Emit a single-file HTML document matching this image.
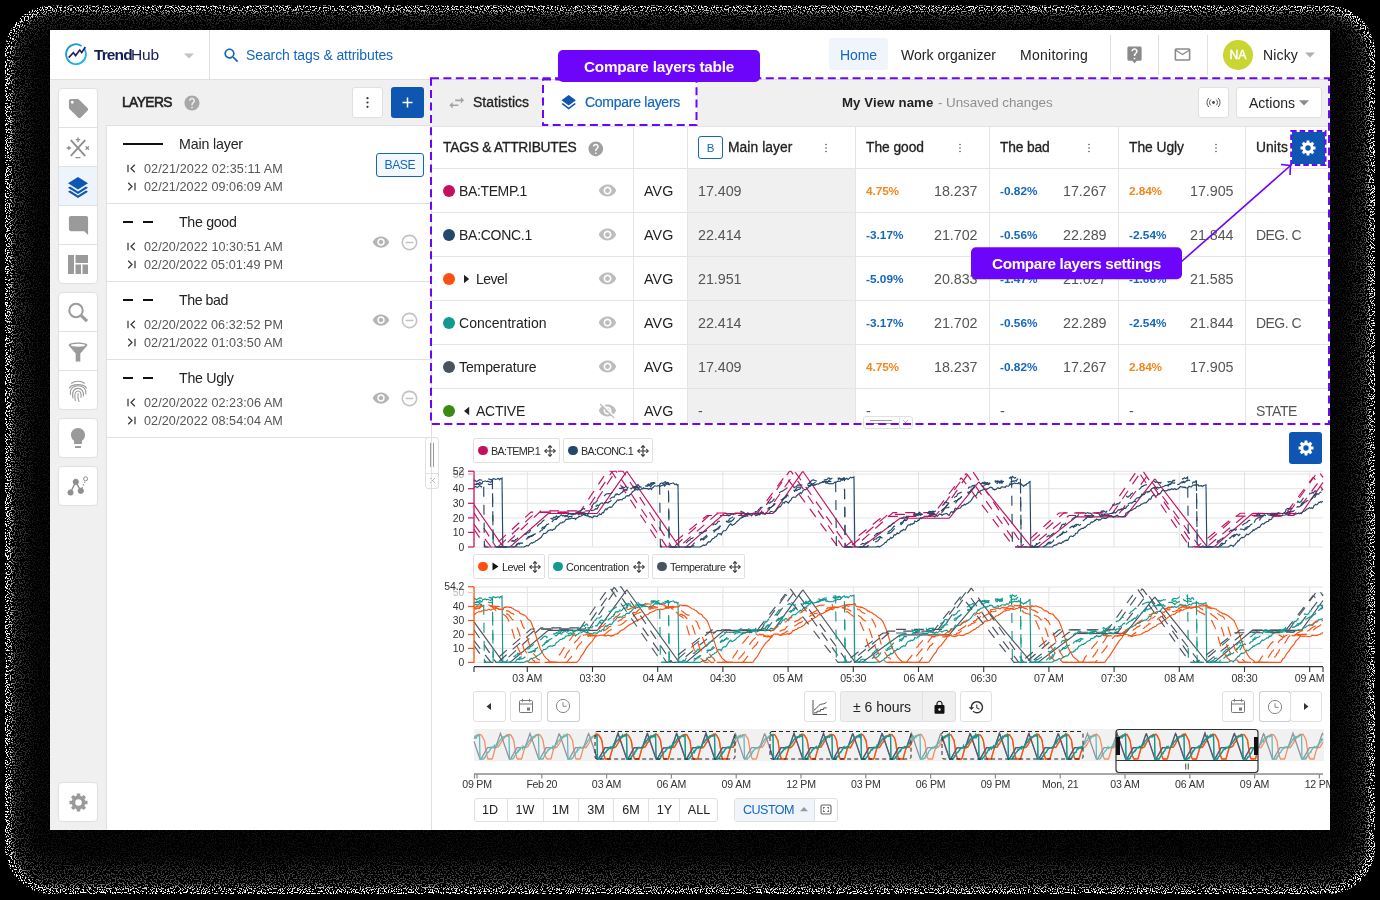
<!DOCTYPE html>
<html><head><meta charset="utf-8"><title>TrendHub</title>
<style>
html,body{margin:0;padding:0;background:#000;}
body{width:1380px;height:900px;position:relative;overflow:hidden;font-family:"Liberation Sans",sans-serif;}
#w{position:absolute;left:0;top:0;width:1380px;height:900px;will-change:transform}
.b{position:absolute;display:block}
.t{position:absolute;white-space:nowrap;line-height:20px;}
</style></head><body><div id="w">
<div class="b" style="left:50px;top:30px;width:1280px;height:800px;background:#fff"></div>
<div class="b" style="left:50px;top:79px;width:1280px;height:1px;background:#e0e0e0"></div>
<svg class="b" style="left:64px;top:42px;" width="26" height="26" viewBox="0 0 26 26"><defs><linearGradient id="lg" x1="0" y1="0" x2="0.3" y2="1"><stop offset="0" stop-color="#1a8fd0"/><stop offset="1" stop-color="#25b4e6"/></linearGradient></defs><circle cx="12" cy="12.2" r="9.9" fill="none" stroke="url(#lg)" stroke-width="1.9" stroke-dasharray="57.7 4.5" transform="rotate(-32 12 12.2)"/><path d="M4.7 15.6L9.3 10.7L11.6 13.6L15.8 8.1L17.7 10.7L21.3 5" fill="none" stroke="#1b1f5e" stroke-width="1.6" stroke-linejoin="miter"/></svg>
<span class="t" style="left:94.00px;top:44.50px;font-size:15.5px;font-weight:700;color:#141c55;letter-spacing:-1.040px;letter-spacing:-0.9px;">Trend</span>
<span class="t" style="left:131.00px;top:44.50px;font-size:15.5px;color:#141c55;letter-spacing:-0.144px;">Hub</span>
<svg class="b" style="left:183px;top:52px;" width="12" height="8" viewBox="0 0 12 8"><path d="M1 1.5h10L6 6.5z" fill="#c4c4c4"/></svg>
<div class="b" style="left:209px;top:30px;width:1px;height:49px;background:#e0e0e0"></div>
<svg style="position:absolute;left:222.00px;top:45.50px" width="19" height="19" viewBox="0 0 24 24" ><path fill="#1565c0" d="M15.5 14h-.79l-.28-.27C15.41 12.59 16 11.11 16 9.5 16 5.91 13.09 3 9.5 3S3 5.91 3 9.5 5.91 16 9.5 16c1.61 0 3.09-.59 4.23-1.57l.27.28v.79l5 4.99L20.49 19l-4.99-5zm-6 0C7.01 14 5 11.99 5 9.5S7.01 5 9.5 5 14 7.01 14 9.5 11.99 14 9.5 14z"/></svg>
<span class="t" style="left:246.00px;top:45.00px;font-size:14px;color:#1565c0;letter-spacing:-0.100px;">Search tags &amp; attributes</span>
<div class="b" style="left:829px;top:38px;width:59px;height:32px;background:#f0f5fb;border-radius:3px"></div>
<span class="t" style="left:840.00px;top:44.50px;font-size:14px;color:#1565c0;letter-spacing:-0.086px;">Home</span>
<span class="t" style="left:901.00px;top:44.50px;font-size:14px;color:#222;letter-spacing:0.024px;">Work organizer</span>
<span class="t" style="left:1020.00px;top:44.50px;font-size:14px;color:#222;letter-spacing:0.264px;">Monitoring</span>
<div class="b" style="left:1110px;top:35px;width:1px;height:40px;background:#e0e0e0"></div>
<div class="b" style="left:1158px;top:35px;width:1px;height:40px;background:#e0e0e0"></div>
<div class="b" style="left:1207px;top:35px;width:1px;height:40px;background:#e0e0e0"></div>
<svg style="position:absolute;left:1125.00px;top:45.00px" width="19" height="19" viewBox="0 0 24 24" ><path fill="#8a8a8a" d="M19 2H5c-1.11 0-2 .9-2 2v14c0 1.1.89 2 2 2h4l3 3 3-3h4c1.1 0 2-.9 2-2V4c0-1.1-.9-2-2-2zm-6 16h-2v-2h2v2zm2.07-7.75l-.9.92C13.45 11.9 13 12.5 13 14h-2v-.5c0-1.1.45-2.1 1.17-2.83l1.24-1.26c.37-.36.59-.86.59-1.41 0-1.1-.9-2-2-2s-2 .9-2 2H8c0-2.21 1.79-4 4-4s4 1.79 4 4c0 .88-.36 1.68-.93 2.25z"/></svg>
<svg style="position:absolute;left:1173.00px;top:44.50px" width="19" height="19" viewBox="0 0 24 24" ><path fill="#8a8a8a" d="M20 4H4c-1.1 0-1.99.9-1.99 2L2 18c0 1.1.9 2 2 2h16c1.1 0 2-.9 2-2V6c0-1.1-.9-2-2-2zm0 14H4V8l8 5 8-5v10zm-8-7L4 6h16l-8 5z"/></svg>
<div class="b" style="left:1223px;top:39.5px;width:30px;height:30px;background:#c9d530;border-radius:50%"></div>
<span class="t" style="left:1229.46px;top:44.80px;font-size:12.3px;-webkit-text-stroke:0.45px #fff;color:#fff;">NA</span>
<span class="t" style="left:1263.00px;top:44.50px;font-size:14px;color:#222;letter-spacing:0.156px;">Nicky</span>
<svg class="b" style="left:1304px;top:51px;" width="12" height="8" viewBox="0 0 12 8"><path d="M1 1.5h10L6 6.5z" fill="#b0b0b0"/></svg>
<div class="b" style="left:50px;top:80px;width:381px;height:750px;background:#f0f0f0"></div>
<div class="b" style="left:58px;top:88px;width:40px;height:196px;background:#fff;border:1px solid #e0e0e0;border-radius:4px;box-sizing:border-box"></div>
<div class="b" style="left:59px;top:127px;width:38px;height:1px;background:#e0e0e0"></div>
<div class="b" style="left:59px;top:167px;width:38px;height:38px;background:#eef4fb"></div>
<div class="b" style="left:59px;top:166px;width:38px;height:1px;background:#e0e0e0"></div>
<div class="b" style="left:59px;top:205px;width:38px;height:1px;background:#e0e0e0"></div>
<div class="b" style="left:59px;top:244px;width:38px;height:1px;background:#e0e0e0"></div>
<div class="b" style="left:58px;top:292px;width:40px;height:118px;background:#fff;border:1px solid #e0e0e0;border-radius:4px;box-sizing:border-box"></div>
<div class="b" style="left:59px;top:331px;width:38px;height:1px;background:#e0e0e0"></div>
<div class="b" style="left:59px;top:370px;width:38px;height:1px;background:#e0e0e0"></div>
<div class="b" style="left:58px;top:418px;width:40px;height:40px;background:#fff;border:1px solid #e0e0e0;border-radius:4px;box-sizing:border-box"></div>
<div class="b" style="left:58px;top:466px;width:40px;height:40px;background:#fff;border:1px solid #e0e0e0;border-radius:4px;box-sizing:border-box"></div>
<div class="b" style="left:58px;top:782px;width:40px;height:40px;background:#fff;border:1px solid #e0e0e0;border-radius:4px;box-sizing:border-box"></div>
<svg style="position:absolute;left:66.50px;top:97.00px" width="23" height="23" viewBox="0 0 24 24" ><path fill="#9a9a9a" d="M21.41 11.58l-9-9C12.05 2.22 11.55 2 11 2H4c-1.1 0-2 .9-2 2v7c0 .55.22 1.05.59 1.42l9 9c.36.36.86.58 1.41.58.55 0 1.05-.22 1.41-.59l7-7c.37-.36.59-.86.59-1.41 0-.55-.23-1.06-.59-1.42zM5.5 7C4.67 7 4 6.33 4 5.5S4.67 4 5.5 4 7 4.67 7 5.5 6.33 7 5.5 7z"/></svg>
<svg class="b" style="left:66px;top:137px;" width="24" height="22" viewBox="0 0 24 22"><g stroke="#8e8e8e" stroke-width="1.9" fill="none" stroke-linecap="round"><path d="M5.3 3.6 L18.7 18.4 M18.7 3.6 L5.3 18.4"/><path d="M12 0.8v3.6M10.2 2.6h3.6" stroke-width="1.3"/><path d="M10 20.6h4" stroke-width="1.4"/><path d="M1.2 11h3.4M2.9 9.3v3.4" stroke-width="1.3"/><path d="M20 9.6l2.6 2.6M22.6 9.6L20 12.2" stroke-width="1.3"/></g></svg>
<svg class="b" style="left:67px;top:175.5px;" width="22" height="22" viewBox="0 0 22 22"><g fill="#0f56b3"><path d="M11 1L1 7.2 11 13.4 21 7.2z"/><path d="M11 15.4L3 10.4 1 11.7 11 17.9 21 11.7 19 10.4z"/><path d="M11 19.4L3 14.4 1 15.7 11 21.9 21 15.7 19 14.4z"/></g></svg>
<svg style="position:absolute;left:66.50px;top:214.00px" width="23" height="23" viewBox="0 0 24 24" ><path fill="#9a9a9a" d="M4 2h16c1.1 0 2 .9 2 2v18l-4-4H4c-1.1 0-2-.9-2-2V4c0-1.1.9-2 2-2z"/></svg>
<svg class="b" style="left:68px;top:255px;" width="20" height="19" viewBox="0 0 20 19"><g fill="#9a9a9a"><rect x="0" y="0" width="6" height="19"/><rect x="7.5" y="0" width="12.5" height="8"/><rect x="7.5" y="9.5" width="5.5" height="9.5"/><rect x="14.5" y="9.5" width="5.5" height="9.5"/></g></svg>
<svg class="b" style="left:66px;top:300px;" width="24" height="24" viewBox="0 0 24 24"><g fill="none" stroke="#9a9a9a"><circle cx="10" cy="10.5" r="6.7" stroke-width="2"/><path d="M15.2 15.7L21 21.2" stroke-width="3.2"/></g></svg>
<svg class="b" style="left:68px;top:342px;" width="20" height="20" viewBox="0 0 20 20"><g fill="#9a9a9a"><path d="M0.5 3.2 C0.5 1.4 5 0.4 10 0.4 C15 0.4 19.5 1.4 19.5 3.2 L12.3 11.5 V19.5 H7.7 V11.5 Z"/><ellipse cx="10" cy="3.2" rx="7.4" ry="1.5" fill="#fff"/></g></svg>
<svg class="b" style="left:67px;top:379px;" width="22" height="24" viewBox="0 0 22 24"><g fill="none" stroke="#9a9a9a" stroke-width="1.1" stroke-linecap="round"><path d="M4.5 4.2C8 1.6 14 1.6 17.5 4.2"/><path d="M2.5 9C5 4.5 17 4.5 19.5 9"/><path d="M3.5 15.5C2.5 9 7 6.8 11 6.8S19.5 9 18.8 15"/><path d="M6 19C4.5 12 7.5 9.4 11 9.4S17 12 16.4 17"/><path d="M8.3 21.5C6.8 15 8.5 12 11 12S14.5 14.5 14 18.5"/><path d="M11 14.5C10.6 18 11 20.5 12 22.5"/></g></svg>
<svg style="position:absolute;left:66.00px;top:426.00px" width="24" height="24" viewBox="0 0 24 24" ><path fill="#9a9a9a" d="M9 21c0 .55.45 1 1 1h4c.55 0 1-.45 1-1v-1H9v1zm3-19C8.14 2 5 5.14 5 9c0 2.38 1.19 4.47 3 5.74V17c0 .55.45 1 1 1h6c.55 0 1-.45 1-1v-2.26c1.81-1.27 3-3.36 3-5.74 0-3.86-3.14-7-7-7z"/></svg>
<svg class="b" style="left:66px;top:474px;" width="24" height="24" viewBox="0 0 24 24"><g fill="#8e8e8e" stroke="#8e8e8e"><circle cx="4.5" cy="18.5" r="2.6"/><circle cx="9.8" cy="7.8" r="2.6"/><circle cx="14.8" cy="16.8" r="2.6"/><path d="M4.5 18.5L9.8 7.8L14.8 16.8" fill="none" stroke-width="1.4"/><path d="M14.8 16.8L19.5 6.3" fill="none" stroke-width="1.2" stroke-dasharray="1.3 1.6"/><circle cx="19.6" cy="4.8" r="2" fill="#fff" stroke-width="1"/></g></svg>
<svg style="position:absolute;left:63.50px;top:788.00px" width="29" height="29" viewBox="0 0 24 24" fill-rule="evenodd"><path fill="#9a9a9a" d="M10.48 6.51L10.62 4.53L13.38 4.53L13.52 6.51L14.81 7.04L16.30 5.74L18.26 7.70L16.96 9.19L17.49 10.48L19.47 10.62L19.47 13.38L17.49 13.52L16.96 14.81L18.26 16.30L16.30 18.26L14.81 16.96L13.52 17.49L13.38 19.47L10.62 19.47L10.48 17.49L9.19 16.96L7.70 18.26L5.74 16.30L7.04 14.81L6.51 13.52L4.53 13.38L4.53 10.62L6.51 10.48L7.04 9.19L5.74 7.70L7.70 5.74L9.19 7.04ZM14.70 12A2.7 2.7 0 1 0 9.30 12A2.7 2.7 0 1 0 14.70 12Z"/></svg>
<span class="t" style="left:122.00px;top:92.50px;font-size:13.8px;-webkit-text-stroke:0.55px #222;color:#222;letter-spacing:-0.573px;">LAYERS</span>
<svg style="position:absolute;left:182.70px;top:94.00px" width="18" height="18" viewBox="0 0 24 24" ><path fill="#a8a8a8" d="M12 2C6.48 2 2 6.48 2 12s4.48 10 10 10 10-4.48 10-10S17.52 2 12 2zm1 17h-2v-2h2v2zm2.07-7.75l-.9.92C13.45 12.9 13 13.5 13 15h-2v-.5c0-1.1.45-2.1 1.17-2.83l1.24-1.26c.37-.36.59-.86.59-1.41 0-1.1-.9-2-2-2s-2 .9-2 2H8c0-2.21 1.79-4 4-4s4 1.79 4 4c0 .88-.36 1.68-.93 2.25z"/></svg>
<div class="b" style="left:352px;top:87px;width:31px;height:31px;background:#fff;border:1px solid #e0e0e0;border-radius:3px;box-sizing:border-box"></div>
<svg class="b" style="left:365px;top:96px;" width="5" height="13" viewBox="0 0 5 13"><g fill="#333"><circle cx="2.5" cy="2.2" r="1.1"/><circle cx="2.5" cy="6.5" r="1.1"/><circle cx="2.5" cy="10.8" r="1.1"/></g></svg>
<div class="b" style="left:391px;top:87px;width:33px;height:31px;background:#0f56b3;border-radius:3px"></div>
<svg class="b" style="left:401px;top:96px;" width="13" height="13" viewBox="0 0 13 13"><path d="M6.5 1.5v10M1.5 6.5h10" stroke="#fff" stroke-width="1.5"/></svg>
<div class="b" style="left:106px;top:125px;width:325px;height:705px;background:#fff;border-left:1px solid #e0e0e0;border-top:1px solid #e0e0e0;box-sizing:border-box"></div>
<div class="b" style="left:107px;top:203px;width:324px;height:1px;background:#e0e0e0"></div>
<div class="b" style="left:123px;top:143.2px;width:40px;height:1.6px;background:#111"></div>
<span class="t" style="left:179.00px;top:134.00px;font-size:14.2px;color:#222;letter-spacing:-0.150px;">Main layer</span>
<span class="t" style="left:144.00px;top:158.50px;font-size:12.6px;color:#555;letter-spacing:0.120px;">02/21/2022 02:35:11 AM</span>
<span class="t" style="left:144.00px;top:176.50px;font-size:12.6px;color:#555;letter-spacing:0.077px;">02/21/2022 09:06:09 AM</span>
<svg class="b" style="left:126px;top:163px;" width="11" height="11" viewBox="0 0 11 11"><path d="M2 1.8v7.4M8.8 1.8L5 5.5l3.8 3.7" fill="none" stroke="#333" stroke-width="1.2"/></svg>
<svg class="b" style="left:126px;top:181px;" width="11" height="11" viewBox="0 0 11 11"><path d="M9 1.8v7.4M2.2 1.8L6 5.5L2.2 9.2" fill="none" stroke="#333" stroke-width="1.2"/></svg>
<div class="b" style="left:376px;top:152.5px;width:47.5px;height:24px;background:#f3f8fd;border:1px solid #1565c0;border-radius:3px;box-sizing:border-box"></div>
<span class="t" style="left:384.55px;top:155.00px;font-size:12.2px;color:#1565c0;letter-spacing:-0.513px;">BASE</span>
<div class="b" style="left:107px;top:281px;width:324px;height:1px;background:#e0e0e0"></div>
<div class="b" style="left:123px;top:221.2px;width:10px;height:1.8px;background:#111"></div>
<div class="b" style="left:143px;top:221.2px;width:10px;height:1.8px;background:#111"></div>
<span class="t" style="left:179.00px;top:212.00px;font-size:14.2px;color:#222;letter-spacing:-0.312px;">The good</span>
<span class="t" style="left:144.00px;top:236.50px;font-size:12.6px;color:#555;letter-spacing:0.077px;">02/20/2022 10:30:51 AM</span>
<span class="t" style="left:144.00px;top:254.50px;font-size:12.6px;color:#555;letter-spacing:0.046px;">02/20/2022 05:01:49 PM</span>
<svg class="b" style="left:126px;top:241px;" width="11" height="11" viewBox="0 0 11 11"><path d="M2 1.8v7.4M8.8 1.8L5 5.5l3.8 3.7" fill="none" stroke="#333" stroke-width="1.2"/></svg>
<svg class="b" style="left:126px;top:259px;" width="11" height="11" viewBox="0 0 11 11"><path d="M9 1.8v7.4M2.2 1.8L6 5.5L2.2 9.2" fill="none" stroke="#333" stroke-width="1.2"/></svg>
<svg style="position:absolute;left:372.00px;top:233.00px" width="18" height="18" viewBox="0 0 24 24" ><path fill="#b5b5b5" d="M12 4.5C7 4.5 2.73 7.61 1 12c1.73 4.39 6 7.5 11 7.5s9.27-3.11 11-7.5c-1.73-4.39-6-7.5-11-7.5zM12 17c-2.76 0-5-2.24-5-5s2.24-5 5-5 5 2.24 5 5-2.24 5-5 5zm0-8c-1.66 0-3 1.34-3 3s1.34 3 3 3 3-1.34 3-3-1.34-3-3-3z"/></svg>
<svg style="position:absolute;left:399.50px;top:232.50px" width="19" height="19" viewBox="0 0 24 24" ><path fill="#c2c2c2" d="M7 11v2h10v-2H7zm5-9C6.48 2 2 6.48 2 12s4.48 10 10 10 10-4.48 10-10S17.52 2 12 2zm0 18c-4.41 0-8-3.59-8-8s3.59-8 8-8 8 3.59 8 8-3.59 8-8 8z"/></svg>
<div class="b" style="left:107px;top:359px;width:324px;height:1px;background:#e0e0e0"></div>
<div class="b" style="left:123px;top:299.2px;width:10px;height:1.8px;background:#111"></div>
<div class="b" style="left:143px;top:299.2px;width:10px;height:1.8px;background:#111"></div>
<span class="t" style="left:179.00px;top:290.00px;font-size:14.2px;color:#222;letter-spacing:-0.443px;">The bad</span>
<span class="t" style="left:144.00px;top:314.50px;font-size:12.6px;color:#555;letter-spacing:0.046px;">02/20/2022 06:32:52 PM</span>
<span class="t" style="left:144.00px;top:332.50px;font-size:12.6px;color:#555;letter-spacing:0.077px;">02/21/2022 01:03:50 AM</span>
<svg class="b" style="left:126px;top:319px;" width="11" height="11" viewBox="0 0 11 11"><path d="M2 1.8v7.4M8.8 1.8L5 5.5l3.8 3.7" fill="none" stroke="#333" stroke-width="1.2"/></svg>
<svg class="b" style="left:126px;top:337px;" width="11" height="11" viewBox="0 0 11 11"><path d="M9 1.8v7.4M2.2 1.8L6 5.5L2.2 9.2" fill="none" stroke="#333" stroke-width="1.2"/></svg>
<svg style="position:absolute;left:372.00px;top:311.00px" width="18" height="18" viewBox="0 0 24 24" ><path fill="#b5b5b5" d="M12 4.5C7 4.5 2.73 7.61 1 12c1.73 4.39 6 7.5 11 7.5s9.27-3.11 11-7.5c-1.73-4.39-6-7.5-11-7.5zM12 17c-2.76 0-5-2.24-5-5s2.24-5 5-5 5 2.24 5 5-2.24 5-5 5zm0-8c-1.66 0-3 1.34-3 3s1.34 3 3 3 3-1.34 3-3-1.34-3-3-3z"/></svg>
<svg style="position:absolute;left:399.50px;top:310.50px" width="19" height="19" viewBox="0 0 24 24" ><path fill="#c2c2c2" d="M7 11v2h10v-2H7zm5-9C6.48 2 2 6.48 2 12s4.48 10 10 10 10-4.48 10-10S17.52 2 12 2zm0 18c-4.41 0-8-3.59-8-8s3.59-8 8-8 8 3.59 8 8-3.59 8-8 8z"/></svg>
<div class="b" style="left:107px;top:437px;width:324px;height:1px;background:#e0e0e0"></div>
<div class="b" style="left:123px;top:377.2px;width:10px;height:1.8px;background:#111"></div>
<div class="b" style="left:143px;top:377.2px;width:10px;height:1.8px;background:#111"></div>
<span class="t" style="left:179.00px;top:368.00px;font-size:14.2px;color:#222;letter-spacing:-0.290px;">The Ugly</span>
<span class="t" style="left:144.00px;top:392.50px;font-size:12.6px;color:#555;letter-spacing:0.077px;">02/20/2022 02:23:06 AM</span>
<span class="t" style="left:144.00px;top:410.50px;font-size:12.6px;color:#555;letter-spacing:0.077px;">02/20/2022 08:54:04 AM</span>
<svg class="b" style="left:126px;top:397px;" width="11" height="11" viewBox="0 0 11 11"><path d="M2 1.8v7.4M8.8 1.8L5 5.5l3.8 3.7" fill="none" stroke="#333" stroke-width="1.2"/></svg>
<svg class="b" style="left:126px;top:415px;" width="11" height="11" viewBox="0 0 11 11"><path d="M9 1.8v7.4M2.2 1.8L6 5.5L2.2 9.2" fill="none" stroke="#333" stroke-width="1.2"/></svg>
<svg style="position:absolute;left:372.00px;top:389.00px" width="18" height="18" viewBox="0 0 24 24" ><path fill="#b5b5b5" d="M12 4.5C7 4.5 2.73 7.61 1 12c1.73 4.39 6 7.5 11 7.5s9.27-3.11 11-7.5c-1.73-4.39-6-7.5-11-7.5zM12 17c-2.76 0-5-2.24-5-5s2.24-5 5-5 5 2.24 5 5-2.24 5-5 5zm0-8c-1.66 0-3 1.34-3 3s1.34 3 3 3 3-1.34 3-3-1.34-3-3-3z"/></svg>
<svg style="position:absolute;left:399.50px;top:388.50px" width="19" height="19" viewBox="0 0 24 24" ><path fill="#c2c2c2" d="M7 11v2h10v-2H7zm5-9C6.48 2 2 6.48 2 12s4.48 10 10 10 10-4.48 10-10S17.52 2 12 2zm0 18c-4.41 0-8-3.59-8-8s3.59-8 8-8 8 3.59 8 8-3.59 8-8 8z"/></svg>
<div class="b" style="left:425px;top:437px;width:14px;height:52px;background:#fff;border:1px solid #e0e0e0;border-radius:3px;box-sizing:border-box"></div>
<div class="b" style="left:426px;top:472.5px;width:12px;height:1px;background:#e0e0e0"></div>
<div class="b" style="left:429.5px;top:443px;width:1px;height:24px;background:#999"></div>
<div class="b" style="left:432.5px;top:443px;width:1px;height:24px;background:#999"></div>
<svg class="b" style="left:428.5px;top:477px;" width="7" height="7" viewBox="0 0 7 7"><path d="M1 1l5 5M6 1L1 6" stroke="#aaa" stroke-width="0.9"/></svg>
<div class="b" style="left:431px;top:126px;width:1px;height:704px;background:#e0e0e0"></div>
<div class="b" style="left:432px;top:80px;width:898px;height:46px;background:#f0f0f0"></div>
<svg style="position:absolute;left:447.45px;top:92.85px" width="19.5" height="19.5" viewBox="0 0 24 24" ><path fill="#a3a3a3" d="M6.99 11L3 15l3.99 4v-3H14v-2H6.99v-3zM21 9l-3.99-4v3H10v2h7.01v3L21 9z"/></svg>
<span class="t" style="left:473.00px;top:91.60px;font-size:14px;-webkit-text-stroke:0.3px #222;color:#222;letter-spacing:-0.001px;">Statistics</span>
<div class="b" style="left:543px;top:80px;width:154px;height:46px;background:#fff"></div>
<svg class="b" style="left:561.3px;top:93.6px;" width="16" height="17" viewBox="0 0 16 17"><g fill="#0f56b3"><path d="M7.7 1L0.5 6.2 7.7 11.4 14.9 6.2z"/><path d="M7.7 13.4L1.8 9.1 0.5 10.1 7.7 15.4 14.9 10.1 13.6 9.1z"/></g></svg>
<span class="t" style="left:585.00px;top:91.60px;font-size:14px;-webkit-text-stroke:0.2px #1565c0;color:#1565c0;letter-spacing:-0.272px;">Compare layers</span>
<span class="t" style="left:842.00px;top:93.00px;font-size:13.2px;font-weight:700;color:#222;letter-spacing:0.126px;">My View name</span>
<span class="t" style="left:938.00px;top:93.00px;font-size:13.4px;color:#8f8f8f;letter-spacing:-0.044px;">- Unsaved changes</span>
<div class="b" style="left:1198px;top:87px;width:31px;height:31px;background:#fff;border:1px solid #e0e0e0;border-radius:3px;box-sizing:border-box"></div>
<svg class="b" style="left:1205px;top:96px;" width="17" height="13" viewBox="0 0 17 13"><g fill="none" stroke="#444" stroke-width="0.9"><circle cx="8.5" cy="6.5" r="1.4" fill="#444" stroke="none"/><path d="M5.8 3.6a4 4 0 0 0 0 5.8M11.2 3.6a4 4 0 0 1 0 5.8"/><path d="M3.8 2a6.4 6.4 0 0 0 0 9M13.2 2a6.4 6.4 0 0 1 0 9"/></g></svg>
<div class="b" style="left:1236px;top:87px;width:86px;height:31px;background:#fff;border:1px solid #e0e0e0;border-radius:3px;box-sizing:border-box"></div>
<span class="t" style="left:1249.00px;top:92.50px;font-size:14px;color:#222;letter-spacing:0.013px;">Actions</span>
<svg class="b" style="left:1298px;top:99px;" width="12" height="8" viewBox="0 0 12 8"><path d="M1 1.2h10L6 6.5z" fill="#8a8a8a"/></svg>
<div class="b" style="left:686.5px;top:169px;width:168.5px;height:254px;background:#f0f0f0"></div>
<div class="b" style="left:432px;top:125.5px;width:898px;height:1px;background:#e4e4e4"></div>
<div class="b" style="left:432px;top:168px;width:898px;height:1px;background:#e4e4e4"></div>
<div class="b" style="left:432px;top:212px;width:898px;height:1px;background:#e4e4e4"></div>
<div class="b" style="left:432px;top:256px;width:898px;height:1px;background:#e4e4e4"></div>
<div class="b" style="left:432px;top:300px;width:898px;height:1px;background:#e4e4e4"></div>
<div class="b" style="left:432px;top:344px;width:898px;height:1px;background:#e4e4e4"></div>
<div class="b" style="left:432px;top:388px;width:898px;height:1px;background:#e4e4e4"></div>
<div class="b" style="left:633px;top:126px;width:1px;height:297px;background:#e4e4e4"></div>
<div class="b" style="left:687px;top:126px;width:1px;height:297px;background:#e4e4e4"></div>
<div class="b" style="left:855px;top:126px;width:1px;height:297px;background:#e4e4e4"></div>
<div class="b" style="left:989px;top:126px;width:1px;height:297px;background:#e4e4e4"></div>
<div class="b" style="left:1118px;top:126px;width:1px;height:297px;background:#e4e4e4"></div>
<div class="b" style="left:1245px;top:126px;width:1px;height:297px;background:#e4e4e4"></div>
<span class="t" style="left:443.00px;top:138.00px;font-size:13.8px;-webkit-text-stroke:0.3px #222;color:#222;letter-spacing:-0.236px;">TAGS &amp; ATTRIBUTES</span>
<svg style="position:absolute;left:587.20px;top:139.70px" width="17.6" height="17.6" viewBox="0 0 24 24" ><path fill="#a0a0a0" d="M12 2C6.48 2 2 6.48 2 12s4.48 10 10 10 10-4.48 10-10S17.52 2 12 2zm1 17h-2v-2h2v2zm2.07-7.75l-.9.92C13.45 12.9 13 13.5 13 15h-2v-.5c0-1.1.45-2.1 1.17-2.83l1.24-1.26c.37-.36.59-.86.59-1.41 0-1.1-.9-2-2-2s-2 .9-2 2H8c0-2.21 1.79-4 4-4s4 1.79 4 4c0 .88-.36 1.68-.93 2.25z"/></svg>
<div class="b" style="left:698px;top:136px;width:25px;height:23px;background:#fff;border:1px solid #1565c0;border-radius:3px;box-sizing:border-box"></div>
<span class="t" style="left:706.66px;top:137.50px;font-size:11.5px;color:#1565c0;">B</span>
<span class="t" style="left:728.00px;top:138.00px;font-size:13.8px;-webkit-text-stroke:0.3px #222;color:#222;letter-spacing:0.085px;">Main layer</span>
<svg class="b" style="left:824px;top:143px;" width="4" height="10" viewBox="0 0 4 10"><g fill="#555"><circle cx="2" cy="1.5" r="0.8"/><circle cx="2" cy="5" r="0.8"/><circle cx="2" cy="8.5" r="0.8"/></g></svg>
<span class="t" style="left:866.00px;top:138.00px;font-size:13.8px;-webkit-text-stroke:0.3px #222;color:#222;letter-spacing:-0.038px;">The good</span>
<svg class="b" style="left:958px;top:143px;" width="4" height="10" viewBox="0 0 4 10"><g fill="#555"><circle cx="2" cy="1.5" r="0.8"/><circle cx="2" cy="5" r="0.8"/><circle cx="2" cy="8.5" r="0.8"/></g></svg>
<span class="t" style="left:1000.00px;top:138.00px;font-size:13.8px;-webkit-text-stroke:0.3px #222;color:#222;letter-spacing:-0.162px;">The bad</span>
<svg class="b" style="left:1087px;top:143px;" width="4" height="10" viewBox="0 0 4 10"><g fill="#555"><circle cx="2" cy="1.5" r="0.8"/><circle cx="2" cy="5" r="0.8"/><circle cx="2" cy="8.5" r="0.8"/></g></svg>
<span class="t" style="left:1129.00px;top:138.00px;font-size:13.8px;-webkit-text-stroke:0.3px #222;color:#222;letter-spacing:-0.027px;">The Ugly</span>
<svg class="b" style="left:1214px;top:143px;" width="4" height="10" viewBox="0 0 4 10"><g fill="#555"><circle cx="2" cy="1.5" r="0.8"/><circle cx="2" cy="5" r="0.8"/><circle cx="2" cy="8.5" r="0.8"/></g></svg>
<span class="t" style="left:1256.00px;top:138.00px;font-size:13.8px;-webkit-text-stroke:0.3px #222;color:#222;letter-spacing:0.112px;">Units</span>
<div class="b" style="left:432px;top:126px;width:898px;height:297px;overflow:hidden"><div style="position:absolute;left:-432px;top:-126px">
<div class="b" style="left:443px;top:184.5px;width:12px;height:12px;background:#c4105f;border-radius:50%"></div>
<span class="t" style="left:459.00px;top:180.50px;font-size:14px;color:#222;letter-spacing:-0.370px;">BA:TEMP.1</span>
<svg style="position:absolute;left:598.00px;top:181.00px" width="19" height="19" viewBox="0 0 24 24" ><path fill="#bdbdbd" d="M12 4.5C7 4.5 2.73 7.61 1 12c1.73 4.39 6 7.5 11 7.5s9.27-3.11 11-7.5c-1.73-4.39-6-7.5-11-7.5zM12 17c-2.76 0-5-2.24-5-5s2.24-5 5-5 5 2.24 5 5-2.24 5-5 5zm0-8c-1.66 0-3 1.34-3 3s1.34 3 3 3 3-1.34 3-3-1.34-3-3-3z"/></svg>
<span class="t" style="left:644.00px;top:180.50px;font-size:14.3px;color:#222;letter-spacing:0.121px;">AVG</span>
<span class="t" style="left:698.00px;top:180.50px;font-size:14.3px;color:#555;letter-spacing:-0.039px;">17.409</span>
<span class="t" style="left:866.00px;top:180.50px;font-size:11.8px;font-weight:700;color:#f5861f;letter-spacing:-0.091px;">4.75%</span>
<span class="t" style="left:934.00px;top:180.50px;font-size:14.3px;color:#555;letter-spacing:-0.039px;">18.237</span>
<span class="t" style="left:1000.00px;top:180.50px;font-size:11.8px;font-weight:700;color:#1565c0;letter-spacing:0.019px;">-0.82%</span>
<span class="t" style="left:1063.00px;top:180.50px;font-size:14.3px;color:#555;letter-spacing:-0.039px;">17.267</span>
<span class="t" style="left:1129.00px;top:180.50px;font-size:11.8px;font-weight:700;color:#f5861f;letter-spacing:-0.091px;">2.84%</span>
<span class="t" style="left:1190.00px;top:180.50px;font-size:14.3px;color:#555;letter-spacing:-0.039px;">17.905</span>
<div class="b" style="left:443px;top:228.5px;width:12px;height:12px;background:#23486b;border-radius:50%"></div>
<span class="t" style="left:459.00px;top:224.50px;font-size:14px;color:#222;letter-spacing:-0.274px;">BA:CONC.1</span>
<svg style="position:absolute;left:598.00px;top:225.00px" width="19" height="19" viewBox="0 0 24 24" ><path fill="#bdbdbd" d="M12 4.5C7 4.5 2.73 7.61 1 12c1.73 4.39 6 7.5 11 7.5s9.27-3.11 11-7.5c-1.73-4.39-6-7.5-11-7.5zM12 17c-2.76 0-5-2.24-5-5s2.24-5 5-5 5 2.24 5 5-2.24 5-5 5zm0-8c-1.66 0-3 1.34-3 3s1.34 3 3 3 3-1.34 3-3-1.34-3-3-3z"/></svg>
<span class="t" style="left:644.00px;top:224.50px;font-size:14.3px;color:#222;letter-spacing:0.121px;">AVG</span>
<span class="t" style="left:698.00px;top:224.50px;font-size:14.3px;color:#555;letter-spacing:-0.039px;">22.414</span>
<span class="t" style="left:866.00px;top:224.50px;font-size:11.8px;font-weight:700;color:#1565c0;letter-spacing:0.019px;">-3.17%</span>
<span class="t" style="left:934.00px;top:224.50px;font-size:14.3px;color:#555;letter-spacing:-0.039px;">21.702</span>
<span class="t" style="left:1000.00px;top:224.50px;font-size:11.8px;font-weight:700;color:#1565c0;letter-spacing:0.019px;">-0.56%</span>
<span class="t" style="left:1063.00px;top:224.50px;font-size:14.3px;color:#555;letter-spacing:-0.039px;">22.289</span>
<span class="t" style="left:1129.00px;top:224.50px;font-size:11.8px;font-weight:700;color:#1565c0;letter-spacing:0.019px;">-2.54%</span>
<span class="t" style="left:1190.00px;top:224.50px;font-size:14.3px;color:#555;letter-spacing:-0.039px;">21.844</span>
<span class="t" style="left:1256.00px;top:224.50px;font-size:14px;color:#555;letter-spacing:-0.538px;">DEG. C</span>
<div class="b" style="left:443px;top:272.5px;width:12px;height:12px;background:#fb5012;border-radius:50%"></div>
<svg class="b" style="left:463px;top:273.5px;" width="7" height="10" viewBox="0 0 7 10"><path d="M1 0.8v8.4L6.2 5z" fill="#222"/></svg>
<span class="t" style="left:476.00px;top:268.50px;font-size:14px;color:#222;letter-spacing:-0.493px;">Level</span>
<svg style="position:absolute;left:598.00px;top:269.00px" width="19" height="19" viewBox="0 0 24 24" ><path fill="#bdbdbd" d="M12 4.5C7 4.5 2.73 7.61 1 12c1.73 4.39 6 7.5 11 7.5s9.27-3.11 11-7.5c-1.73-4.39-6-7.5-11-7.5zM12 17c-2.76 0-5-2.24-5-5s2.24-5 5-5 5 2.24 5 5-2.24 5-5 5zm0-8c-1.66 0-3 1.34-3 3s1.34 3 3 3 3-1.34 3-3-1.34-3-3-3z"/></svg>
<span class="t" style="left:644.00px;top:268.50px;font-size:14.3px;color:#222;letter-spacing:0.121px;">AVG</span>
<span class="t" style="left:698.00px;top:268.50px;font-size:14.3px;color:#555;letter-spacing:-0.039px;">21.951</span>
<span class="t" style="left:866.00px;top:268.50px;font-size:11.8px;font-weight:700;color:#1565c0;letter-spacing:0.019px;">-5.09%</span>
<span class="t" style="left:934.00px;top:268.50px;font-size:14.3px;color:#555;letter-spacing:-0.039px;">20.833</span>
<span class="t" style="left:1000.00px;top:268.50px;font-size:11.8px;font-weight:700;color:#1565c0;letter-spacing:0.019px;">-1.47%</span>
<span class="t" style="left:1063.00px;top:268.50px;font-size:14.3px;color:#555;letter-spacing:-0.039px;">21.627</span>
<span class="t" style="left:1129.00px;top:268.50px;font-size:11.8px;font-weight:700;color:#1565c0;letter-spacing:0.019px;">-1.66%</span>
<span class="t" style="left:1190.00px;top:268.50px;font-size:14.3px;color:#555;letter-spacing:-0.039px;">21.585</span>
<div class="b" style="left:443px;top:316.5px;width:12px;height:12px;background:#139a90;border-radius:50%"></div>
<span class="t" style="left:459.00px;top:312.50px;font-size:14px;color:#222;letter-spacing:0.026px;">Concentration</span>
<svg style="position:absolute;left:598.00px;top:313.00px" width="19" height="19" viewBox="0 0 24 24" ><path fill="#bdbdbd" d="M12 4.5C7 4.5 2.73 7.61 1 12c1.73 4.39 6 7.5 11 7.5s9.27-3.11 11-7.5c-1.73-4.39-6-7.5-11-7.5zM12 17c-2.76 0-5-2.24-5-5s2.24-5 5-5 5 2.24 5 5-2.24 5-5 5zm0-8c-1.66 0-3 1.34-3 3s1.34 3 3 3 3-1.34 3-3-1.34-3-3-3z"/></svg>
<span class="t" style="left:644.00px;top:312.50px;font-size:14.3px;color:#222;letter-spacing:0.121px;">AVG</span>
<span class="t" style="left:698.00px;top:312.50px;font-size:14.3px;color:#555;letter-spacing:-0.039px;">22.414</span>
<span class="t" style="left:866.00px;top:312.50px;font-size:11.8px;font-weight:700;color:#1565c0;letter-spacing:0.019px;">-3.17%</span>
<span class="t" style="left:934.00px;top:312.50px;font-size:14.3px;color:#555;letter-spacing:-0.039px;">21.702</span>
<span class="t" style="left:1000.00px;top:312.50px;font-size:11.8px;font-weight:700;color:#1565c0;letter-spacing:0.019px;">-0.56%</span>
<span class="t" style="left:1063.00px;top:312.50px;font-size:14.3px;color:#555;letter-spacing:-0.039px;">22.289</span>
<span class="t" style="left:1129.00px;top:312.50px;font-size:11.8px;font-weight:700;color:#1565c0;letter-spacing:0.019px;">-2.54%</span>
<span class="t" style="left:1190.00px;top:312.50px;font-size:14.3px;color:#555;letter-spacing:-0.039px;">21.844</span>
<span class="t" style="left:1256.00px;top:312.50px;font-size:14px;color:#555;letter-spacing:-0.538px;">DEG. C</span>
<div class="b" style="left:443px;top:360.5px;width:12px;height:12px;background:#47535f;border-radius:50%"></div>
<span class="t" style="left:459.00px;top:356.50px;font-size:14px;color:#222;letter-spacing:-0.099px;">Temperature</span>
<svg style="position:absolute;left:598.00px;top:357.00px" width="19" height="19" viewBox="0 0 24 24" ><path fill="#bdbdbd" d="M12 4.5C7 4.5 2.73 7.61 1 12c1.73 4.39 6 7.5 11 7.5s9.27-3.11 11-7.5c-1.73-4.39-6-7.5-11-7.5zM12 17c-2.76 0-5-2.24-5-5s2.24-5 5-5 5 2.24 5 5-2.24 5-5 5zm0-8c-1.66 0-3 1.34-3 3s1.34 3 3 3 3-1.34 3-3-1.34-3-3-3z"/></svg>
<span class="t" style="left:644.00px;top:356.50px;font-size:14.3px;color:#222;letter-spacing:0.121px;">AVG</span>
<span class="t" style="left:698.00px;top:356.50px;font-size:14.3px;color:#555;letter-spacing:-0.039px;">17.409</span>
<span class="t" style="left:866.00px;top:356.50px;font-size:11.8px;font-weight:700;color:#f5861f;letter-spacing:-0.091px;">4.75%</span>
<span class="t" style="left:934.00px;top:356.50px;font-size:14.3px;color:#555;letter-spacing:-0.039px;">18.237</span>
<span class="t" style="left:1000.00px;top:356.50px;font-size:11.8px;font-weight:700;color:#1565c0;letter-spacing:0.019px;">-0.82%</span>
<span class="t" style="left:1063.00px;top:356.50px;font-size:14.3px;color:#555;letter-spacing:-0.039px;">17.267</span>
<span class="t" style="left:1129.00px;top:356.50px;font-size:11.8px;font-weight:700;color:#f5861f;letter-spacing:-0.091px;">2.84%</span>
<span class="t" style="left:1190.00px;top:356.50px;font-size:14.3px;color:#555;letter-spacing:-0.039px;">17.905</span>
<div class="b" style="left:443px;top:404.5px;width:12px;height:12px;background:#3a8a12;border-radius:50%"></div>
<svg class="b" style="left:463px;top:405.5px;" width="7" height="10" viewBox="0 0 7 10"><path d="M6.2 0.8v8.4L1 5z" fill="#222"/></svg>
<span class="t" style="left:476.00px;top:400.50px;font-size:14px;color:#222;letter-spacing:-0.261px;">ACTIVE</span>
<svg style="position:absolute;left:598.00px;top:401.00px" width="19" height="19" viewBox="0 0 24 24" ><path fill="#bdbdbd" d="M12 7c2.76 0 5 2.24 5 5 0 .65-.13 1.26-.36 1.83l2.92 2.92c1.51-1.26 2.7-2.89 3.43-4.75-1.73-4.39-6-7.5-11-7.5-1.4 0-2.74.25-3.98.7l2.16 2.16C10.74 7.13 11.35 7 12 7zM2 4.27l2.28 2.28.46.46C3.08 8.3 1.78 10.02 1 12c1.73 4.39 6 7.5 11 7.5 1.55 0 3.03-.3 4.38-.84l.42.42L19.73 22 21 20.73 3.27 3 2 4.27zM7.53 9.8l1.55 1.55c-.05.21-.08.43-.08.65 0 1.66 1.34 3 3 3 .22 0 .44-.03.65-.08l1.55 1.55c-.67.33-1.41.53-2.2.53-2.76 0-5-2.24-5-5 0-.79.2-1.53.53-2.2zm4.31-.78l3.15 3.15.02-.16c0-1.66-1.34-3-3-3l-.17.01z"/></svg>
<span class="t" style="left:644.00px;top:400.50px;font-size:14.3px;color:#222;letter-spacing:0.121px;">AVG</span>
<span class="t" style="left:698.00px;top:400.50px;font-size:14.3px;color:#555;">-</span>
<span class="t" style="left:866.00px;top:400.50px;font-size:14.3px;color:#555;">-</span>
<span class="t" style="left:1000.00px;top:400.50px;font-size:14.3px;color:#555;">-</span>
<span class="t" style="left:1129.00px;top:400.50px;font-size:14.3px;color:#555;">-</span>
<span class="t" style="left:1256.00px;top:400.50px;font-size:14px;color:#555;letter-spacing:-0.408px;">STATE</span>
</div></div>
<div class="b" style="left:1292px;top:132px;width:33px;height:32px;background:#0f56b3"></div>
<svg style="position:absolute;left:1296.00px;top:136.00px" width="24" height="24" viewBox="0 0 24 24" fill-rule="evenodd"><path fill="#fff" d="M10.48 6.51L10.62 4.53L13.38 4.53L13.52 6.51L14.81 7.04L16.30 5.74L18.26 7.70L16.96 9.19L17.49 10.48L19.47 10.62L19.47 13.38L17.49 13.52L16.96 14.81L18.26 16.30L16.30 18.26L14.81 16.96L13.52 17.49L13.38 19.47L10.62 19.47L10.48 17.49L9.19 16.96L7.70 18.26L5.74 16.30L7.04 14.81L6.51 13.52L4.53 13.38L4.53 10.62L6.51 10.48L7.04 9.19L5.74 7.70L7.70 5.74L9.19 7.04ZM14.70 12A2.7 2.7 0 1 0 9.30 12A2.7 2.7 0 1 0 14.70 12Z"/></svg>
<div class="b" style="left:862.5px;top:416px;width:50px;height:13px;background:#fff;border:1px solid #e0e0e0;border-radius:3px;box-sizing:border-box"></div>
<div class="b" style="left:899px;top:417px;width:1px;height:11px;background:#e0e0e0"></div>
<div class="b" style="left:870px;top:419.5px;width:22px;height:1px;background:#999"></div>
<div class="b" style="left:870px;top:422.5px;width:22px;height:1px;background:#999"></div>
<svg class="b" style="left:902px;top:419px;" width="7" height="7" viewBox="0 0 7 7"><path d="M1 1l5 5M6 1L1 6" stroke="#aaa" stroke-width="0.8"/></svg>
<div class="b" style="left:1289px;top:432px;width:33px;height:32px;background:#0f56b3;border-radius:3px"></div>
<svg style="position:absolute;left:1293.50px;top:436.00px" width="24" height="24" viewBox="0 0 24 24" fill-rule="evenodd"><path fill="#fff" d="M10.48 6.51L10.62 4.53L13.38 4.53L13.52 6.51L14.81 7.04L16.30 5.74L18.26 7.70L16.96 9.19L17.49 10.48L19.47 10.62L19.47 13.38L17.49 13.52L16.96 14.81L18.26 16.30L16.30 18.26L14.81 16.96L13.52 17.49L13.38 19.47L10.62 19.47L10.48 17.49L9.19 16.96L7.70 18.26L5.74 16.30L7.04 14.81L6.51 13.52L4.53 13.38L4.53 10.62L6.51 10.48L7.04 9.19L5.74 7.70L7.70 5.74L9.19 7.04ZM14.70 12A2.7 2.7 0 1 0 9.30 12A2.7 2.7 0 1 0 14.70 12Z"/></svg>
<div class="b" style="left:473px;top:438px;width:87px;height:25px;background:#fff;border:1px solid #e0e0e0;border-radius:2px;box-sizing:border-box"></div>
<div class="b" style="left:478px;top:445.5px;width:9.5px;height:9.5px;background:#c4105f;border-radius:50%"></div>
<span class="t" style="left:491.00px;top:440.50px;font-size:10.8px;color:#2a2a2a;letter-spacing:-0.669px;">BA:TEMP.1</span>
<svg class="b" style="left:543.5px;top:444.5px;" width="12" height="12" viewBox="0 0 12 12"><g fill="none" stroke="#333" stroke-width="1.05"><path d="M6 0.8V11.2M0.8 6H11.2"/><path d="M4.1 2.7L6 0.8L7.9 2.7M4.1 9.3L6 11.2L7.9 9.3M2.7 4.1L0.8 6L2.7 7.9M9.3 4.1L11.2 6L9.3 7.9" stroke-linejoin="miter"/></g></svg>
<div class="b" style="left:563px;top:438px;width:90px;height:25px;background:#fff;border:1px solid #e0e0e0;border-radius:2px;box-sizing:border-box"></div>
<div class="b" style="left:568px;top:445.5px;width:9.5px;height:9.5px;background:#23486b;border-radius:50%"></div>
<span class="t" style="left:581.00px;top:440.50px;font-size:10.8px;color:#2a2a2a;letter-spacing:-0.690px;">BA:CONC.1</span>
<svg class="b" style="left:636.5px;top:444.5px;" width="12" height="12" viewBox="0 0 12 12"><g fill="none" stroke="#333" stroke-width="1.05"><path d="M6 0.8V11.2M0.8 6H11.2"/><path d="M4.1 2.7L6 0.8L7.9 2.7M4.1 9.3L6 11.2L7.9 9.3M2.7 4.1L0.8 6L2.7 7.9M9.3 4.1L11.2 6L9.3 7.9" stroke-linejoin="miter"/></g></svg>
<div class="b" style="left:473px;top:554px;width:72px;height:25px;background:#fff;border:1px solid #e0e0e0;border-radius:2px;box-sizing:border-box"></div>
<div class="b" style="left:478px;top:561.5px;width:9.5px;height:9.5px;background:#fb5012;border-radius:50%"></div>
<svg class="b" style="left:492px;top:562px;" width="7" height="9" viewBox="0 0 7 9"><path d="M0.5 0.5v8L6.5 4.5z" fill="#111"/></svg>
<span class="t" style="left:502.00px;top:556.50px;font-size:10.8px;color:#2a2a2a;letter-spacing:-0.563px;">Level</span>
<svg class="b" style="left:528.5px;top:560.5px;" width="12" height="12" viewBox="0 0 12 12"><g fill="none" stroke="#333" stroke-width="1.05"><path d="M6 0.8V11.2M0.8 6H11.2"/><path d="M4.1 2.7L6 0.8L7.9 2.7M4.1 9.3L6 11.2L7.9 9.3M2.7 4.1L0.8 6L2.7 7.9M9.3 4.1L11.2 6L9.3 7.9" stroke-linejoin="miter"/></g></svg>
<div class="b" style="left:548px;top:554px;width:101px;height:25px;background:#fff;border:1px solid #e0e0e0;border-radius:2px;box-sizing:border-box"></div>
<div class="b" style="left:553px;top:561.5px;width:9.5px;height:9.5px;background:#139a90;border-radius:50%"></div>
<span class="t" style="left:566.00px;top:556.50px;font-size:10.8px;color:#2a2a2a;letter-spacing:-0.326px;">Concentration</span>
<svg class="b" style="left:632.5px;top:560.5px;" width="12" height="12" viewBox="0 0 12 12"><g fill="none" stroke="#333" stroke-width="1.05"><path d="M6 0.8V11.2M0.8 6H11.2"/><path d="M4.1 2.7L6 0.8L7.9 2.7M4.1 9.3L6 11.2L7.9 9.3M2.7 4.1L0.8 6L2.7 7.9M9.3 4.1L11.2 6L9.3 7.9" stroke-linejoin="miter"/></g></svg>
<div class="b" style="left:652px;top:554px;width:93px;height:25px;background:#fff;border:1px solid #e0e0e0;border-radius:2px;box-sizing:border-box"></div>
<div class="b" style="left:657px;top:561.5px;width:9.5px;height:9.5px;background:#47535f;border-radius:50%"></div>
<span class="t" style="left:670.00px;top:556.50px;font-size:10.8px;color:#2a2a2a;letter-spacing:-0.466px;">Temperature</span>
<svg class="b" style="left:729.0px;top:560.5px;" width="12" height="12" viewBox="0 0 12 12"><g fill="none" stroke="#333" stroke-width="1.05"><path d="M6 0.8V11.2M0.8 6H11.2"/><path d="M4.1 2.7L6 0.8L7.9 2.7M4.1 9.3L6 11.2L7.9 9.3M2.7 4.1L0.8 6L2.7 7.9M9.3 4.1L11.2 6L9.3 7.9" stroke-linejoin="miter"/></g></svg>
<svg class="b" style="left:0;top:0" width="1380" height="900" viewBox="0 0 1380 900"><path d="M527.3 471V547M527.3 587V662.4" stroke="#e3e3e3" stroke-width="1"/><path d="M592.5 471V547M592.5 587V662.4" stroke="#e3e3e3" stroke-width="1"/><path d="M657.7 471V547M657.7 587V662.4" stroke="#e3e3e3" stroke-width="1"/><path d="M722.9 471V547M722.9 587V662.4" stroke="#e3e3e3" stroke-width="1"/><path d="M788.1 471V547M788.1 587V662.4" stroke="#e3e3e3" stroke-width="1"/><path d="M853.3 471V547M853.3 587V662.4" stroke="#e3e3e3" stroke-width="1"/><path d="M918.5 471V547M918.5 587V662.4" stroke="#e3e3e3" stroke-width="1"/><path d="M983.7 471V547M983.7 587V662.4" stroke="#e3e3e3" stroke-width="1"/><path d="M1048.9 471V547M1048.9 587V662.4" stroke="#e3e3e3" stroke-width="1"/><path d="M1114.1 471V547M1114.1 587V662.4" stroke="#e3e3e3" stroke-width="1"/><path d="M1179.3 471V547M1179.3 587V662.4" stroke="#e3e3e3" stroke-width="1"/><path d="M1244.5 471V547M1244.5 587V662.4" stroke="#e3e3e3" stroke-width="1"/><path d="M1309.7 471V547M1309.7 587V662.4" stroke="#e3e3e3" stroke-width="1"/><path d="M474 532.4H1323" stroke="#e3e3e3" stroke-width="1"/><path d="M474 648.4H1323" stroke="#e3e3e3" stroke-width="1"/><path d="M474 517.9H1323" stroke="#e3e3e3" stroke-width="1"/><path d="M474 634.5H1323" stroke="#e3e3e3" stroke-width="1"/><path d="M474 503.3H1323" stroke="#e3e3e3" stroke-width="1"/><path d="M474 620.5H1323" stroke="#e3e3e3" stroke-width="1"/><path d="M474 488.7H1323" stroke="#e3e3e3" stroke-width="1"/><path d="M474 606.5H1323" stroke="#e3e3e3" stroke-width="1"/><path d="M474 474.1H1323" stroke="#e3e3e3" stroke-width="1"/><path d="M474 592.5H1323" stroke="#e3e3e3" stroke-width="1"/><path d="M474 471.3H1323M474 547H1323M474 587H1323M474 662.4H1323" stroke="#e3e3e3" stroke-width="1"/><path d="M474 504.7L503 546.6L504 547L510 547L548 513.7L549 513.5L597 513.5L598 512.5L626 472.4L627 471.5L679 546.6L680 547L686 547L724 513.7L725 513.5L773 513.5L774 512.5L802 472.4L803 471.5L855 546.6L856 547L862 547L900 518.4L901 518.2L949 518.2L950 517.3L978 482.8L979 482.1L1031 546.6L1032 547L1038 547L1076 517.1L1077 516.8L1125 516.8L1126 515.9L1154 479.8L1155 479L1207 546.6L1208 547L1214 547L1252 513.7L1253 513.5L1301 513.5L1302 512.5L1323 482.4" fill="none" stroke="#c4105f" stroke-width="1.15"/>
<path d="M474 484.2L476.4 484.2L477.2 483.4L478 484.3L480.4 484.1L482 483.4L482.8 481.5L484.4 481.3L485.2 480.8L486.8 481.7L487.6 481.2L490.8 482.4L492.4 480.2L493.2 478.5L495.6 479.4L497.2 479L498 478.5L498.8 478.8L499.6 479.7L500.4 478.5L501.2 478.8L502 478L502.8 547L523.6 547L524.4 546.9L526.8 545.5L527.6 546L528.4 545.9L530 543.8L531.6 542.6L532.4 543.2L533.2 542.4L534.8 542L535.6 540.9L537.2 540.3L541.2 537.3L543.6 533.5L545.2 533.5L546.8 532.5L547.6 531.2L549.2 530.1L550 530.2L550.8 529.7L552.4 530.3L553.2 529.4L554 529.4L554.8 529L556.4 526.1L558 525.5L560.4 522.9L562 523L562.8 521.9L563.6 522.2L564.4 521.6L566 519.3L566.8 519.4L568.4 518.9L569.2 519.1L570 518.4L570.8 518.6L571.6 517.9L573.2 518.5L574 518.5L574.8 518.2L575.6 519.4L576.4 518.2L578 517.6L578.8 516.6L581.2 516L583.6 514.5L584.4 514.7L585.2 515.5L586 515.3L586.8 515.9L588.4 515.8L589.2 516.9L590 516.7L590.8 516.9L592.4 517.8L594 516L597.2 516.6L598 515.3L598.8 515.1L599.6 513.7L600.4 514.5L601.2 514.6L602 513.1L602.8 512.4L603.6 512.8L604.4 510.5L606 508.7L606.8 509.8L607.6 508.4L609.2 507.3L610 507L610.8 507.4L611.6 507.3L614 503.8L616.4 501.7L617.2 500L618 499.8L618.8 500.5L619.6 499.7L620.4 499.5L622 499.8L622.8 498.6L625.2 497.7L626 496.3L627.6 495.6L629.2 495.9L630 494.3L630.8 494.3L632.4 492L634.8 490.1L635.6 489.1L636.4 489.1L637.2 489.9L638 489.9L638.8 488.8L639.6 489.5L641.2 489.2L642 488.4L642.8 488.9L643.6 487.9L644.4 488.5L645.2 488.3L646 488.9L646.8 488.5L647.6 488.6L648.4 489.3L649.2 488.7L650 488.9L650.8 488.1L651.6 489.3L652.4 487.8L653.2 487.6L654 486.3L654.8 485.8L657.2 486.2L658 485.6L658.8 485.7L659.6 486.5L663.6 484.7L664.4 486.1L665.2 485.6L666 484.4L666.8 484L669.2 484.9L670 483.4L670.8 483.7L673.2 482.8L674.8 484.5L676.4 483.9L677.2 485.2L678 484.7L678.8 547L699.6 547L700.4 546.9L703.6 544.9L704.4 545.4L706 544.9L708.4 541.6L710 542L712.4 538.8L714 538.3L714.8 537.1L716.4 536.6L718 533.7L718.8 533.6L719.6 534L720.4 533.7L721.2 534.8L722.8 531.5L723.6 530.7L725.2 530.7L726 530.2L729.2 525.2L730.8 523.7L731.6 525.1L732.4 525.3L733.2 524.5L734 524.5L735.6 523.1L736.4 522L738.8 520.2L740.4 518.1L741.2 518.1L743.6 516.5L745.2 516.5L748.4 514.3L749.2 514.3L750 515L750.8 514.7L751.6 515.8L753.2 513.6L754.8 514.4L755.6 515.5L757.2 515.1L758.8 513.9L759.6 513.8L761.2 512.3L762 512.5L762.8 512.1L764.4 513.8L765.2 514.3L766 512.8L767.6 513.5L769.2 513L770.8 511.3L773.2 512L774.8 511.7L775.6 511.2L778 508L778.8 507.6L779.6 506.6L780.4 506.7L782.8 502.8L783.6 502.6L784.4 503.1L785.2 501.5L786 501.4L786.8 501.7L788.4 503.1L790 500.7L790.8 500.3L791.6 498.4L793.2 497L795.6 497.2L796.4 496L800.4 492.5L801.2 493.7L803.6 490L804.4 489.5L806 489.7L806.8 488.3L807.6 488.2L809.2 486.3L810 486.3L811.6 484.3L812.4 484.2L813.2 485.2L816.4 484.4L817.2 483.8L818 484.1L818.8 483.9L819.6 483.1L822 482.4L823.6 481.2L824.4 481.1L826 483.1L826.8 483.2L827.6 482.9L829.2 483.9L830 483.5L833.2 483.7L834.8 482L836.4 482.1L837.2 481.4L840.4 481.3L841.2 479.8L843.6 477.8L844.4 477.9L845.2 479.3L846.8 478.2L847.6 479.2L848.4 479.4L849.2 478.4L850.8 477.3L851.6 477.9L854 477L854.8 547L875.6 547L876.4 546.9L877.2 546.4L878 546.8L878.8 546.2L879.6 546.9L883.6 544.1L885.2 542.3L886 542.5L887.6 539.9L888.4 539.5L889.2 539.7L890.8 537.4L891.6 538.3L893.2 537.2L894 535L894.8 534.7L895.6 535.1L897.2 532.9L898 533.7L899.6 532.7L901.2 530.7L902 530.8L903.6 529.5L904.4 530L905.2 530L907.6 525.5L909.2 524.6L910 525.2L910.8 523.9L912.4 524.3L913.2 523.4L914 523.4L914.8 521L916.4 521.7L917.2 521.3L918 520.2L918.8 520.3L920.4 517.9L921.2 518.6L922 517.7L925.2 516.5L926 516.8L926.8 516.4L927.6 516.8L928.4 515.9L930 515L931.6 515.3L933.2 516.3L934 515.9L934.8 517L935.6 515.7L936.4 515.3L937.2 516.4L939.6 513.9L940.4 514.3L941.2 514.2L942 515.5L943.6 514.2L946.8 513.4L948.4 515.2L949.2 515.4L950.8 512.1L951.6 511.7L952.4 512.5L953.2 511.6L954 511.6L954.8 508.8L955.6 508.2L957.2 509L960.4 508L962 505.6L962.8 505.6L964.4 504.3L965.2 505L966.8 503.6L967.6 503.7L969.2 502L970 501.7L970.8 500.8L974 496L976.4 495.3L978 492.1L978.8 492.6L980.4 490.8L982.8 490L983.6 489L984.4 488.9L985.2 489.3L986 488.9L986.8 489.4L987.6 488.6L988.4 488.5L990 487.3L990.8 487.2L992.4 488L993.2 489.5L994 489.2L994.8 489.9L995.6 489.2L996.4 489.2L997.2 488.1L998 487.7L998.8 488.4L1000.4 488.4L1001.2 487.3L1002 486.8L1002.8 486.8L1003.6 487.2L1004.4 487L1005.2 487.4L1006 486.3L1006.8 485.8L1007.6 486.2L1008.4 486.1L1009.2 485.3L1010 483.6L1010.8 484.6L1011.6 485.1L1012.4 484L1014.8 483L1015.6 483.7L1017.2 483.3L1018 483.8L1018.8 482.6L1019.6 483.1L1020.4 484.4L1021.2 484L1022 485.1L1022.8 485.1L1023.6 486.3L1025.2 484.8L1026 485.2L1026.8 483.6L1028.4 483L1029.2 481.9L1030 481.5L1030.8 547L1052.4 546.9L1054 545.4L1056.4 544.9L1058.8 543.1L1059.6 542.9L1061.2 543.6L1062.8 541.7L1063.6 542L1064.4 540.8L1065.2 540.9L1066 540.1L1067.6 540.3L1068.4 539.4L1070 536.3L1071.6 536.1L1072.4 536.5L1073.2 536.4L1074 535.2L1074.8 535.2L1075.6 533.3L1077.2 533.1L1078.8 530L1079.6 530.1L1080.4 529.2L1082 528.3L1083.6 528.3L1084.4 527.2L1085.2 527.3L1087.6 524.8L1090 524L1090.8 522.4L1091.6 522L1092.4 522.3L1093.2 521.5L1094 521.5L1094.8 520.2L1095.6 520.3L1096.4 519.1L1097.2 519.5L1098 519.3L1098.8 520.2L1099.6 519.7L1100.4 519.9L1102 518.2L1103.6 518L1104.4 518.3L1106 518.3L1106.8 517.9L1108.4 516.4L1110.8 515.9L1112.4 516.4L1113.2 517.4L1114 516.4L1114.8 516.8L1115.6 515.9L1117.2 515.1L1118.8 516.5L1122.8 516.7L1125.2 515.7L1126 513L1126.8 512.9L1128.4 511.5L1130 511L1130.8 510.1L1131.6 510.4L1134 508.7L1135.6 508.3L1136.4 506.7L1138 506L1138.8 506.2L1139.6 505.5L1140.4 505.3L1141.2 504L1142 504.2L1144.4 502.8L1146 502.8L1148.4 500.3L1149.2 498.9L1150.8 499.1L1151.6 497L1152.4 495.9L1154 494.8L1154.8 495.8L1156.4 496.2L1157.2 495.4L1158 493.7L1159.6 493.8L1160.4 493.3L1162 490.6L1162.8 490.1L1164.4 490.6L1166.8 490.8L1168.4 489.5L1169.2 490.1L1170 489.4L1170.8 489.6L1171.6 488.8L1173.2 489.6L1174.8 488.6L1175.6 489.5L1176.4 489.7L1177.2 489L1178 488.9L1180.4 486.5L1181.2 487L1182 486.9L1183.6 487.4L1185.2 487.2L1186 487.9L1186.8 488L1187.6 487.9L1189.2 486.3L1190 486.8L1191.6 486.9L1192.4 485.3L1195.6 484.9L1196.4 485.7L1197.2 484.8L1198 484.7L1198.8 486.1L1201.2 485.7L1202.8 486.5L1203.6 485.5L1206 484.9L1206.8 547L1227.6 547L1228.4 546.9L1230.8 545.2L1232.4 545.7L1233.2 546.6L1234 545.3L1234.8 545L1235.6 543.6L1237.2 542.1L1238 540.6L1238.8 541L1240.4 538.4L1241.2 538.1L1242 537.2L1242.8 537.8L1244.4 537.1L1246.8 534.1L1247.6 534.7L1248.4 534.7L1251.6 531.7L1252.4 531.3L1253.2 529.7L1254 530.4L1255.6 528.9L1256.4 528.9L1258 527.3L1259.6 527.3L1261.2 524.7L1262 524L1262.8 523.6L1263.6 524L1264.4 523.5L1265.2 522.4L1266 522.3L1266.8 521.5L1268.4 521.5L1269.2 519.4L1270 519.9L1271.6 519.1L1272.4 517.2L1273.2 517L1274.8 515.9L1275.6 515.7L1276.4 516L1278 515.4L1278.8 516.1L1279.6 515.2L1282 515.7L1282.8 515.2L1285.2 515L1286 514.5L1288.4 514.8L1289.2 514.4L1290.8 515.5L1293.2 515.4L1294 515.1L1294.8 514.2L1297.2 513.8L1298.8 512.9L1299.6 513.7L1300.4 513.1L1301.2 513.8L1303.6 511L1304.4 511.1L1305.2 510.7L1306.8 509.1L1308.4 508.6L1309.2 507.7L1310.8 508.4L1311.6 507.7L1312.4 508.5L1313.2 507.6L1314 505.6L1314.8 505L1315.6 504.5L1316.4 504.9L1317.2 504.6L1318.8 502.4L1319.6 502.5L1320.4 501.8L1321.2 502.3L1322.8 501.3" fill="none" stroke="#23486b" stroke-width="1.15"/>
<path d="M474 621.9L503 662L504 662.4L510 662.4L548 630.5L549 630.3L597 630.3L598 629.3L626 590.9L627 590L679 662L680 662.4L686 662.4L724 630.5L725 630.3L773 630.3L774 629.3L802 590.9L803 590L855 662L856 662.4L862 662.4L900 635L901 634.8L949 634.8L950 633.9L978 600.9L979 600.2L1031 662L1032 662.4L1038 662.4L1076 633.7L1077 633.5L1125 633.5L1126 632.6L1154 598L1155 597.3L1207 662L1208 662.4L1214 662.4L1252 630.5L1253 630.3L1301 630.3L1302 629.3L1323 600.5" fill="none" stroke="#47535f" stroke-width="1.15"/>
<path d="M474 602.2L476.4 602.2L477.2 601.5L478 602.3L480.4 602.2L482 601.4L482.8 599.6L484.4 599.4L485.2 598.9L486.8 599.8L487.6 599.3L490.8 600.5L492.4 598.4L493.2 596.8L495.6 597.6L498 596.8L498.8 597L499.6 597.8L500.4 596.7L501.2 597L502 596.2L502.8 662.4L523.6 662.4L524.4 662.3L526.8 661L527.6 661.4L528.4 661.3L530 659.3L531.6 658.2L532.4 658.8L533.2 658L534.8 657.6L535.6 656.6L537.2 655.9L541.2 653.1L543.6 649.5L545.2 649.5L546.8 648.5L547.6 647.2L549.2 646.2L550 646.3L550.8 645.8L552.4 646.4L553.2 645.6L554.8 645.2L556.4 642.4L558 641.8L560.4 639.3L562 639.4L562.8 638.3L563.6 638.6L564.4 638.1L566 635.9L566.8 636L568.4 635.5L569.2 635.6L570 635L570.8 635.1L571.6 634.5L573.2 635.1L574.8 634.8L575.6 635.9L576.4 634.8L578 634.2L578.8 633.2L581.2 632.7L583.6 631.2L584.4 631.5L585.2 632.2L586 632L586.8 632.6L588.4 632.5L589.2 633.6L590 633.4L590.8 633.6L592.4 634.4L594 632.6L597.2 633.3L598 632.1L598.8 631.9L599.6 630.5L600.4 631.2L601.2 631.4L602 629.9L602.8 629.3L603.6 629.7L604.4 627.4L606 625.7L606.8 626.7L607.6 625.4L609.2 624.4L610 624L610.8 624.5L611.6 624.4L614 621L616.4 619L617.2 617.3L618 617.1L618.8 617.8L619.6 617.1L620.4 616.9L622 617.2L622.8 616L625.2 615.2L626 613.8L627.6 613.2L629.2 613.4L630 611.9L630.8 611.9L632.4 609.6L634.8 607.9L635.6 606.9L636.4 606.9L637.2 607.7L638 607.7L638.8 606.6L639.6 607.3L641.2 607L642 606.2L642.8 606.7L643.6 605.7L644.4 606.4L645.2 606.2L646 606.7L646.8 606.3L647.6 606.5L648.4 607.1L649.2 606.5L650 606.7L650.8 605.9L651.6 607.1L652.4 605.7L653.2 605.5L654 604.2L654.8 603.7L657.2 604.1L658 603.6L658.8 603.6L659.6 604.4L663.6 602.7L664.4 604L665.2 603.5L666 602.4L666.8 602L669.2 602.8L670 601.5L670.8 601.7L673.2 600.8L674.8 602.5L676.4 601.9L677.2 603.1L678 602.7L678.8 662.4L699.6 662.4L700.4 662.3L703.6 660.3L704.4 660.9L706 660.4L708.4 657.2L710 657.6L712.4 654.5L714 654L714.8 652.9L716.4 652.5L718 649.6L718.8 649.6L719.6 649.9L720.4 649.6L721.2 650.7L722.8 647.5L723.6 646.8L725.2 646.8L726 646.3L729.2 641.5L730.8 640.1L731.6 641.4L732.4 641.6L733.2 640.9L734 640.8L735.6 639.5L736.4 638.4L738.8 636.7L740.4 634.7L741.2 634.7L743.6 633.2L745.2 633.1L748.4 631.1L749.2 631.1L750 631.8L750.8 631.4L751.6 632.5L753.2 630.3L754.8 631.1L755.6 632.2L757.2 631.8L758.8 630.7L759.6 630.6L761.2 629.1L762 629.4L762.8 628.9L764.4 630.6L765.2 631L766 629.6L767.6 630.3L769.2 629.8L770.8 628.2L773.2 628.8L774.8 628.6L775.6 628.1L778 625.1L778.8 624.6L779.6 623.7L780.4 623.8L782.8 620L783.6 619.8L784.4 620.3L785.2 618.8L786 618.7L786.8 619L788.4 620.3L790 618L790.8 617.6L791.6 615.9L793.2 614.5L795.6 614.7L796.4 613.6L800.4 610.2L801.2 611.3L803.6 607.8L804.4 607.3L806 607.4L806.8 606.1L807.6 606L809.2 604.2L810 604.2L811.6 602.3L812.4 602.2L813.2 603.1L816.4 602.4L817.2 601.9L818 602.1L818.8 601.9L819.6 601.1L822 600.5L823.6 599.4L824.4 599.2L826 601.1L826.8 601.3L827.6 601L829.2 601.9L830 601.5L833.2 601.7L834.8 600.1L836.4 600.2L837.2 599.5L840.4 599.4L841.2 598L843.6 596.1L844.4 596.1L845.2 597.5L846.8 596.5L847.6 597.4L848.4 597.7L849.2 596.6L850.8 595.6L851.6 596.1L854 595.3L854.8 662.4L875.6 662.4L876.4 662.3L877.2 661.8L878 662.2L878.8 661.6L879.6 662.3L883.6 659.7L885.2 657.9L886 658.1L887.6 655.6L888.4 655.2L889.2 655.4L890.8 653.2L891.6 654L893.2 653L894 650.9L894.8 650.6L895.6 651L897.2 648.9L898 649.6L899.6 648.7L901.2 646.8L902 646.8L903.6 645.6L904.4 646.1L905.2 646.1L907.6 641.8L909.2 640.9L910 641.5L910.8 640.2L912.4 640.6L913.2 639.8L914 639.8L914.8 637.5L916.4 638.2L917.2 637.8L918 636.7L918.8 636.8L920.4 634.5L921.2 635.2L922 634.3L925.2 633.1L926 633.4L926.8 633.1L927.6 633.4L928.4 632.6L930 631.8L931.6 632L933.2 633L934 632.6L934.8 633.7L935.6 632.4L936.4 632L937.2 633.1L939.6 630.7L940.4 631.1L941.2 631L942 632.2L943.6 631L946.8 630.2L948.4 631.9L949.2 632.1L950.8 628.9L951.6 628.6L952.4 629.3L953.2 628.4L954 628.4L954.8 625.8L955.6 625.2L957.2 625.9L960.4 625L962 622.7L962.8 622.7L964.4 621.4L965.2 622.2L966.8 620.8L967.6 620.9L969.2 619.2L970 619L970.8 618.2L974 613.5L976.4 612.8L978 609.8L978.8 610.2L980.4 608.5L982.8 607.8L983.6 606.8L984.4 606.7L985.2 607.1L986 606.7L986.8 607.2L987.6 606.4L988.4 606.4L990 605.1L990.8 605.1L992.4 605.8L993.2 607.3L994 607L994.8 607.7L995.6 607L996.4 607L997.2 606L998 605.6L998.8 606.3L1000.4 606.2L1001.2 605.2L1002 604.7L1002.8 604.7L1003.6 605L1004.4 604.9L1005.2 605.3L1006.8 603.7L1007.6 604.1L1008.4 604.1L1009.2 603.3L1010 601.6L1010.8 602.6L1011.6 603.1L1012.4 602L1014.8 601.1L1015.6 601.7L1017.2 601.4L1018 601.8L1018.8 600.6L1019.6 601.2L1020.4 602.4L1021.2 602.1L1022 603.1L1022.8 603L1023.6 604.2L1025.2 602.8L1026 603.2L1026.8 601.7L1028.4 601.1L1029.2 600L1030 599.6L1030.8 662.4L1052.4 662.3L1054 660.9L1056.4 660.4L1058.8 658.7L1059.6 658.5L1061.2 659.1L1062.8 657.3L1063.6 657.6L1064.4 656.5L1065.2 656.5L1066 655.8L1067.6 656L1068.4 655.1L1070 652.2L1071.6 652L1073.2 652.2L1074 651.1L1074.8 651.1L1075.6 649.2L1077.2 649.1L1078.8 646.1L1079.6 646.2L1080.4 645.4L1082 644.5L1083.6 644.4L1084.4 643.4L1085.2 643.5L1087.6 641.2L1090 640.3L1090.8 638.8L1091.6 638.4L1092.4 638.7L1093.2 638L1094 637.9L1094.8 636.7L1095.6 636.8L1096.4 635.6L1097.2 636.1L1098 635.9L1098.8 636.7L1099.6 636.2L1100.4 636.4L1102 634.8L1103.6 634.6L1104.4 634.9L1106 634.9L1106.8 634.5L1108.4 633.1L1110.8 632.6L1112.4 633.1L1113.2 634L1114 633L1114.8 633.4L1115.6 632.6L1117.2 631.9L1118.8 633.2L1122.8 633.4L1125.2 632.4L1126 629.8L1126.8 629.8L1128.4 628.4L1130 627.9L1130.8 627L1131.6 627.3L1134 625.7L1135.6 625.3L1136.4 623.8L1138 623.1L1138.8 623.3L1139.6 622.6L1140.4 622.4L1141.2 621.2L1142 621.3L1144.4 620.1L1146 620.1L1148.4 617.6L1149.2 616.3L1150.8 616.5L1151.6 614.4L1152.4 613.4L1154 612.4L1154.8 613.3L1156.4 613.7L1157.2 613L1158 611.3L1159.6 611.4L1160.4 610.9L1162 608.3L1162.8 607.8L1164.4 608.4L1166.8 608.5L1168.4 607.3L1169.2 607.9L1170 607.2L1170.8 607.4L1171.6 606.6L1173.2 607.4L1174.8 606.4L1175.6 607.3L1176.4 607.4L1177.2 606.8L1178 606.7L1180.4 604.4L1181.2 604.9L1182 604.8L1183.6 605.3L1185.2 605.1L1186 605.8L1186.8 605.8L1187.6 605.7L1189.2 604.3L1190 604.7L1191.6 604.8L1192.4 603.3L1195.6 602.9L1196.4 603.7L1197.2 602.8L1198 602.7L1198.8 604L1201.2 603.7L1202.8 604.4L1203.6 603.4L1206 602.8L1206.8 662.4L1227.6 662.4L1228.4 662.3L1230.8 660.7L1232.4 661.2L1233.2 662L1234 660.8L1234.8 660.5L1235.6 659.1L1237.2 657.7L1238 656.3L1238.8 656.6L1240.4 654.2L1242 653L1242.8 653.6L1244.4 652.9L1246.8 650L1247.6 650.7L1248.4 650.7L1251.6 647.7L1252.4 647.3L1253.2 645.9L1254 646.5L1255.6 645L1256.4 645L1258 643.6L1259.6 643.6L1261.2 641.1L1262 640.3L1262.8 639.9L1263.6 640.4L1264.4 639.9L1265.2 638.9L1266 638.7L1266.8 637.9L1268.4 637.9L1269.2 635.9L1270 636.5L1271.6 635.6L1272.4 633.8L1273.2 633.7L1274.8 632.5L1275.6 632.4L1276.4 632.7L1278 632.1L1278.8 632.8L1279.6 631.9L1282 632.4L1282.8 631.9L1285.2 631.8L1286 631.3L1288.4 631.5L1289.2 631.1L1290.8 632.2L1293.2 632.1L1294 631.8L1294.8 630.9L1297.2 630.5L1298.8 629.7L1299.6 630.5L1300.4 629.9L1301.2 630.6L1303.6 627.9L1305.2 627.6L1306.8 626.1L1308.4 625.6L1309.2 624.7L1310.8 625.4L1311.6 624.7L1312.4 625.5L1313.2 624.6L1314 622.7L1314.8 622.1L1315.6 621.6L1316.4 622L1317.2 621.7L1318.8 619.6L1319.6 619.7L1320.4 619.1L1321.2 619.5L1322.8 618.6" fill="none" stroke="#139a90" stroke-width="1.15"/>
<path d="M474 614.7L475 614.2L476 613.1L479 611.6L480 611.9L482 610.9L483 610.9L484 609.8L486 610.3L487 610.2L489 609.2L490 609.9L491 610.1L492 609.2L495 608.7L496 608L500 609.4L501 609.2L503 609.7L504 607.4L505 607.1L506 607.4L507 606.8L509 607.3L511 607.3L512 608.1L513 608.2L514 609.5L519 611.7L520 613.3L521 613.9L522 614L523 614.9L524 614.9L526 616.3L528 619.3L530 620.4L531 622L534 629.8L540 648.2L544 655.5L546 658.1L548 659.6L550 661.7L552 662.4L576 662.4L577 662.1L579 660.2L581 656.4L583 653.9L587 647.2L591 642.4L592 641.7L595 636.9L596 635.9L599 635.8L600 635.2L602 635L604 635.9L605 635.4L606 636L608 635.3L610 635.6L611 636.4L612 635.5L613 635.8L615 634.2L616 634.2L618 633.4L620 631.3L622 630L623 629.9L629 625.1L632 623.6L636 621L638 620.3L639 619.4L640 619.3L643 617.2L644 616L646 614.7L648 614.5L650 612.8L654 611.3L656 609.9L657 610L658 609.3L659 609.6L661 609L662 609.6L666 608.3L668 608.2L669 607.1L670 606.6L673 606.4L674 606.9L675 606.6L676 607.1L678 606.6L679 606.7L680 604.8L683 605.6L685 605.4L688 606.1L692 608.7L694 609.3L695 610.3L696 610.5L699 613.5L700 614.1L701 614.1L702 614.9L703 616.6L706 619.3L707 620.6L708 622.7L710 627.9L717 650.1L722 658.1L725 660.8L727 662.1L728 662.4L752 662.4L753 662.1L755 659.2L757 657L762 648.2L766 642.6L769 640L772 636.1L774 634.1L778 634.1L779 635L781 635.3L782 634.7L786 634.5L787 633.8L788 633.7L789 634.5L790 633.4L791 633.4L793 630.5L794 630.7L795 629.8L797 629.2L798 628.1L801 627L804 625.2L806 622.9L807 622.8L810 621.1L813 618.5L814 618.3L817 616.4L818 615.1L819 614.5L820 615L821 614L823 613.3L827 611.1L830 608.7L837 607.2L838 607.4L840 606.5L844 605.6L847 604.5L848 604.7L849 604.4L850 604.9L851 604.4L852 604.7L855 603.6L856 605.9L857 606.4L858 606.5L859 607.2L860 606.7L861 607.5L862 607.2L864 608.4L865 608.7L867 610.2L868 611.4L869 611L870 611.9L872 612.8L874 614.5L875 614.8L879 618.1L881 619.2L882 620.4L883 621.8L886 628.7L892 647.3L893 649.5L898 657.7L902 661.7L904 662.4L928 662.4L929 662.1L934 654.4L936 652.1L938 648.3L940 646.2L941 645.8L942 644L944 641.7L945 640.1L946 639.2L947 637.1L949 634.8L951 635.3L952 636.1L953 635.9L954 636.6L957 635.9L958 635L959 635L961 635.5L964 635.1L966 633.8L968 633.4L974 629.6L975 629.5L977 627.5L978 627.4L981 624.6L982 624.4L985 621.1L987 621L990 620.2L991 618.9L992 619L994 618.1L996 616L998 615.5L999 614.6L1000 614.3L1001 613.1L1002 612.9L1004 611L1005 611.1L1007 610.2L1009 610.1L1010 609.6L1011 608.6L1013 609.5L1015 609.1L1016 608.5L1018 608.3L1019 607.4L1020 607.6L1021 606.9L1022 607.4L1023 606.9L1025 606.9L1028 606.1L1030 607.2L1031 607.1L1032 605.5L1033 606.5L1034 606.4L1035 605.8L1038 606.6L1040 607.7L1041 607.5L1045 611.1L1046 610.7L1048 612L1049 613.2L1051 613.9L1053 614.1L1056 618L1058 620L1059 621.3L1061 625.9L1064 634.6L1067 644.7L1069 649.6L1073 656.3L1075 658.3L1077 659.6L1079 662.1L1080 662.4L1104 662.4L1105 662.1L1108 657.6L1109 656.9L1119 641.1L1122 637.8L1123 635.7L1125 633.8L1126 634.5L1128 634.7L1129 635.5L1130 635.5L1132 636.6L1133 636L1137 635L1141 634.5L1143 633L1145 632.1L1146 631.3L1147 631.5L1149 630.2L1150 629L1151 628.9L1153 627.4L1154 627.3L1155 626.5L1156 626.2L1157 624.9L1158 624.2L1161 623.2L1162 622.3L1163 620.8L1164 620.7L1167 618.4L1168 617.2L1169 616.8L1172 614.7L1173 614.7L1174 614.1L1175 614.1L1177 611.9L1179 612L1181 610.3L1183 610.1L1184 609.3L1188 608.3L1189 607.6L1191 608.3L1194 607.4L1195 607.5L1196 606.5L1198 606.3L1200 605.6L1204 606L1207 605.3L1208 608.1L1209 607.7L1211 608.4L1213 608.1L1215 609L1216 608.9L1217 610.1L1218 610.4L1220 612.1L1221 612.3L1223 613.8L1224 613.7L1228 615.7L1234 620.5L1238 629.6L1244 648.6L1245 649.9L1248 655.4L1250 658.1L1254 660.9L1255 662.1L1256 662.4L1280 662.4L1281 662.1L1283 658.6L1284 658.3L1285 656.8L1287 653L1289 651.1L1291 647.7L1294 644.5L1296 640.9L1298 639.2L1300 636.6L1301 636L1304 636.3L1305 636L1308 636.5L1311 636.3L1312 635.4L1313 635.3L1314 635.7L1316 635.3L1317 635.5L1320 634.2L1323 632.4" fill="none" stroke="#fb5012" stroke-width="1.15"/>
<path d="M474 512.9L496 547L503 546.8L541 510.9L589 510.9L590 510.6L615 472.1L616 471.2L623 471.2L671 545.8L672 547L678 547L679 546.8L717 513.9L765 513.9L766 513.6L795 472.5L796 473.1L847 545.9L848 547L854 547L855 546.8L893 512.6L941 512.6L942 512.3L970 471.2L972 471.2L973 471.8L1023 545.8L1024 547L1030 547L1031 546.8L1069 515.5L1117 515.5L1118 515.2L1147 476.1L1148 476.7L1199 545.9L1200 547L1206 547L1207 546.8L1245 515.4L1293 515.4L1294 515.1L1323 476" fill="none" stroke="#c4105f" stroke-width="1.15" stroke-dasharray="10 8"/>
<path d="M474 487.7L475.6 486.4L477.2 487.3L478 487.1L479.6 485.6L481.2 486.9L484.4 484L486 484.4L486.8 482.9L489.2 484.7L490.8 484.2L492.4 484.2L493.2 547L514 547L515.6 546.4L518 543.7L518.8 543.3L519.6 544.1L520.4 543L521.2 543.4L522 542.9L522.8 543.1L525.2 541.1L526 538.4L526.8 538.2L527.6 537.3L528.4 537.9L529.2 537.6L530 536.7L532.4 535.1L533.2 535.3L534 534.4L534.8 534.4L535.6 532.6L536.4 532.6L538.8 530.3L539.6 530.4L542.8 527.3L543.6 527L544.4 527.2L546 525.7L546.8 524.4L547.6 524.5L551.6 522.1L553.2 522.3L554 522L557.2 517.8L558.8 516.5L559.6 516.3L561.2 514.7L562.8 516L563.6 514.9L564.4 515L566 514.4L566.8 515.4L568.4 513.3L570.8 513.9L571.6 514.8L572.4 514.9L574.8 513.9L575.6 514.1L576.4 513.4L577.2 514.1L578.8 513.2L579.6 513.6L580.4 514.8L581.2 515.2L582.8 514.4L583.6 513.3L584.4 514L586 513.5L586.8 513.5L587.6 515L589.2 511.7L590 510.7L590.8 511.1L591.6 510.9L592.4 510.3L593.2 508.3L594.8 507.5L595.6 506.4L596.4 506.3L597.2 505L598.8 505.5L600.4 503.6L602 502.7L602.8 503.6L605.2 503.1L607.6 500.6L610 499.1L611.6 497.4L613.2 497L614 497.3L615.6 494.3L617.2 494.1L618 494.4L619.6 493L620.4 491.1L621.2 490.7L622 490.9L622.8 491.9L623.6 490.3L624.4 489.7L625.2 490.2L626 489.5L626.8 490.3L627.6 487.7L628.4 487.1L629.2 486.9L630 487.2L630.8 488.6L631.6 488.4L632.4 489.2L633.2 488.4L634 489.4L634.8 489.5L636.4 486.9L638 488.3L639.6 486.6L642.8 487.8L643.6 487.7L646 484.4L647.6 484.7L648.4 485.3L649.2 485.3L650.8 486.7L652.4 484.5L654 483.1L657.2 483.7L659.6 485.5L661.2 484.4L662 484.3L662.8 483.1L664.4 482.3L665.2 481.5L666.8 483.2L667.6 482.4L668.4 482.7L669.2 547L690.8 546.9L691.6 546.3L692.4 545L694.8 542.6L695.6 543.7L696.4 542.7L698 542.5L698.8 542.1L701.2 538.8L702 539.5L702.8 539.2L703.6 540L705.2 538L706 537.7L707.6 535.9L708.4 534.7L710.8 534.3L712.4 531.3L715.6 529.4L717.2 528.8L718 529.1L718.8 528.8L719.6 527L720.4 526.2L723.6 524.2L724.4 524.1L726 522.7L729.2 522.3L730 520.9L730.8 521.7L733.2 519.8L734.8 517.4L736.4 516.2L738 516.1L738.8 515.3L739.6 515.5L742.8 517.2L743.6 515.9L744.4 515.3L745.2 515.2L746 514.1L746.8 514.4L748.4 513.3L750 515.1L750.8 515.3L752.4 513.3L753.2 514L754 513.1L757.2 513.5L758 514.4L759.6 514.8L760.4 513.9L762 510.5L762.8 510.9L763.6 512.1L765.2 511.7L766 509.8L766.8 509L767.6 509.1L769.2 507.2L770 507.9L770.8 507.6L774.8 504.5L776.4 504.2L777.2 502.5L778.8 501L779.6 501.5L780.4 501L781.2 499.8L782 500.1L782.8 498.7L783.6 498.4L786 496.5L786.8 495.2L787.6 495.1L788.4 493.6L790 494L790.8 493L791.6 493.1L792.4 492.7L794 490.3L794.8 491L797.2 487.3L799.6 487L800.4 487.2L802.8 486.2L803.6 485.2L804.4 485.3L805.2 486.1L806 485.1L806.8 485.7L809.2 485.4L810 485.7L810.8 485.5L811.6 483.7L813.2 484L814 483.2L816.4 481.8L817.2 483.2L818 483.6L819.6 482.8L820.4 481.8L821.2 481.6L823.6 481.8L825.2 481.1L827.6 482.1L829.2 480.3L831.6 479L832.4 479.2L833.2 478.9L834 479.7L835.6 480.2L836.4 479.6L838 479.8L838.8 479.4L839.6 478.4L841.2 479.4L842 478.7L842.8 479.3L843.6 478.8L844.4 479L845.2 547L866 547L866.8 546.9L868.4 545.9L869.2 546.4L870 545.2L871.6 544.7L872.4 542.7L873.2 541.8L874 539.3L876.4 538.9L877.2 537.7L878 537.6L879.6 536.6L880.4 536.9L881.2 536.5L882.8 536.6L884.4 534.5L885.2 534L886 534.1L886.8 534.7L888.4 533L889.2 533.3L890 532.5L890.8 532.6L894.8 528.2L895.6 528.3L898 526.8L899.6 524.8L900.4 523.3L901.2 524.5L902.8 523L903.6 521L904.4 520.1L905.2 520.8L906 520L906.8 519.9L907.6 518.7L908.4 518.9L911.6 517.1L912.4 517.6L914 515.9L914.8 515.8L915.6 516.3L917.2 515.3L918.8 515.2L919.6 514.2L920.4 514.9L921.2 515.1L922 516.1L924.4 516.3L925.2 516.2L926 514.6L927.6 514.3L928.4 512.8L929.2 512.9L930 514L930.8 513.5L931.6 514L932.4 512.7L934.8 514.4L935.6 513.9L936.4 514.2L937.2 513.8L938.8 513.7L940.4 511.5L941.2 510.9L942.8 511L943.6 510.1L944.4 508L948.4 507.6L949.2 506.9L950 505.3L950.8 504.7L951.6 504.4L952.4 504.8L954 503.1L955.6 503L958 499.7L961.2 497.4L962 495.5L962.8 495.9L963.6 495.7L964.4 494.4L965.2 494.2L966 492.9L967.6 492.2L968.4 492.1L969.2 492.5L970 492.4L970.8 490.3L974.8 486.4L976.4 486.2L977.2 485.2L978 485.4L978.8 486.2L980.4 486.3L981.2 485.7L982.8 486.4L983.6 486.3L984.4 485L987.6 484.3L989.2 482.8L990 484L990.8 483L992.4 483.3L993.2 481.8L994 482.1L994.8 481.1L995.6 480.8L996.4 481.8L998 481.3L998.8 481.5L999.6 483L1001.2 482.9L1002 483.3L1002.8 481.8L1005.2 481.9L1006.8 482.4L1008.4 481.5L1010 481.3L1010.8 481.9L1011.6 481.2L1012.4 481.4L1013.2 480.9L1014.8 481.1L1015.6 480.6L1016.4 481.1L1017.2 479.1L1018.8 479.1L1019.6 479.4L1020.4 478.2L1021.2 547L1042.8 546.9L1043.6 546.3L1044.4 545L1045.2 544.4L1046 544.9L1046.8 544.7L1047.6 543.7L1050 543.6L1050.8 543.3L1053.2 541.2L1054.8 537.2L1055.6 537.7L1058 536.4L1058.8 535.3L1062 534.3L1063.6 532.1L1064.4 532.6L1066 532.2L1068.4 529.4L1069.2 529L1070 529.7L1072.4 527.2L1073.2 527.5L1074 526.8L1075.6 526.3L1077.2 524.5L1078 524.4L1079.6 525.4L1080.4 524.7L1081.2 523L1082 522.2L1082.8 522.8L1083.6 522.3L1086 517.9L1087.6 516.7L1090.8 517.3L1092.4 516.9L1093.2 516.5L1094 515.4L1095.6 514.7L1096.4 515L1097.2 515.9L1098.8 515.3L1099.6 515.8L1100.4 514.8L1101.2 514.9L1102 514.6L1102.8 514.8L1103.6 515.4L1104.4 513.9L1105.2 514.6L1106 513.9L1106.8 514.2L1107.6 513.9L1109.2 514.4L1110.8 512.4L1111.6 513.1L1112.4 513L1113.2 512.4L1114 512.9L1114.8 512.4L1115.6 512.9L1118 510.2L1118.8 509.7L1119.6 510.1L1120.4 509.2L1121.2 509.5L1122.8 507.1L1123.6 506.4L1124.4 506.5L1125.2 505.4L1126 505L1126.8 505.4L1127.6 505.2L1128.4 503.7L1130 503L1130.8 502.8L1131.6 503.3L1134.8 500.7L1135.6 501.4L1138.8 496.3L1140.4 496.3L1141.2 495.6L1142 494.1L1142.8 494.9L1144.4 494.4L1146 492L1146.8 491.8L1147.6 492.1L1149.2 491.1L1150 491.4L1150.8 490.1L1151.6 489.8L1152.4 488.7L1153.2 488.9L1154 487.7L1154.8 488.5L1155.6 487.5L1156.4 488.5L1157.2 487.2L1158 487.3L1158.8 488.1L1160.4 487.3L1162 487.6L1163.6 486.8L1164.4 488.4L1165.2 488.1L1167.6 485.6L1168.4 485.9L1169.2 484.1L1170.8 483.6L1172.4 482.7L1174 483.4L1174.8 482.9L1175.6 482.7L1176.4 484L1177.2 484.6L1180.4 482.9L1181.2 482.7L1182 481.7L1183.6 482.4L1186 481.2L1186.8 480.4L1187.6 480.9L1188.4 480.3L1189.2 480.2L1190 481L1190.8 481.1L1191.6 479.8L1192.4 479.5L1193.2 480L1194 481.6L1195.6 481.9L1196.4 481.5L1197.2 547L1218.8 546.9L1219.6 546.3L1220.4 544.4L1221.2 543.6L1222 543.2L1223.6 543.8L1225.2 543.1L1226 540.6L1227.6 540.6L1228.4 539.4L1229.2 539L1230 539.4L1230.8 538L1231.6 537.8L1232.4 538.1L1234 536.4L1234.8 536.1L1236.4 534.1L1237.2 534.3L1238.8 535.7L1239.6 534.7L1242.8 528.8L1243.6 528.6L1244.4 527.7L1245.2 528.4L1246.8 526.9L1248.4 526.5L1249.2 526.7L1250.8 524.5L1251.6 524.3L1252.4 523.5L1253.2 523.5L1254 522.8L1254.8 522.9L1257.2 520.8L1258.8 520.7L1259.6 520.1L1261.2 517.2L1262 517L1264.4 514.7L1265.2 515.6L1266 515.3L1266.8 515.8L1267.6 514.9L1269.2 514.1L1270 515.7L1271.6 514.5L1272.4 515.2L1273.2 514.4L1274 514.2L1274.8 514.3L1276.4 515L1277.2 515L1278 512.8L1279.6 512.7L1282.8 514.1L1283.6 513.2L1284.4 513.3L1285.2 512.6L1286 513.2L1286.8 512.4L1287.6 512.4L1288.4 511.9L1289.2 511.9L1290 512.5L1290.8 511.5L1291.6 511.8L1292.4 511.4L1293.2 511.4L1296.4 508.6L1298 508.7L1300.4 505.5L1301.2 505.7L1304.4 502.6L1306 501.7L1306.8 500.7L1307.6 500.6L1308.4 501L1310 499.6L1310.8 500.2L1311.6 499.7L1312.4 498.5L1314 497.1L1314.8 497.3L1316.4 494.2L1317.2 493.9L1318.8 494.1L1319.6 492.8L1320.4 492.2L1321.2 492.1L1322.8 489.8" fill="none" stroke="#23486b" stroke-width="1.15" stroke-dasharray="10 8"/>
<path d="M474 629.7L496 662.4L503 662.2L541 627.8L589 627.8L590 627.5L617 587.7L618 586.7L621 586.8L671 661.2L672 662.4L678 662.4L679 662.2L717 630.6L765 630.6L766 630.4L795 591L796 591.5L847 661.3L848 662.4L854 662.4L855 662.2L893 629.4L941 629.4L942 629.1L971 588.3L972 588.9L1023 661.3L1024 662.4L1030 662.4L1031 662.2L1069 632.2L1117 632.2L1118 631.9L1147 594.4L1148 595L1199 661.4L1200 662.4L1206 662.4L1207 662.2L1245 632.1L1293 632.1L1294 631.9L1323 594.3" fill="none" stroke="#47535f" stroke-width="1.15" stroke-dasharray="10 8"/>
<path d="M474 605.6L475.6 604.3L477.2 605.2L478 604.9L479.6 603.6L481.2 604.8L484.4 602L486 602.4L486.8 600.9L489.2 602.7L492.4 602.2L493.2 662.4L514 662.4L515.6 661.8L518 659.2L518.8 658.8L519.6 659.6L520.4 658.6L521.2 659L522 658.5L522.8 658.7L525.2 656.8L526 654.2L526.8 653.9L527.6 653.1L528.4 653.7L529.2 653.4L530 652.5L532.4 651L533.2 651.2L534 650.3L534.8 650.3L535.6 648.6L536.4 648.6L538.8 646.4L539.6 646.5L542.8 643.5L543.6 643.2L544.4 643.4L546 642L546.8 640.7L547.6 640.8L551.6 638.5L553.2 638.7L554 638.4L557.2 634.4L558.8 633.2L559.6 633L561.2 631.4L562.8 632.7L563.6 631.6L564.4 631.7L566 631.2L566.8 632.2L568.4 630.1L570.8 630.7L571.6 631.5L572.4 631.7L574.8 630.7L575.6 630.8L576.4 630.2L577.2 630.9L578.8 630L579.6 630.4L580.4 631.6L581.2 632L582.8 631.1L583.6 630.1L584.4 630.8L586 630.2L586.8 630.3L587.6 631.7L589.2 628.5L590 627.6L590.8 628L591.6 627.8L592.4 627.2L593.2 625.3L594.8 624.6L595.6 623.5L596.4 623.4L597.2 622.1L598.8 622.6L600.4 620.8L602 619.9L602.8 620.8L605.2 620.3L607.6 617.9L610 616.5L611.6 614.8L613.2 614.4L614 614.8L615.6 611.9L617.2 611.7L618 612L619.6 610.6L620.4 608.8L621.2 608.4L622 608.6L622.8 609.6L623.6 608.1L624.4 607.5L625.2 607.9L626 607.3L626.8 608L627.6 605.6L628.4 605L629.2 604.8L630 605L630.8 606.4L631.6 606.2L632.4 607L633.2 606.2L634 607.2L634.8 607.3L636.4 604.8L638 606.1L639.6 604.5L642.8 605.6L643.6 605.6L646 602.4L647.6 602.7L648.4 603.3L649.2 603.2L650.8 604.6L652.4 602.5L654 601.1L657.2 601.7L659.6 603.5L661.2 602.4L662 602.3L662.8 601.1L664.4 600.4L665.2 599.6L666.8 601.3L667.6 600.5L668.4 600.7L669.2 662.4L690.8 662.3L691.6 661.8L692.4 660.5L694.8 658.2L695.6 659.2L696.4 658.3L698.8 657.7L701.2 654.5L702 655.2L702.8 655L703.6 655.7L705.2 653.7L706 653.5L707.6 651.8L708.4 650.6L710.8 650.3L712.4 647.4L715.6 645.5L717.2 645L718 645.2L718.8 644.9L719.6 643.3L720.4 642.5L723.6 640.5L724.4 640.4L726 639.1L729.2 638.8L730 637.4L730.8 638.1L733.2 636.4L734.8 634L736.4 632.8L738 632.8L738.8 632L742.8 633.8L743.6 632.6L744.4 632.1L745.2 632L746 630.9L746.8 631.2L748.4 630.1L750 631.8L750.8 632L752.4 630.1L753.2 630.7L754 629.9L757.2 630.3L758 631.1L759.6 631.6L760.4 630.7L762 627.4L762.8 627.8L763.6 628.9L765.2 628.6L766 626.7L766.8 626L767.6 626L769.2 624.3L770 624.9L770.8 624.6L774.8 621.7L776.4 621.3L777.2 619.7L778.8 618.3L779.6 618.8L780.4 618.3L781.2 617.2L782 617.4L782.8 616.1L783.6 615.8L786 614L786.8 612.7L787.6 612.6L788.4 611.3L790 611.6L790.8 610.6L791.6 610.8L792.4 610.4L794 608L794.8 608.7L797.2 605.1L799.6 604.9L800.4 605.1L802.8 604.1L803.6 603.2L804.4 603.3L805.2 604L806 603.1L806.8 603.6L809.2 603.3L810 603.6L810.8 603.4L811.6 601.8L813.2 602L814 601.2L816.4 599.9L817.2 601.3L818 601.6L821.2 599.7L823.6 599.9L825.2 599.3L827.6 600.2L829.2 598.4L831.6 597.2L832.4 597.4L833.2 597.1L834 597.9L835.6 598.4L836.4 597.8L838 598L839.6 596.7L841.2 597.7L842 597L842.8 597.5L843.6 597L844.4 597.2L845.2 662.4L866 662.4L866.8 662.3L868.4 661.3L869.2 661.8L870 660.7L871.6 660.2L872.4 658.3L873.2 657.4L874 655L876.4 654.7L877.2 653.5L878 653.4L879.6 652.4L880.4 652.7L881.2 652.3L882.8 652.5L884.4 650.4L885.2 649.9L886 650L886.8 650.7L888.4 649L889.2 649.3L890 648.5L890.8 648.6L894.8 644.4L895.6 644.5L898 643L899.6 641.1L900.4 639.6L901.2 640.8L902.8 639.4L903.6 637.4L904.4 636.6L905.2 637.3L906 636.6L906.8 636.4L907.6 635.3L908.4 635.5L911.6 633.8L912.4 634.2L914 632.6L914.8 632.5L915.6 632.9L917.2 632L918.8 631.9L919.6 630.9L920.4 631.6L921.2 631.8L922 632.8L924.4 632.9L925.2 632.9L926 631.3L927.6 631.1L928.4 629.6L929.2 629.7L930 630.8L930.8 630.3L931.6 630.7L932.4 629.5L934.8 631.1L935.6 630.7L936.4 630.9L937.2 630.6L938.8 630.5L940.4 628.4L941.2 627.8L942.8 627.9L943.6 627L944.4 625L948.4 624.7L949.2 624L950 622.4L950.8 621.8L951.6 621.6L952.4 621.9L954 620.3L955.6 620.3L958 617L961.2 614.8L962 613.1L962.8 613.5L963.6 613.2L964.4 612L965.2 611.8L966 610.5L967.6 609.9L968.4 609.7L969.2 610.1L970 610.1L970.8 608.1L974.8 604.3L976.4 604.1L977.2 603.2L978 603.3L978.8 604.1L980.4 604.2L981.2 603.6L982.8 604.3L983.6 604.2L984.4 603L987.6 602.3L989.2 600.9L990 602L990.8 601.1L992.4 601.4L993.2 599.9L994 600.2L994.8 599.2L995.6 598.9L996.4 599.9L998 599.4L998.8 599.6L999.6 601.1L1001.2 600.9L1002 601.3L1002.8 599.9L1006.8 600.5L1008.4 599.6L1010 599.5L1010.8 600L1011.6 599.3L1012.4 599.5L1013.2 599L1014.8 599.3L1015.6 598.8L1016.4 599.2L1017.2 597.3L1018.8 597.3L1019.6 597.6L1020.4 596.5L1021.2 662.4L1042.8 662.3L1045.2 659.9L1046 660.4L1046.8 660.2L1047.6 659.2L1050 659.2L1050.8 658.8L1053.2 656.8L1054.8 653L1055.6 653.5L1058 652.2L1058.8 651.2L1062 650.2L1063.6 648.1L1064.4 648.6L1066 648.3L1068.4 645.5L1069.2 645.1L1070 645.8L1072.4 643.4L1073.2 643.7L1074 643L1075.6 642.5L1077.2 640.8L1078 640.8L1079.6 641.7L1082 638.6L1082.8 639.2L1083.6 638.8L1086 634.5L1087.6 633.4L1090.8 633.9L1092.4 633.6L1093.2 633.1L1094 632.1L1095.6 631.5L1096.4 631.7L1097.2 632.6L1098.8 632L1099.6 632.5L1100.4 631.5L1101.2 631.7L1102 631.4L1102.8 631.5L1103.6 632.1L1104.4 630.7L1105.2 631.4L1106 630.7L1106.8 631L1107.6 630.7L1109.2 631.2L1110.8 629.2L1111.6 629.9L1112.4 629.9L1113.2 629.3L1114 629.7L1114.8 629.3L1115.6 629.8L1118 627.1L1118.8 626.6L1119.6 627.1L1120.4 626.2L1121.2 626.5L1122.8 624.1L1123.6 623.5L1124.4 623.6L1125.2 622.5L1126 622.1L1126.8 622.6L1127.6 622.3L1128.4 620.9L1130 620.2L1130.8 620L1131.6 620.5L1134.8 618L1135.6 618.6L1138.8 613.8L1140.4 613.8L1141.2 613.1L1142 611.7L1142.8 612.5L1144.4 612L1146 609.7L1146.8 609.5L1147.6 609.8L1149.2 608.8L1150 609.1L1150.8 607.8L1151.6 607.5L1152.4 606.5L1153.2 606.7L1154 605.6L1154.8 606.3L1155.6 605.4L1156.4 606.3L1157.2 605.1L1158 605.2L1158.8 605.9L1160.4 605.2L1162 605.4L1163.6 604.7L1164.4 606.3L1165.2 605.9L1167.6 603.6L1168.4 603.8L1169.2 602.1L1170.8 601.6L1172.4 600.7L1174 601.5L1174.8 600.9L1175.6 600.8L1176.4 602L1177.2 602.5L1181.2 600.8L1182 599.8L1183.6 600.5L1186 599.3L1186.8 598.6L1187.6 599.1L1188.4 598.5L1189.2 598.4L1190 599.2L1190.8 599.3L1191.6 598L1192.4 597.7L1193.2 598.2L1194 599.7L1195.6 600L1196.4 599.6L1197.2 662.4L1218.8 662.3L1219.6 661.8L1220.4 659.9L1221.2 659.2L1222 658.8L1223.6 659.4L1225.2 658.6L1226 656.2L1227.6 656.2L1228.4 655.1L1229.2 654.7L1230 655.1L1230.8 653.8L1231.6 653.6L1232.4 653.9L1234 652.2L1234.8 651.9L1236.4 650L1237.2 650.2L1238.8 651.5L1239.6 650.6L1242.8 644.9L1243.6 644.7L1244.4 643.9L1245.2 644.6L1246.8 643.2L1248.4 642.7L1249.2 642.9L1250.8 640.9L1251.6 640.7L1252.4 639.9L1253.2 639.8L1254 639.2L1254.8 639.3L1257.2 637.2L1258.8 637.2L1259.6 636.6L1261.2 633.8L1262 633.7L1264.4 631.4L1265.2 632.3L1266 632L1266.8 632.5L1267.6 631.6L1269.2 630.8L1270 632.4L1271.6 631.2L1272.4 631.9L1273.2 631.1L1274 631L1274.8 631L1276.4 631.8L1277.2 631.7L1278 629.6L1279.6 629.5L1282.8 630.8L1283.6 630L1284.4 630.1L1285.2 629.4L1286 630L1286.8 629.3L1288.4 628.7L1289.2 628.8L1290 629.3L1290.8 628.4L1291.6 628.7L1293.2 628.3L1296.4 625.6L1298 625.7L1300.4 622.6L1301.2 622.8L1304.4 619.8L1306 619L1306.8 618L1307.6 617.9L1308.4 618.3L1310 617L1310.8 617.5L1311.6 617.1L1312.4 615.9L1314 614.6L1314.8 614.7L1316.4 611.8L1317.2 611.5L1318.8 611.7L1319.6 610.5L1320.4 609.9L1321.2 609.8L1322.8 607.6" fill="none" stroke="#139a90" stroke-width="1.15" stroke-dasharray="10 8"/>
<path d="M474 608.8L475 608.7L476 609L477 608.3L480 607.5L481 606.8L483 606L487 606.6L488 607.5L489 606.4L492 605.9L494 606.3L495 606.2L496 607L497 606.3L499 606.5L501 607.4L502 607L504 608.8L506 609.3L507 611.1L508 610.9L510 611.9L511 613.1L512 613.6L513 613.6L517 617.6L519 618.7L521 620.9L523 626.6L524 627.8L526 633.6L531 649.9L533 653.1L535 655.3L536 657.3L537 658.6L540 660.4L541 661.9L542 662.4L567 662.4L569 659.3L571 657.3L572 655.5L573 654.6L576 649.8L578 645.8L581 642.8L583 639.8L585 638.4L587 635.4L588 635.1L590 636L594 635.4L596 636.8L599 635.8L600 636.6L602 635.7L603 635.6L606 633.4L609 630.7L613 628.7L614 628.5L616 626.7L618 626.2L619 625.2L621 624.7L622 623.9L623 623.6L628 618.9L629 618.6L630 618.9L632 617.8L634 615.3L638 613.1L639 613L640 612.2L642 612L644 610.1L645 609.9L646 610.3L647 609.5L649 608.9L650 609.1L652 608L653 608.4L655 607.8L656 608L658 607.1L659 607.3L660 606.5L661 606.8L662 606.1L663 606L666 606.8L667 607.5L669 606.9L670 607.5L671 607.2L673 607.7L674 607.4L676 607.9L677 608.4L678 608.2L679 609.2L680 609L681 610.2L686 614.2L688 615.1L689 615.1L690 615.6L692 616.9L693 618.7L697 622.1L699 627.2L700 629L703 638.6L706 646.7L710 654.6L712 657.1L714 658.9L715 661.2L718 662.4L743 662.4L748 655.8L751 651.3L752 649.2L755 645.7L756 645L758 641.6L761 638.6L763 635.6L765 635.9L766 636.7L767 636.9L769 636.4L770 637.2L771 636.5L773 637.1L774 636.1L775 635.9L776 636.2L778 635.6L779 636.1L780 635.1L781 634.9L782 633.9L784 633.4L787 631.2L788 631.1L789 630.5L790 629.4L793 627.3L794 627.1L795 625.5L796 625.3L799 623.1L801 622.4L804 620.2L805 618.9L808 616.8L809 616.2L810 616.1L811 615.2L813 614.8L815 613.3L816 613.5L818 613L819 611.9L821 611.1L823 610.9L824 610.4L825 610.6L828 610L829 610.2L830 609.3L832 609.6L834 608.7L836 608.7L837 608.3L839 608.2L840 607.3L841 608.1L843 607.6L845 607.7L846 605.3L847 605.6L848 606.3L850 606L852 606.4L853 606.3L856 607.6L858 609.7L859 609.6L860 610.1L862 612.2L866 614L869 617.2L871 618.7L872 618.9L875 624.8L880 639.9L882 647.1L883 649.3L888 657.3L889 657.6L890 658.4L893 661.9L894 662.4L919 662.4L922 658L924 654.1L925 652.7L926 652.1L928 649.3L930 645.8L931 645.4L932 644.5L934 641.4L936 639.5L939 634.2L941 634.3L942 634.9L944 634.6L946 635.5L947 635.1L949 635.7L952 634.6L956 634.9L957 633.1L959 632.9L962 630.4L963 630.7L964 630.1L965 628.7L966 627.9L967 627.6L969 625.3L970 625.1L972 623.4L973 623.5L975 622.2L977 621.6L980 618.9L982 618.6L983 617.3L985 615.5L988 614L991 613L992 613L994 610.6L996 610L997 608.6L998 608.3L1000 608.9L1002 607.5L1003 607.9L1004 607.6L1005 607.9L1006 607.7L1007 607L1010 607.1L1011 606.4L1013 606.2L1014 605.1L1016 605.7L1020 605.4L1021 605.6L1022 607.9L1023 607.9L1024 607.5L1025 607.6L1026 607.2L1028 608.1L1029 608L1030 608.4L1032 609.8L1034 610.4L1038 612.8L1040 614.5L1043 615.7L1044 617.9L1046 618.9L1047 620.6L1048 620.5L1052 628.7L1058 647.8L1059 649.5L1060 652.2L1063 656.5L1064 657.5L1065 658L1068 661.8L1070 662.4L1095 662.4L1097 660.3L1102 652.4L1103 651.6L1106 647.6L1110 641.3L1111 640.6L1113 637.7L1115 635.7L1116 636L1120 634.9L1123 636.6L1124 636.6L1125 635.7L1127 636.1L1129 635.8L1131 636L1132 635.7L1133 634.4L1136 632.4L1137 632.6L1138 631.7L1140 630.7L1141 630.6L1143 628.5L1144 628.2L1145 626.9L1146 626.7L1147 625.5L1148 625.1L1149 623.7L1150 623.9L1151 623.1L1153 622.8L1156 621L1158 618.6L1159 617.8L1160 617.7L1161 616.4L1162 616.7L1163 615.5L1165 615.2L1167 614.1L1168 613.2L1170 612.4L1171 611.6L1175 611.2L1178 609.9L1179 610.3L1183 608.9L1184 609.7L1185 609.6L1187 608.6L1189 606.6L1191 607.3L1192 607L1193 607.4L1194 607L1196 607.3L1197 607.1L1198 603.3L1200 604.3L1201 603.9L1202 604L1204 605.2L1205 605.1L1207 606.3L1210 607.1L1214 611.2L1215 611.3L1216 612.4L1218 613.9L1221 616L1222 616L1223 616.6L1224 617.8L1228 627L1235 649.2L1238 653.3L1240 657.1L1241 657.7L1245 661.9L1246 662.4L1271 662.4L1272 661L1273 660.3L1275 656.7L1276 655.6L1277 653.5L1278 652.8L1281 647L1282 646L1284 642.9L1285 643L1288 637.7L1292 633.6L1293 633.9L1294 633.5L1295 633.6L1296 634.4L1300 634.5L1301 634.8L1302 634.3L1306 634.3L1309 633.6L1310 632.1L1312 630.9L1313 630.9L1314 629.5L1316 627.8L1320 625.6L1322 623.3L1323 623" fill="none" stroke="#fb5012" stroke-width="1.15" stroke-dasharray="10 8"/>
<path d="M474 524.4L491 547L498 546.8L536 512.3L584 512.3L585 512L612 471.9L613 471.2L616 471.2L666 545.8L667 547L673 547L674 546.8L712 513L760 513L761 512.7L789 471.9L790 471.2L791 471.2L842 545.8L843 547L849 547L850 546.8L888 514.4L936 514.4L937 514.1L966 473.7L967 474.2L1018 545.9L1019 547L1025 547L1026 546.8L1064 512.9L1112 512.9L1113 512.6L1141 471.8L1142 471.2L1143 471.2L1194 545.8L1195 547L1201 547L1202 546.8L1240 513.2L1288 513.2L1289 512.9L1318 471.2L1319 471.7L1323 477.5" fill="none" stroke="#c4105f" stroke-width="1.15" stroke-dasharray="10 8"/>
<path d="M474 485L474.8 484.5L476.4 484.5L477.2 483.6L478.8 483.5L479.6 482.2L482 483.9L482.8 483.9L486.8 479.5L487.6 479.5L488.4 479L489.2 479L490 479.7L490.8 479.4L492.4 479.9L493.2 547L514.8 546.8L515.6 546.3L516.4 544.5L517.2 543.8L518.8 543.5L519.6 541.7L520.4 541.7L523.6 539.4L525.2 539.5L526.8 538.9L528.4 536.6L529.2 536.9L530 536.2L531.6 536.3L534 534.9L534.8 535.9L535.6 534.1L537.2 533.3L538 532.2L538.8 532L539.6 532.2L541.2 530.2L542 530.1L543.6 528.1L544.4 528.3L545.2 526.6L546 526.1L546.8 526.4L549.2 523.9L550 524.4L551.6 522.2L554 519.7L555.6 518.9L556.4 519.2L558 517.3L559.6 516.7L560.4 516L561.2 517.7L562 517.3L562.8 518.7L563.6 518.2L565.2 515.8L566 516.2L567.6 516L568.4 517.4L569.2 516.6L570.8 516.3L571.6 516.7L573.2 516.2L574 515.2L574.8 515L575.6 512.9L578.8 514.7L579.6 513.8L580.4 513.5L581.2 514.4L582 514.3L582.8 513.6L583.6 514.5L585.2 514.4L586 512.8L588.4 513.1L589.2 511.4L590 511.5L590.8 509.7L591.6 510.6L594 510L594.8 509.6L595.6 508.6L597.2 508.8L598.8 505.8L599.6 505.9L600.4 505.2L601.2 506.4L602 505L602.8 505.2L603.6 504.8L604.4 502.7L605.2 503L606 502.4L607.6 502.9L608.4 502.7L609.2 501.6L610 501.5L610.8 501L611.6 499.6L612.4 498.9L613.2 499L614 497.2L614.8 496.6L615.6 495.1L616.4 495.4L617.2 493.8L618.8 494.9L619.6 494.4L621.2 493L622 492.6L623.6 490.1L625.2 490.4L626 490.2L627.6 488.7L629.2 489.4L630 489.1L630.8 488.3L631.6 488.7L632.4 487.7L634 487.3L634.8 487.7L635.6 486.8L636.4 486.8L637.2 487.8L638 487.1L638.8 487.3L639.6 486.5L640.4 486.4L641.2 486.8L642 486.5L643.6 487.1L644.4 486.8L645.2 486.1L646.8 485.9L647.6 486.1L650.8 484.4L651.6 483.2L652.4 484.4L653.2 484.4L654.8 483.5L656.4 485.2L657.2 484.9L658.8 483.2L659.6 484.2L660.4 483.9L661.2 483L662 483L664.4 484.5L665.2 483.3L667.6 483.6L668.4 483.4L669.2 547L690 547L691.6 546.3L693.2 546.2L696.4 543.2L697.2 541.8L699.6 540.2L700.4 540.3L701.2 539L702 538.9L702.8 539.4L704.4 537L705.2 536.9L707.6 534L708.4 534.5L709.2 533.9L710 534.1L712.4 533.3L713.2 532.2L714 532.1L715.6 530.2L716.4 530L717.2 529.2L718.8 527L719.6 526.8L720.4 525.2L722 523.6L723.6 524.6L724.4 523.3L725.2 523L726.8 521.1L727.6 521.8L728.4 521L729.2 519.3L730 518.6L732.4 517.4L734 515.6L734.8 515.6L738 513.9L738.8 514.8L740.4 513.7L742.8 515.6L744.4 515.1L745.2 515.6L749.2 516.2L750 515.3L750.8 515.1L751.6 515.2L752.4 514.2L753.2 514.3L754 513.5L754.8 514.2L755.6 513L757.2 513.7L758 513.2L759.6 514.2L763.6 512.3L766 510.2L767.6 508L769.2 509.5L770 507.7L770.8 507.5L773.2 505.5L774 503.6L774.8 503.8L776.4 502.9L778 503.1L780.4 500.9L781.2 501.5L782 501.7L782.8 499.7L783.6 499.1L784.4 497.9L786 497.5L786.8 495.5L788.4 495.9L790 494.2L790.8 494.6L792.4 492.7L793.2 493L794 492.6L795.6 489.5L796.4 490.6L797.2 490.3L798 489.5L799.6 489.1L800.4 488.6L801.2 487.4L802 487.6L805.2 484.2L806.8 484.8L809.2 483.1L811.6 484.8L813.2 485.2L814.8 485.1L816.4 483.5L817.2 483.4L818 484L818.8 483.8L820.4 482.6L822 481.9L822.8 482.4L824.4 481.4L826 482.1L826.8 481.2L827.6 481.9L828.4 481.3L831.6 481.6L832.4 481.4L834 479.2L834.8 479.5L836.4 478.8L837.2 479.2L838 478.2L838.8 478.4L839.6 478.2L842 480.1L842.8 480.2L843.6 479.2L844.4 479.3L845.2 547L866.8 546.8L867.6 545.7L869.2 545.5L870.8 544.4L871.6 544.8L873.2 542.4L874 541.9L876.4 541.7L878 540.7L879.6 538.9L880.4 537.3L882 538L882.8 536.1L883.6 535.1L884.4 534.8L885.2 533.8L886 533.9L886.8 533.4L887.6 532.3L891.6 529.4L894 526.1L894.8 526.4L895.6 525.6L896.4 526.4L897.2 526.6L899.6 523.2L900.4 523.8L901.2 522.5L902.8 522L904.4 519.7L906 520.4L906.8 520L909.2 517L911.6 516.1L912.4 514.8L913.2 515.7L914.8 516L915.6 514.9L916.4 514.6L917.2 514.9L918.8 512.8L919.6 512.3L920.4 513.3L921.2 513.4L922 512.7L922.8 513.8L923.6 514.4L924.4 514.3L925.2 513.7L926 513.9L928.4 512.9L930.8 515.3L933.2 512.7L934.8 514L935.6 513.6L936.4 513.7L937.2 514.3L938.8 513.8L939.6 513.2L942.8 509.1L945.2 507.7L946 506.3L946.8 506L949.2 502.1L950 503.3L951.6 501.7L953.2 501.5L954 501.8L955.6 500.7L956.4 501.1L958.8 498.9L959.6 498.8L961.2 496.9L962.8 496.1L964.4 493.7L965.2 493.6L966 492.6L966.8 492.8L967.6 492.4L968.4 493.4L971.6 489.4L972.4 489.1L974 487.5L974.8 487.4L975.6 485.4L977.2 485.6L978.8 484.5L980.4 484L982.8 482.5L983.6 483.4L984.4 482.2L985.2 482.3L986 483.5L986.8 482.8L988.4 482.4L989.2 481.1L991.6 482.4L994.8 481L995.6 482.2L997.2 480.8L999.6 481.5L1000.4 481L1001.2 481.7L1002 480.1L1003.6 480.3L1004.4 480.8L1006 479.3L1006.8 479.5L1008.4 478.9L1010.8 477.1L1011.6 478.1L1012.4 476.4L1014.8 478.2L1016.4 477.1L1017.2 475.6L1018 475.1L1018.8 475.9L1020.4 476.5L1021.2 547L1042 547L1044.4 546.1L1046 545.4L1046.8 544L1048.4 542.5L1049.2 542.2L1050 542.4L1050.8 541.6L1051.6 541.3L1053.2 538.4L1054.8 539.1L1055.6 538.9L1056.4 538.4L1057.2 537L1058.8 535.9L1060.4 535.3L1061.2 534L1062 533.6L1062.8 532L1063.6 531.8L1065.2 530.8L1066 530.1L1066.8 528.7L1069.2 529.4L1070 527.7L1072.4 526L1073.2 526.9L1074 525.9L1075.6 524.7L1079.6 522.9L1080.4 521.9L1081.2 522.7L1082.8 520.4L1083.6 520.6L1085.2 518.9L1086 518.7L1086.8 517.1L1087.6 516.6L1088.4 516.3L1089.2 517L1090 515.5L1092.4 515.6L1093.2 514.3L1094 514.7L1094.8 513.9L1098 512.9L1098.8 513.4L1100.4 516.5L1101.2 515.5L1102 516.5L1103.6 513.2L1104.4 514.6L1106 513.8L1106.8 514.2L1107.6 515.3L1108.4 515.1L1109.2 513.7L1113.2 513.2L1114 511.7L1115.6 513.6L1116.4 512.4L1118 512L1118.8 512.2L1120.4 511.1L1121.2 510L1122 509.6L1122.8 509.8L1124.4 508L1125.2 508.5L1126 507.8L1126.8 506.5L1128.4 505.4L1129.2 504.3L1130.8 503.9L1131.6 502.9L1133.2 502.1L1136.4 498.4L1138 497.6L1138.8 497.8L1140.4 496.8L1142.8 494L1144.4 493.2L1146 490.6L1146.8 490.9L1147.6 492.4L1148.4 491.4L1149.2 491.8L1150.8 490.1L1151.6 488.6L1153.2 487.9L1154 488L1154.8 487.7L1155.6 488.3L1157.2 487.3L1158 486.4L1158.8 486.6L1161.2 486.2L1162.8 486.9L1164.4 486.1L1165.2 485.4L1166 485.7L1168.4 484.5L1170 484.3L1172.4 484.6L1173.2 485.6L1174 485.7L1174.8 486.8L1176.4 484.9L1179.6 484L1180.4 482.9L1182.8 482.8L1183.6 481.5L1184.4 482.6L1185.2 482.4L1186 483.1L1187.6 483.6L1188.4 482.7L1190 483.4L1190.8 483.2L1192.4 483.5L1193.2 482L1194.8 482.3L1195.6 481.1L1196.4 480.9L1197.2 547L1218 547L1218.8 546.8L1219.6 545.6L1220.4 546.1L1221.2 545.7L1226.8 539.5L1227.6 539.7L1228.4 539.3L1229.2 538.1L1230 538.4L1232.4 535.7L1233.2 536.5L1234 534.6L1234.8 535.3L1235.6 534.8L1236.4 532.8L1237.2 533.4L1238 531.6L1238.8 531.3L1240.4 529L1242.8 529.3L1244.4 530L1245.2 529L1246 529.3L1248.4 527L1250 526.9L1250.8 525.5L1251.6 525.4L1253.2 524.2L1255.6 519.6L1258 517.8L1259.6 517.6L1260.4 518.3L1261.2 517.4L1262 517.2L1262.8 516.4L1263.6 514.5L1265.2 513.1L1266 512.9L1268.4 515L1269.2 515.2L1271.6 513.8L1273.2 514.6L1274.8 514L1275.6 515.1L1276.4 514.6L1277.2 515.2L1278.8 514.7L1280.4 514.7L1281.2 514.3L1282 514.5L1284.4 512.4L1285.2 513L1286.8 512.8L1288.4 511.9L1289.2 512.1L1290 511.9L1290.8 511.3L1291.6 511.4L1292.4 510.4L1293.2 510L1294 510.4L1296.4 508.6L1297.2 506.8L1298 506.6L1298.8 507.1L1300.4 506L1301.2 505L1302 502.8L1303.6 501.7L1306 501.9L1308.4 500.3L1310.8 499.7L1311.6 498.4L1312.4 498.4L1314 495.4L1314.8 495.5L1316.4 493.4L1317.2 494.7L1318.8 492.4L1319.6 492.4L1320.4 490.7L1321.2 491.4L1322 489.9L1322.8 489.3" fill="none" stroke="#23486b" stroke-width="1.15" stroke-dasharray="10 8"/>
<path d="M474 640.7L491 662.4L498 662.2L536 629.1L584 629.1L585 628.8L614 587.6L615 588.2L666 661.3L667 662.4L673 662.4L674 662.2L712 629.8L760 629.8L761 629.5L790 589L791 589.6L842 661.3L843 662.4L849 662.4L850 662.2L888 631.1L936 631.1L937 630.9L966 592.1L967 592.7L1018 661.3L1019 662.4L1025 662.4L1026 662.2L1064 629.7L1112 629.7L1113 629.4L1142 588.9L1143 589.5L1194 661.3L1195 662.4L1201 662.4L1202 662.2L1240 630L1288 630L1289 629.7L1318 589.6L1319 590.2L1323 595.8" fill="none" stroke="#47535f" stroke-width="1.15" stroke-dasharray="10 8"/>
<path d="M474 602.9L474.8 602.5L476.4 602.5L477.2 601.6L478.8 601.5L479.6 600.3L482 601.9L482.8 601.9L486.8 597.7L488.4 597.2L489.2 597.2L490 597.9L490.8 597.6L492.4 598L493.2 662.4L514.8 662.2L515.6 661.7L516.4 660L517.2 659.3L518.8 659.1L519.6 657.3L520.4 657.3L523.6 655.1L525.2 655.2L526.8 654.7L528.4 652.4L529.2 652.7L530 652L531.6 652.2L534 650.8L534.8 651.8L535.6 650.1L537.2 649.3L538 648.2L538.8 648L539.6 648.2L541.2 646.3L542 646.2L543.6 644.3L544.4 644.5L545.2 642.9L546 642.3L546.8 642.6L549.2 640.3L550 640.7L551.6 638.6L554 636.2L555.6 635.5L556.4 635.8L558 634L559.6 633.3L560.4 632.7L561.2 634.3L562 633.9L562.8 635.3L563.6 634.7L565.2 632.5L566 632.9L567.6 632.7L568.4 634L569.2 633.3L570.8 632.9L571.6 633.4L573.2 632.9L574 631.9L574.8 631.8L575.6 629.7L578.8 631.5L579.6 630.5L580.4 630.3L581.2 631.2L582 631.1L582.8 630.4L583.6 631.3L585.2 631.1L586 629.6L588.4 629.9L589.2 628.3L590 628.4L590.8 626.7L591.6 627.5L594 626.9L594.8 626.5L595.6 625.6L597.2 625.8L598.8 622.9L599.6 623L600.4 622.3L601.2 623.5L602 622.1L602.8 622.3L603.6 621.9L604.4 619.9L605.2 620.2L606 619.6L607.6 620.1L608.4 619.9L609.2 618.9L610 618.8L610.8 618.3L611.6 616.9L612.4 616.3L613.2 616.4L614 614.7L614.8 614.1L615.6 612.7L616.4 612.9L617.2 611.4L618.8 612.4L619.6 612L621.2 610.6L622 610.3L623.6 607.9L625.2 608.2L626 608L627.6 606.5L629.2 607.2L630 606.9L630.8 606.2L631.6 606.5L632.4 605.5L634 605.2L634.8 605.6L635.6 604.7L636.4 604.7L637.2 605.6L638 605L638.8 605.2L639.6 604.4L640.4 604.3L641.2 604.7L642 604.5L643.6 605L645.2 604L646.8 603.8L647.6 604.1L650.8 602.4L651.6 601.2L652.4 602.4L653.2 602.4L654.8 601.6L656.4 603.2L657.2 602.9L658.8 601.3L659.6 602.2L660.4 602L661.2 601.1L662 601.1L664.4 602.5L665.2 601.4L667.6 601.7L668.4 601.4L669.2 662.4L690 662.4L691.6 661.7L693.2 661.6L696.4 658.7L697.2 657.5L699.6 655.9L700.4 656L701.2 654.7L702 654.7L702.8 655.1L704.4 652.8L705.2 652.7L707.6 650L708.4 650.4L709.2 649.8L710 650L712.4 649.3L713.2 648.3L714 648.1L715.6 646.3L716.4 646.1L717.2 645.4L718.8 643.2L719.6 643L720.4 641.5L722 640L723.6 640.9L724.4 639.7L725.2 639.4L726.8 637.6L727.6 638.2L728.4 637.4L729.2 635.8L730 635.1L732.4 634.1L734 632.3L734.8 632.3L738 630.6L738.8 631.5L740.4 630.5L742.8 632.3L744.4 631.8L745.2 632.3L749.2 632.9L750 632L751.6 632L752.4 631L753.2 631.1L754 630.3L754.8 630.9L755.6 629.8L757.2 630.5L758 630L759.6 630.9L763.6 629.1L766 627.1L767.6 625.1L769.2 626.4L770 624.8L770.8 624.5L773.2 622.6L774 620.8L774.8 621L776.4 620.1L778 620.3L780.4 618.2L781.2 618.8L782 618.9L782.8 617.1L783.6 616.5L784.4 615.4L786 614.9L786.8 613.1L788.4 613.4L790 611.8L790.8 612.2L792.4 610.3L793.2 610.7L794 610.3L795.6 607.3L796.4 608.3L798 607.3L799.6 606.9L800.4 606.4L801.2 605.3L802 605.4L805.2 602.3L806.8 602.7L809.2 601.1L811.6 602.8L813.2 603.2L814.8 603L816.4 601.5L817.2 601.5L818 602L818.8 601.8L822 600L822.8 600.4L824.4 599.5L826 600.2L826.8 599.4L827.6 600L828.4 599.4L831.6 599.7L832.4 599.5L834 597.4L834.8 597.7L836.4 597L837.2 597.5L838 596.4L838.8 596.6L839.6 596.4L842 598.3L842.8 598.4L843.6 597.5L844.4 597.5L845.2 662.4L866.8 662.2L867.6 661.2L869.2 661L870.8 659.9L871.6 660.3L873.2 658L874 657.6L876.4 657.4L878 656.4L879.6 654.6L880.4 653.1L882 653.8L882.8 651.9L883.6 651L884.4 650.7L885.2 649.8L886 649.8L886.8 649.4L887.6 648.3L891.6 645.6L894 642.4L894.8 642.7L895.6 641.9L896.4 642.6L897.2 642.9L899.6 639.6L900.4 640.2L901.2 638.9L902.8 638.5L904.4 636.2L906 636.9L906.8 636.5L909.2 633.7L911.6 632.8L912.4 631.5L913.2 632.4L914.8 632.7L915.6 631.6L916.4 631.4L917.2 631.6L918.8 629.7L919.6 629.2L920.4 630.1L921.2 630.2L922 629.5L922.8 630.6L923.6 631.1L924.4 631.1L925.2 630.4L926 630.7L928.4 629.8L930.8 632L933.2 629.5L934.8 630.8L935.6 630.4L936.4 630.5L937.2 631L938.8 630.6L939.6 630L942.8 626L945.2 624.8L946 623.4L946.8 623.1L949.2 619.4L950 620.5L951.6 618.9L953.2 618.8L954 619.1L955.6 618L956.4 618.4L958.8 616.3L959.6 616.2L961.2 614.3L962.8 613.6L964.4 611.3L965.2 611.2L966 610.3L966.8 610.4L967.6 610L968.4 611L971.6 607.2L972.4 606.9L974 605.4L974.8 605.3L975.6 603.3L977.2 603.6L978.8 602.5L980.4 602L982.8 600.6L983.6 601.4L984.4 600.3L985.2 600.4L986 601.6L986.8 600.8L988.4 600.5L989.2 599.2L991.6 600.5L994.8 599.1L995.6 600.3L997.2 598.9L999.6 599.6L1000.4 599.2L1001.2 599.8L1002 598.3L1003.6 598.5L1004.4 599L1006 597.5L1006.8 597.7L1008.4 597.1L1010.8 595.4L1011.6 596.4L1012.4 594.8L1014.8 596.5L1016.4 595.4L1017.2 594L1018 593.5L1018.8 594.2L1020.4 594.8L1021.2 662.4L1042 662.4L1044.4 661.6L1046 660.9L1046.8 659.5L1048.4 658.1L1049.2 657.8L1050 658L1050.8 657.2L1051.6 656.9L1053.2 654.1L1054.8 654.8L1055.6 654.6L1056.4 654.1L1057.2 652.9L1058.8 651.8L1060.4 651.2L1061.2 649.9L1062 649.5L1062.8 648L1065.2 646.9L1066 646.2L1066.8 644.9L1069.2 645.5L1070 643.9L1072.4 642.3L1073.2 643.1L1074 642.2L1075.6 641.1L1079.6 639.3L1080.4 638.4L1081.2 639.1L1082.8 636.9L1083.6 637.1L1085.2 635.4L1086 635.3L1086.8 633.7L1087.6 633.3L1088.4 633L1089.2 633.7L1090 632.2L1092.4 632.3L1093.2 631.1L1094 631.4L1094.8 630.7L1098 629.7L1098.8 630.2L1100.4 633.2L1101.2 632.2L1102 633.2L1103.6 630L1104.4 631.3L1106 630.6L1106.8 631L1107.6 632.1L1108.4 631.8L1109.2 630.5L1113.2 630L1114 628.6L1115.6 630.4L1116.4 629.3L1118 628.8L1118.8 629.1L1120.4 628L1121.2 627L1122 626.6L1122.8 626.8L1124.4 625L1125.2 625.5L1126.8 623.6L1128.4 622.5L1129.2 621.5L1130.8 621.1L1131.6 620.1L1133.2 619.4L1136.4 615.8L1138 615.1L1138.8 615.2L1140.4 614.3L1142.8 611.6L1144.4 610.8L1146 608.4L1146.8 608.7L1147.6 610.1L1148.4 609.1L1149.2 609.5L1150.8 607.9L1151.6 606.4L1153.2 605.8L1154 605.9L1154.8 605.5L1155.6 606.1L1157.2 605.2L1158 604.3L1158.8 604.5L1161.2 604.1L1162.8 604.8L1164.4 604.1L1165.2 603.3L1166 603.7L1168.4 602.5L1170 602.3L1172.4 602.6L1173.2 603.5L1174 603.6L1174.8 604.7L1176.4 602.9L1179.6 602.1L1180.4 601L1182.8 600.8L1183.6 599.6L1184.4 600.7L1185.2 600.5L1186 601.2L1187.6 601.6L1188.4 600.8L1190 601.4L1190.8 601.2L1192.4 601.5L1193.2 600.1L1194.8 600.4L1195.6 599.2L1196.4 599L1197.2 662.4L1218 662.4L1218.8 662.2L1219.6 661L1220.4 661.6L1221.2 661.1L1226.8 655.2L1227.6 655.4L1228.4 655L1229.2 653.9L1230 654.2L1232.4 651.6L1233.2 652.4L1234 650.5L1234.8 651.2L1235.6 650.7L1236.4 648.8L1237.2 649.4L1238 647.7L1238.8 647.4L1240.4 645.1L1242.8 645.4L1244.4 646.1L1245.2 645.2L1246 645.4L1248.4 643.2L1250 643.1L1250.8 641.8L1251.6 641.7L1253.2 640.6L1255.6 636.1L1258 634.4L1259.6 634.2L1260.4 634.9L1261.2 634L1262 633.8L1262.8 633L1263.6 631.2L1265.2 629.9L1266 629.7L1268.4 631.8L1269.2 631.9L1271.6 630.6L1273.2 631.4L1274.8 630.8L1275.6 631.8L1276.4 631.4L1277.2 631.9L1278.8 631.4L1280.4 631.5L1281.2 631L1282 631.3L1284.4 629.3L1285.2 629.8L1286.8 629.7L1288.4 628.7L1289.2 628.9L1290 628.8L1290.8 628.2L1291.6 628.3L1292.4 627.3L1293.2 626.9L1294 627.3L1296.4 625.6L1297.2 623.9L1298 623.7L1298.8 624.1L1300.4 623.1L1301.2 622.1L1302 620.1L1303.6 619L1306 619.2L1308.4 617.7L1310.8 617.1L1311.6 615.8L1312.4 615.8L1314 613L1314.8 613.1L1316.4 611L1317.2 612.2L1318.8 610.1L1319.6 610L1320.4 608.4L1321.2 609.1L1322 607.7L1322.8 607.1" fill="none" stroke="#139a90" stroke-width="1.15" stroke-dasharray="10 8"/>
<path d="M474 607.1L476 606.9L477 605.9L478 606.5L481 605.6L482 605.5L483 606.1L484 605.4L485 605.9L487 606L489 606.7L490 606.2L492 606.3L493 607.1L494 606.9L496 607.5L505 613.2L506 614.1L507 613.9L509 615.1L512 619.1L514 620.6L517 627.1L519 632.5L524 649.3L526 652L529 657L533 660.3L534 660.5L535 662.4L536 662.4L560 662.4L561 661.8L562 659.7L565 657.4L567 653.3L569 651L572 645.9L574 643.7L575 642.1L577 640.3L580 636.3L581 635.4L582 635.4L583 634.6L584 634.9L585 636.1L586 636.5L587 636.3L588 636.6L589 635.5L591 635.8L596 635.1L598 635.5L600 632.9L602 632.2L603 631.2L606 629.5L608 628L609 626.7L612 625.9L614 624.7L616 622.8L617 621.3L618 621.4L620 619.9L621 620.2L623 617.9L625 617L626 616L629 614.4L630 614.4L631 613.2L634 612.4L635 612.8L636 612.5L640 608.6L643 609.1L644 608.4L646 608.6L647 607.9L650 607.6L651 607.9L654 606.6L655 606.5L656 607.2L657 607.2L658 606.6L660 606.9L662 606.3L663 606.2L664 607.5L667 607.6L668 607.2L669 608L670 607.4L671 607.7L672 608.8L674 609.6L675 610.9L678 612.1L680 614L681 614.6L682 614.4L683 615.6L684 615.3L687 618.7L689 620.1L691 622.7L693 627.3L700 649.2L703 653.5L705 657.6L707 658.4L708 659.9L709 660.4L711 662.4L712 662.4L736 662.4L737 661.8L739 658.7L741 656.7L744 652.8L752 641.1L756 637.1L759 636.6L762 637.2L765 636.1L767 636.1L768 635.8L770 636.6L771 635.9L773 635.5L774 634.5L777 632.9L778 632.8L781 630.6L783 629.9L784 629.9L785 629.2L787 626.6L789 625.9L791 623.9L792 623.4L793 623.2L795 621.5L798 620.4L801 618L803 617.1L805 615.6L807 614.6L809 614.2L811 613.2L812 613.2L816 610.7L819 610.3L820 610.5L824 608.6L826 609.4L828 607.7L829 608L830 607.3L831 607.5L832 607L834 607.7L835 607.5L836 608.1L839 607.5L840 608.2L842 608.6L843 608L845 608.4L846 609.4L847 608.8L851 611.1L852 611.3L861 617.3L863 619.5L865 620.8L866 621.1L870 630.9L876 648.8L877 650.1L879 654.2L881 657.3L883 658.4L885 661.4L887 662.4L888 662.4L912 662.4L914 660.9L917 655.2L922 649.2L924 646.1L926 644.1L927 643.5L932 636.6L934 636.5L937 637.4L938 637.1L939 637.7L940 637.7L943 636.8L945 636.9L948 636L949 636.1L951 634.9L952 633.9L953 633.8L957 630.4L959 630.4L960 629.8L962 628.2L965 626.5L966 625.2L967 625L969 623.7L970 622.5L972 622.6L975 620.6L976 620.5L977 618.9L978 618.8L982 615.4L984 615.4L986 613.8L988 613.2L989 612.3L990 612.3L991 611.1L992 611.7L995 611.5L996 610.9L999 610.7L1000 609.9L1002 609.6L1003 609L1005 609.4L1007 608.4L1008 608.7L1013 608.4L1014 607.9L1015 608.6L1016 606.3L1017 607.3L1019 606.9L1020 606.1L1021 606.2L1022 607.3L1023 607.2L1024 608.3L1026 608.6L1027 609.1L1030 612.1L1031 612.5L1032 613.8L1035 615.6L1038 616.7L1041 619.7L1042 620L1045 627.9L1046 629.8L1052 648.3L1056 654.9L1057 657.1L1058 657.8L1059 657.9L1061 660.7L1063 662.4L1088 662.4L1089 661.8L1092 658.4L1094 655.2L1095 654.6L1096 652.4L1097 651.3L1098 648.9L1100 646.3L1101 645.5L1102 643.6L1104 641.5L1107 636.5L1108 635.8L1109 635.3L1111 636.2L1116 636.4L1120 635.8L1121 635.1L1123 635.5L1124 634.5L1126 634.4L1127 633.8L1128 633.9L1132 631.4L1134 629.2L1135 628.9L1137 627.1L1139 626.4L1141 624.6L1144 623.8L1148 621L1150 619.3L1151 618L1153 618L1154 617.4L1156 615.3L1158 614L1159 614.2L1162 612.1L1163 612L1164 612.6L1167 609.8L1168 609.7L1169 610.1L1170 609.4L1171 609.5L1173 608.8L1174 608.9L1175 608.4L1176 608.8L1177 607.9L1179 608.4L1183 606.7L1185 607.1L1186 606.6L1187 607.3L1188 606.8L1189 607.2L1191 606.7L1192 607L1196 606.4L1199 607.2L1201 608.9L1202 608.9L1203 610.2L1205 610L1206 610.4L1210 613.8L1211 613.9L1213 615.8L1214 616.2L1218 619.7L1222 629.2L1228 648.8L1231 653.9L1234 657.8L1236 659.8L1237 660.1L1239 662.4L1264 662.4L1265 661.8L1269 656.4L1272 651.5L1273 650.9L1276 646.1L1277 645.1L1279 641.4L1280 640.3L1282 639.1L1284 635.3L1285 635.5L1287 634.8L1291 636.2L1292 635.5L1294 635.9L1296 634.9L1297 634.9L1298 635.5L1300 635.3L1301 635.8L1303 634.1L1305 633.3L1306 631.9L1309 630.2L1312 627.8L1315 626.1L1316 625.8L1317 624.6L1318 624L1320 623.2L1322 620.9L1323 620.4" fill="none" stroke="#fb5012" stroke-width="1.15" stroke-dasharray="10 8"/>
<path d="M474 529.3L486 547L492 547L493 546.8L531 512.1L579 512.1L580 511.9L607 471.6L608 471.2L611 471.2L612 472.3L662 547L669 546.8L707 515.5L755 515.5L756 515.2L785 476.1L786 476.6L838 547L845 546.8L883 516.3L931 516.3L932 516.1L961 478.1L962 478.6L1014 547L1021 546.8L1059 513L1107 513L1108 512.7L1136 472L1137 471.2L1138 471.2L1139 472.6L1190 547L1197 546.8L1235 516.1L1283 516.1L1284 515.8L1313 477.4L1314 478L1323 490" fill="none" stroke="#c4105f" stroke-width="1.15" stroke-dasharray="10 8"/>
<path d="M474 481.2L474.8 480.2L476.4 481.7L479.6 479.7L482 480.2L483.6 480.1L484.4 547L505.2 547L506 546.5L507.6 544.5L508.4 544.9L509.2 543.9L510 543.5L511.6 541L512.4 540.5L513.2 541.4L514 540.5L514.8 541.1L515.6 539.5L517.2 539.1L518 537.4L518.8 538.2L519.6 537.6L520.4 537.8L522 537.2L522.8 536L523.6 535.6L525.2 533.7L526 534.3L526.8 532.7L527.6 532.4L528.4 532.9L529.2 532.6L530.8 530L531.6 530L532.4 529.4L535.6 526.2L537.2 526.4L538.8 524.5L541.2 522.9L542.8 521L544.4 519.8L546 519.9L546.8 521L549.2 518.5L550 519.1L551.6 518.4L552.4 519.2L554 517L554.8 517.6L555.6 517.1L556.4 515.8L557.2 516.6L559.6 513.8L561.2 515.8L562 515.6L562.8 514.7L563.6 515.6L565.2 516.4L566 515.4L566.8 515.6L569.2 513.8L570.8 513.5L571.6 512.9L572.4 512.8L573.2 513.8L574 514.2L574.8 513.5L577.2 513.4L578 511.3L578.8 511.4L580.4 510.5L581.2 510.5L582.8 508.8L583.6 508.4L584.4 509.1L586 507.1L586.8 507L587.6 508.4L588.4 507.7L589.2 507.8L591.6 506.5L594 503L594.8 503.2L595.6 502.7L596.4 501.3L597.2 500.7L598.8 500.8L599.6 500.6L606 494.1L608.4 493.5L610 493.9L611.6 492.9L612.4 491.8L613.2 491.6L614.8 490.2L616.4 489.3L618 489.6L619.6 488.4L620.4 488.3L621.2 488.7L622 488L622.8 486.7L623.6 488.2L626.8 485.8L627.6 486.6L628.4 485.5L630 486.3L630.8 485.9L632.4 485.8L634 486.7L634.8 486.5L635.6 486.9L636.4 485.8L637.2 485.5L638 484.5L640.4 487.6L641.2 487.3L642 487.5L642.8 486.6L644.4 487.3L648.4 484L650 484.8L650.8 483L651.6 483.1L653.2 482.7L656.4 483.1L657.2 484.2L658 482.7L658.8 482.5L659.6 483.2L660.4 547L681.2 547L683.6 544.6L684.4 545L685.2 544.7L686 543.1L688.4 540.5L690 540.1L690.8 538.7L692.4 538.3L694 537.1L694.8 537.5L695.6 535.8L696.4 535.5L697.2 534L698 533.5L698.8 533.8L699.6 532.5L701.2 532.6L702 532.2L702.8 533L703.6 532L706 531.1L709.2 526.2L711.6 524.9L713.2 524.9L714 523.9L714.8 524L715.6 524.6L717.2 523L718 521.4L719.6 521.3L722 519.1L724.4 517.8L725.2 516.5L726.8 515L727.6 515L728.4 515.9L730 515.4L731.6 513.9L733.2 514L734 514.6L735.6 514.2L737.2 514.8L738 513.7L738.8 514.2L739.6 513L741.2 511.4L742 512.2L742.8 511.9L743.6 512.9L744.4 513.1L745.2 513.9L746.8 514L748.4 512.1L750 512.3L752.4 514L754 512.7L754.8 512.5L755.6 511.5L757.2 511.3L758 510.7L758.8 509.3L759.6 508.9L760.4 507.7L761.2 507.3L762 507.3L762.8 507.8L764.4 506.8L766 504.2L766.8 504.5L768.4 502.1L769.2 503.3L770 503L770.8 501.8L771.6 501.9L772.4 501.4L775.6 497L776.4 496.9L777.2 494.8L778 494.1L778.8 492.5L779.6 492.5L781.2 491.5L782 491.4L786.8 488.1L787.6 486.8L789.2 486L790 485.7L790.8 486.6L792.4 486.5L793.2 487L794 486.9L794.8 487.5L795.6 486.7L796.4 486.5L797.2 485.3L798 484.8L798.8 485.4L800.4 484.8L803.6 485.2L804.4 484.5L805.2 484.4L806 483.3L806.8 484.4L808.4 484.2L810 482L812.4 480L813.2 479.9L816.4 481L817.2 480.7L819.6 480.9L821.2 482.1L823.6 480.1L826 479.6L826.8 479.7L828.4 478.1L829.2 477.9L830 478.7L830.8 478.9L831.6 478.7L832.4 477.8L834 477.9L835.6 477.5L836.4 547L857.2 547L858.8 546L859.6 546.1L860.4 544.7L862.8 543.4L865.2 544.1L866 542.9L866.8 542.8L867.6 541.7L869.2 541.7L871.6 539.7L872.4 537.7L873.2 536.8L874 536.5L874.8 535.3L875.6 534.9L876.4 533.6L877.2 534.1L878 532.8L879.6 532.8L880.4 532L882 532.2L883.6 530.9L884.4 531L885.2 529.5L887.6 528L889.2 525.8L890 526.5L892.4 523.6L893.2 523.1L894 523.2L896.4 521.2L897.2 521.2L898.8 520.1L899.6 520.3L900.4 518.8L901.2 518.2L902 518.3L903.6 517L904.4 517L905.2 517.3L906 517.1L907.6 518.1L910.8 512.9L911.6 512.4L913.2 514L914 513.4L915.6 514.1L917.2 513.8L918 514.6L919.6 513.9L920.4 515.1L922 513.4L922.8 513.9L923.6 512.6L925.2 512.2L926 511.3L926.8 513.2L927.6 513L929.2 511.4L931.6 511.5L933.2 511.2L934 512L936.4 510.5L939.6 507.4L943.6 504.5L944.4 502.9L945.2 502.2L946 502L946.8 502.7L947.6 502.8L948.4 503.7L950 500.3L951.6 499.3L953.2 497.2L954 497.7L955.6 496.5L956.4 496.5L958 493.7L962 492L962.8 490.6L963.6 490.1L965.2 489.6L966 488.8L967.6 489L968.4 488.3L969.2 486.9L970 487.2L971.6 486.7L972.4 485.8L973.2 485.4L974 486.2L974.8 485L975.6 485L977.2 485.7L978 485.5L978.8 484.7L980.4 485.1L982 483.2L982.8 483.5L984.4 483.3L986 484.1L986.8 483.3L988.4 484.8L990.8 482.5L993.2 483.5L994 483.5L994.8 484.7L995.6 484.6L996.4 483.2L997.2 483.6L998 482.1L998.8 481.8L999.6 482.9L1000.4 481.9L1001.2 482.3L1002 481.6L1004.4 481.4L1005.2 481.9L1006.8 481.8L1007.6 480.3L1008.4 480.5L1010 479.7L1010.8 478.8L1011.6 479L1012.4 547L1033.2 547L1034.8 545.8L1035.6 545.8L1036.4 543.6L1037.2 544.2L1039.6 542.6L1041.2 542L1042.8 539.7L1046 537.9L1048.4 535.6L1049.2 536.2L1050 535.7L1050.8 535.7L1051.6 534.7L1054 532.9L1055.6 530.5L1056.4 530L1057.2 530.6L1058 530L1058.8 528.3L1059.6 528.4L1060.4 528L1062 524.7L1063.6 524.1L1064.4 524.8L1066 522.6L1066.8 523.4L1069.2 522.2L1070 522.1L1070.8 519.9L1071.6 520.2L1072.4 518.8L1075.6 516.5L1076.4 516.7L1077.2 516.5L1078.8 514.3L1079.6 514L1081.2 515.8L1082.8 513.7L1084.4 513.4L1085.2 513.8L1087.6 512.6L1088.4 513.1L1089.2 513L1090.8 513.4L1091.6 514L1092.4 515.3L1093.2 515.5L1094 514.8L1094.8 514.9L1095.6 514.1L1098 513.6L1098.8 512.5L1100.4 512.5L1102 510.8L1102.8 511.7L1103.6 510.7L1106 512.4L1106.8 511.2L1107.6 511.3L1109.2 509.4L1110.8 508.2L1112.4 505.1L1113.2 505.5L1114 505.1L1116.4 504.5L1117.2 503.6L1118.8 503.8L1122 499.9L1123.6 500.1L1125.2 498.5L1126.8 496.2L1127.6 497.2L1128.4 497L1129.2 495.9L1130 496L1130.8 494.2L1133.2 492.6L1135.6 490.4L1137.2 491.5L1138.8 489.4L1140.4 488.4L1142 486.2L1142.8 486.3L1144.4 485.3L1148.4 484.2L1150.8 484.4L1152.4 483.6L1154 481.1L1155.6 482.4L1156.4 481.8L1157.2 482.2L1158 482.2L1158.8 482.9L1159.6 482.4L1160.4 483.2L1161.2 482.3L1162 482.7L1163.6 481.5L1164.4 481.9L1165.2 481.8L1166 480.4L1166.8 481.3L1167.6 481.1L1168.4 482.2L1170 481.4L1171.6 482.2L1173.2 480.3L1174 480.9L1174.8 480.1L1176.4 480.7L1178 479.9L1179.6 478.5L1180.4 478.9L1182 478.2L1182.8 479.2L1184.4 477.7L1185.2 478.5L1186 478.5L1187.6 477L1188.4 547L1209.2 547L1212.4 545.3L1213.2 545.4L1214 544.5L1214.8 542.5L1215.6 543L1216.4 542.4L1217.2 542.4L1218 540.7L1218.8 541.3L1220.4 539.2L1221.2 539.2L1222 538.8L1222.8 538.1L1223.6 536.5L1224.4 535.9L1226 533.9L1228.4 533.1L1229.2 531.8L1230.8 530.1L1232.4 530.3L1233.2 529.5L1234 529.4L1235.6 530.2L1238.8 525.8L1240.4 527L1242 525L1242.8 525L1244.4 523.4L1246 523L1246.8 522.5L1248.4 520.8L1249.2 520.4L1250.8 520.3L1251.6 519.8L1252.4 518.7L1254 518L1255.6 516.3L1256.4 514.9L1258 514.4L1258.8 513.3L1260.4 515.9L1261.2 516.1L1263.6 514.4L1265.2 515.5L1266 515L1266.8 515L1268.4 515.9L1269.2 515L1271.6 514.4L1274 514.8L1274.8 514.5L1275.6 514.6L1276.4 513.9L1277.2 514.2L1279.6 512.9L1280.4 514.6L1282 513.2L1284.4 512L1285.2 512.2L1286 509.5L1287.6 508.5L1288.4 508.8L1289.2 508.4L1290 509.3L1290.8 508.4L1291.6 508.1L1293.2 506.2L1294 504.6L1294.8 504.1L1295.6 504.3L1296.4 503.9L1298 501.2L1298.8 502.3L1299.6 502.4L1300.4 502L1301.2 501.3L1304.4 496.4L1306 496.7L1306.8 497.2L1307.6 496.9L1309.2 495.1L1310 493.2L1311.6 493.2L1312.4 492.3L1313.2 493.1L1314.8 491L1315.6 491.3L1318 488.2L1320.4 487.3L1321.2 487.3L1322 487.8L1322.8 486.9" fill="none" stroke="#23486b" stroke-width="1.15" stroke-dasharray="10 8"/>
<path d="M474 645.5L486 662.4L492 662.4L493 662.2L531 629L579 629L580 628.7L609 587.3L610 587.9L662 662.4L669 662.2L707 632.2L755 632.2L756 631.9L785 594.4L786 595L838 662.4L845 662.2L883 633L931 633L932 632.8L961 596.3L962 596.8L1014 662.4L1021 662.2L1059 629.8L1107 629.8L1108 629.5L1137 589.1L1138 589.7L1190 662.4L1197 662.2L1235 632.7L1283 632.7L1284 632.5L1313 595.7L1314 596.2L1323 607.7" fill="none" stroke="#47535f" stroke-width="1.15" stroke-dasharray="10 8"/>
<path d="M474 599.4L474.8 598.3L476.4 599.8L479.6 597.9L482 598.4L483.6 598.2L484.4 662.4L505.2 662.4L506 661.9L507.6 660L508.4 660.4L510 659L511.6 656.7L512.4 656.2L513.2 657L514 656.2L514.8 656.7L515.6 655.2L517.2 654.8L518 653.2L518.8 654L519.6 653.4L520.4 653.5L522 653L522.8 651.9L523.6 651.4L525.2 649.7L526 650.2L526.8 648.7L527.6 648.4L528.4 648.9L529.2 648.6L530.8 646.1L531.6 646.1L532.4 645.5L535.6 642.5L537.2 642.7L538.8 640.9L541.2 639.3L542.8 637.5L544.4 636.3L546 636.4L546.8 637.5L549.2 635L550 635.7L551.6 635L552.4 635.8L554 633.6L554.8 634.3L555.6 633.7L556.4 632.5L557.2 633.2L559.6 630.6L561.2 632.5L562 632.3L562.8 631.5L563.6 632.3L565.2 633.1L566 632.1L566.8 632.3L569.2 630.6L570.8 630.3L571.6 629.7L572.4 629.7L573.2 630.6L574 630.9L574.8 630.3L577.2 630.2L578 628.2L578.8 628.3L580.4 627.4L581.2 627.4L582.8 625.8L583.6 625.4L584.4 626.1L586 624.2L586.8 624L587.6 625.4L588.4 624.8L589.2 624.9L591.6 623.6L594 620.2L594.8 620.4L595.6 620L596.4 618.6L597.2 618L599.6 617.9L606 611.7L608.4 611.1L610 611.5L611.6 610.5L612.4 609.5L613.2 609.3L614.8 608L616.4 607.1L618 607.4L619.6 606.2L620.4 606.1L621.2 606.5L622 605.9L622.8 604.6L623.6 606L626.8 603.7L627.6 604.5L628.4 603.5L630 604.2L630.8 603.8L632.4 603.7L634 604.6L634.8 604.4L635.6 604.8L636.4 603.7L637.2 603.5L638 602.5L640.4 605.5L641.2 605.1L642 605.4L642.8 604.5L644.4 605.2L648.4 602L650 602.8L650.8 601.1L653.2 600.8L656.4 601.2L657.2 602.2L658 600.7L658.8 600.6L659.6 601.2L660.4 662.4L681.2 662.4L683.6 660.1L684.4 660.5L685.2 660.2L686 658.6L688.4 656.2L690 655.8L690.8 654.5L692.4 654L694 652.9L694.8 653.3L695.6 651.6L696.4 651.4L697.2 649.9L698 649.4L698.8 649.8L699.6 648.5L701.2 648.6L702 648.2L702.8 649L703.6 648L706 647.1L709.2 642.4L711.6 641.2L713.2 641.2L714 640.2L714.8 640.3L715.6 640.9L717.2 639.4L718 637.8L719.6 637.8L722 635.7L724.4 634.4L725.2 633.2L726.8 631.7L727.6 631.8L728.4 632.6L730 632.1L731.6 630.6L733.2 630.7L734 631.3L735.6 630.9L737.2 631.6L738 630.5L738.8 631L739.6 629.8L741.2 628.3L742 629.1L742.8 628.8L743.6 629.7L744.4 629.9L745.2 630.7L746.8 630.7L748.4 628.9L750 629.2L752.4 630.7L754 629.5L754.8 629.4L755.6 628.4L757.2 628.2L758 627.6L758.8 626.2L759.6 625.9L760.4 624.7L761.2 624.3L762 624.4L762.8 624.8L764.4 623.8L766 621.3L766.8 621.7L768.4 619.3L769.2 620.5L770 620.2L770.8 619.1L771.6 619.2L772.4 618.7L775.6 614.4L776.4 614.4L777.2 612.4L778 611.7L778.8 610.1L779.6 610.2L781.2 609.2L782 609.1L786.8 605.9L787.6 604.7L789.2 603.9L790 603.6L790.8 604.5L792.4 604.4L793.2 604.9L794 604.8L794.8 605.4L795.6 604.6L796.4 604.5L797.2 603.3L798 602.8L798.8 603.3L800.4 602.8L803.6 603.1L804.4 602.5L805.2 602.4L806 601.3L806.8 602.4L808.4 602.2L810 600.1L812.4 598.2L813.2 598.1L816.4 599.1L817.2 598.9L819.6 599.1L821.2 600.2L823.6 598.3L826.8 597.9L828.4 596.3L829.2 596.2L830 596.9L830.8 597.2L831.6 596.9L832.4 596.1L834 596.2L835.6 595.7L836.4 662.4L857.2 662.4L858.8 661.5L859.6 661.6L860.4 660.2L862.8 659L865.2 659.6L866 658.4L866.8 658.3L867.6 657.3L869.2 657.3L871.6 655.4L872.4 653.5L873.2 652.7L874 652.4L874.8 651.2L875.6 650.8L876.4 649.6L877.2 650.1L878 648.8L879.6 648.8L880.4 648L882 648.3L883.6 646.9L884.4 647.1L885.2 645.6L887.6 644.2L889.2 642.1L890 642.8L892.4 640L893.2 639.5L894 639.6L896.4 637.7L897.2 637.7L898.8 636.6L899.6 636.8L900.4 635.3L901.2 634.8L902 634.9L903.6 633.7L904.4 633.6L905.2 633.9L906 633.7L907.6 634.7L910.8 629.7L911.6 629.2L913.2 630.7L914 630.2L915.6 630.9L917.2 630.6L918 631.4L919.6 630.7L920.4 631.8L922 630.2L922.8 630.6L923.6 629.4L925.2 629L926 628.2L926.8 630L927.6 629.8L929.2 628.3L931.6 628.4L933.2 628.1L934 628.8L936.4 627.4L939.6 624.5L943.6 621.7L944.4 620.1L945.2 619.5L946 619.3L946.8 619.9L947.6 620L948.4 620.9L950 617.6L951.6 616.7L953.2 614.7L954 615.2L955.6 614L956.4 614L958 611.3L962 609.6L962.8 608.4L965.2 607.4L966 606.6L967.6 606.8L968.4 606.1L969.2 604.8L970 605.1L971.6 604.6L972.4 603.7L973.2 603.4L974 604.1L974.8 602.9L975.6 603L977.2 603.7L978 603.4L978.8 602.6L980.4 603.1L982 601.2L982.8 601.6L984.4 601.3L986 602.1L986.8 601.3L988.4 602.8L990.8 600.6L993.2 601.5L994 601.5L994.8 602.7L995.6 602.6L996.4 601.2L997.2 601.6L998 600.2L998.8 599.9L999.6 600.9L1000.4 600L1001.2 600.4L1002 599.7L1004.4 599.5L1005.2 600L1006.8 599.9L1007.6 598.5L1008.4 598.7L1010 597.9L1010.8 597.1L1011.6 597.2L1012.4 662.4L1033.2 662.4L1034.8 661.2L1035.6 661.3L1036.4 659.2L1037.2 659.8L1039.6 658.2L1041.2 657.6L1042.8 655.4L1046 653.7L1048.4 651.5L1049.2 652.1L1050 651.5L1050.8 651.6L1051.6 650.6L1054 648.9L1055.6 646.5L1056.4 646.1L1057.2 646.7L1058 646.1L1058.8 644.4L1059.6 644.5L1060.4 644.2L1062 641.1L1063.6 640.4L1064.4 641.1L1066 639L1066.8 639.8L1070 638.5L1070.8 636.4L1071.6 636.7L1072.4 635.4L1075.6 633.1L1077.2 633.2L1078.8 631.1L1079.6 630.8L1081.2 632.5L1082.8 630.5L1084.4 630.2L1085.2 630.5L1087.6 629.4L1088.4 629.9L1089.2 629.8L1090.8 630.2L1092.4 632L1093.2 632.2L1094 631.6L1094.8 631.6L1095.6 630.9L1098 630.4L1098.8 629.3L1100.4 629.3L1102 627.7L1102.8 628.5L1103.6 627.6L1106 629.2L1106.8 628.1L1107.6 628.2L1109.2 626.4L1110.8 625.2L1112.4 622.3L1113.2 622.7L1116.4 621.7L1117.2 620.8L1118.8 621L1122 617.3L1123.6 617.4L1125.2 615.9L1126.8 613.7L1127.6 614.7L1128.4 614.4L1129.2 613.4L1130 613.5L1130.8 611.8L1133.2 610.3L1135.6 608.2L1137.2 609.2L1138.8 607.2L1140.4 606.2L1142 604.1L1142.8 604.3L1144.4 603.3L1148.4 602.2L1150.8 602.4L1152.4 601.6L1154 599.3L1155.6 600.5L1156.4 599.9L1157.2 600.3L1158 600.2L1158.8 601L1159.6 600.5L1160.4 601.2L1161.2 600.4L1162 600.7L1163.6 599.6L1164.4 600L1165.2 599.9L1166 598.5L1166.8 599.4L1167.6 599.2L1168.4 600.3L1170 599.6L1171.6 600.3L1173.2 598.5L1174 599L1174.8 598.3L1176.4 598.9L1178 598.1L1179.6 596.8L1180.4 597.1L1182 596.5L1182.8 597.4L1184.4 596L1185.2 596.8L1186 596.7L1187.6 595.3L1188.4 662.4L1209.2 662.4L1212.4 660.7L1213.2 660.8L1214 660L1214.8 658.1L1215.6 658.6L1216.4 658L1217.2 658L1218 656.4L1218.8 656.9L1220.4 654.9L1221.2 654.9L1222 654.5L1222.8 653.9L1223.6 652.3L1224.4 651.8L1226 649.8L1228.4 649.1L1229.2 647.8L1230.8 646.2L1232.4 646.4L1233.2 645.7L1234 645.5L1235.6 646.3L1238.8 642.1L1240.4 643.3L1242 641.3L1242.8 641.3L1244.4 639.7L1246.8 638.9L1248.4 637.2L1249.2 636.9L1250.8 636.8L1251.6 636.3L1252.4 635.3L1254 634.6L1255.6 633L1256.4 631.6L1258 631.2L1258.8 630.1L1260.4 632.6L1261.2 632.8L1263.6 631.1L1265.2 632.2L1266 631.7L1266.8 631.7L1268.4 632.5L1269.2 631.7L1271.6 631.1L1274 631.5L1275.6 631.3L1276.4 630.6L1277.2 631L1279.6 629.7L1280.4 631.4L1282 630L1284.4 628.9L1285.2 629L1286 626.5L1287.6 625.5L1288.4 625.7L1289.2 625.4L1290 626.2L1290.8 625.4L1291.6 625.1L1293.2 623.2L1294 621.8L1294.8 621.3L1295.6 621.4L1296.4 621.1L1298 618.5L1298.8 619.6L1299.6 619.7L1300.4 619.3L1301.2 618.6L1304.4 613.9L1306 614.2L1306.8 614.6L1307.6 614.4L1309.2 612.6L1310 610.9L1311.6 610.9L1312.4 610L1313.2 610.7L1314.8 608.7L1315.6 609L1318 606L1320.4 605.2L1321.2 605.2L1322 605.6L1322.8 604.8" fill="none" stroke="#139a90" stroke-width="1.15" stroke-dasharray="10 8"/>
<path d="M474 608.1L476 607.8L479 608.7L480 608.1L481 604.4L483 604.9L484 605.6L485 605.2L487 605.2L488 604.6L491 606.1L493 607.6L496 610.6L498 610.7L501 613.1L502 612.9L504 614.9L506 616.2L508 619.1L511 626.4L517 646L521 654.3L523 657L526 659.5L528 661.9L529 662.4L554 662.4L556 659.1L561 652.8L564 647.7L573 635.8L574 633.6L577 634.8L580 634.7L582 635.5L586 634.7L587 633.8L588 634.5L591 634.2L592 632.9L596 629.6L600 628.3L601 626.7L603 626.2L605 623.7L609 622.6L610 621.6L612 620.5L616 616.6L618 615.8L621 612.4L623 611.9L624 612.1L625 611.1L626 610.8L627 609.5L628 609.4L629 609.7L630 608.7L633 607.4L635 607L636 607.5L638 606.6L639 606.8L640 606L641 605.9L642 606.4L643 605.3L646 604.7L647 603.7L650 604.2L652 603.7L653 604L654 603.7L655 604L663 604.6L665 605.9L669 607.6L673 610.5L674 610.5L675 611L680 615.7L683 617.6L686 623.4L689 633.8L694 649.2L699 657.4L700 658.4L702 659.3L703 661.1L705 662.4L730 662.4L732 659.5L734 655.8L736 653.4L738 649.6L740 647.7L743 642.8L748 636.9L750 633.8L751 633.6L753 634.4L756 633.9L757 634.8L758 635L759 635L760 634L761 635L762 634.4L764 634.8L766 633.8L767 634.6L770 632.2L771 631L773 630L774 630L777 626.9L778 626.6L779 625.2L780 625L782 622.7L783 622.8L784 622.2L786 621.8L790 617.7L791 617.9L794 615.5L796 614.6L798 613.2L801 612.7L802 612L803 610.7L804 610.4L807 607.9L809 607.4L812 607.4L814 606.5L816 606.8L819 605.5L821 605L822 605.4L826 604.4L828 604.6L831 603.2L832 603.7L833 607.3L835 606.8L836 607.4L838 607.7L839 607.5L841 608.5L846 612L847 611.7L848 612L850 613.9L853 616.1L857 618.1L859 620.2L860 621.9L864 631.2L867 641.2L870 649.8L872 653.6L875 657.7L879 661.7L881 662.4L906 662.4L907 661.9L909 658.8L910 658L912 655.2L917 647L918 646.4L919 644.3L920 643.6L922 641.3L925 636.5L926 635.6L928 635.1L930 635.8L932 636L933 636.9L935 636.6L936 635.8L937 635.6L938 635.7L939 636.3L941 636.5L943 635.8L944 634.7L948 631.8L950 631L951 630.3L952 628.6L954 628.4L955 627.7L956 627.6L957 626.6L958 626.4L961 624.5L965 621.2L966 620.8L971 617.2L972 617L973 616.1L975 615.1L977 613.3L979 613.8L980 612.8L982 612L983 612L984 610.9L985 610.5L986 611L987 610.3L988 610.1L990 610.5L991 609.5L992 609.7L993 609.2L995 609.2L997 608L998 607.7L999 607.7L1002 606.7L1003 607L1005 606.9L1006 607.9L1008 607L1009 605.8L1012 605.8L1013 606.7L1016 607.6L1017 607.3L1018 608.2L1021 609.2L1024 612.6L1025 612.7L1026 613.5L1029 614L1030 615.5L1032 617.1L1033 618.6L1035 619.1L1039 628L1046 649.4L1047 650.8L1050 656.9L1053 658.9L1056 661.9L1057 662.4L1082 662.4L1083 661.5L1084 659.9L1085 657.3L1087 655.1L1088 653L1095 644.4L1096 643.6L1101 636.3L1103 635.4L1107 635.9L1108 635.6L1109 636.1L1110 635.4L1111 636L1113 635.6L1114 634.9L1115 634.8L1116 635.5L1117 635.2L1118 635.4L1120 634.1L1122 633.4L1124 631.8L1126 630.8L1127 629.8L1130 628.9L1131 627.1L1134 625.7L1138 622.4L1142 620.1L1144 618.4L1145 618.2L1146 617.3L1148 616.6L1149 615.2L1150 614.3L1151 614.7L1153 613.4L1155 612.8L1159 610.2L1161 610.7L1163 608.9L1164 609.4L1165 609.5L1166 608.3L1167 608.3L1169 607.4L1171 607.7L1172 606.8L1173 606.7L1175 607.1L1176 606.6L1177 606.9L1178 605.8L1180 605.6L1182 605.9L1183 606.8L1185 607L1188 607.9L1190 607L1192 607.2L1193 607.7L1194 608.9L1196 610.2L1199 611.2L1200 612.2L1203 613.4L1205 614.7L1206 616.5L1210 618.9L1211 620.2L1212 620.9L1215 627.6L1217 633.4L1221 647.3L1222 649.8L1227 657.7L1231 661.2L1233 662.4L1258 662.4L1260 660.1L1261 658L1266 651.2L1267 649.1L1271 643.5L1273 641.8L1278 635.4L1279 635.1L1280 635.4L1282 636.7L1284 637.1L1285 636L1287 635.2L1289 635.2L1290 635.9L1292 636.1L1293 635.5L1294 635.4L1295 634.5L1296 634.4L1298 632.6L1299 632.4L1301 630.7L1302 630.8L1305 628.8L1306 628.9L1307 628.1L1308 627.9L1309 626.3L1314 623.3L1316 621.5L1320 618.8L1323 617.2" fill="none" stroke="#fb5012" stroke-width="1.15" stroke-dasharray="10 8"/><path d="M474 471.3V547" stroke="#c4105f" stroke-width="1.3"/><path d="M474 587V662.4" stroke="#fb5012" stroke-width="1.3"/><path d="M468 547.0H474" stroke="#c4105f" stroke-width="1.2"/><path d="M468 532.4H474" stroke="#c4105f" stroke-width="1.2"/><path d="M468 517.9H474" stroke="#c4105f" stroke-width="1.2"/><path d="M468 503.3H474" stroke="#c4105f" stroke-width="1.2"/><path d="M468 488.7H474" stroke="#c4105f" stroke-width="1.2"/><path d="M468 471.2H474" stroke="#c4105f" stroke-width="1.2"/><path d="M468 662.4H474" stroke="#fb5012" stroke-width="1.2"/><path d="M468 648.4H474" stroke="#fb5012" stroke-width="1.2"/><path d="M468 634.5H474" stroke="#fb5012" stroke-width="1.2"/><path d="M468 620.5H474" stroke="#fb5012" stroke-width="1.2"/><path d="M468 606.5H474" stroke="#fb5012" stroke-width="1.2"/><path d="M468 586.7H474" stroke="#fb5012" stroke-width="1.2"/><path d="M468 474H474" stroke="#e9a3c2" stroke-width="1.2"/><path d="M468 592.5H474" stroke="#fcc0a8" stroke-width="1.2"/><path d="M474 666.6H1323" stroke="#333" stroke-width="1.2"/><path d="M474.0 667v5M527.3 667v5M592.5 667v5M657.7 667v5M722.9 667v5M788.1 667v5M853.3 667v5M918.5 667v5M983.7 667v5M1048.9 667v5M1114.1 667v5M1179.3 667v5M1244.5 667v5M1309.7 667v5M1323.0 667v5" stroke="#333" stroke-width="1.1"/></svg>
<span class="t" style="left:458.62px;top:537.70px;font-size:10.4px;color:#333;">0</span>
<span class="t" style="left:458.62px;top:653.10px;font-size:10.4px;color:#333;">0</span>
<span class="t" style="left:452.83px;top:523.12px;font-size:10.4px;color:#333;">10</span>
<span class="t" style="left:452.83px;top:639.13px;font-size:10.4px;color:#333;">10</span>
<span class="t" style="left:452.83px;top:508.55px;font-size:10.4px;color:#333;">20</span>
<span class="t" style="left:452.83px;top:625.16px;font-size:10.4px;color:#333;">20</span>
<span class="t" style="left:452.83px;top:493.97px;font-size:10.4px;color:#333;">30</span>
<span class="t" style="left:452.83px;top:611.19px;font-size:10.4px;color:#333;">30</span>
<span class="t" style="left:452.83px;top:479.40px;font-size:10.4px;color:#333;">40</span>
<span class="t" style="left:452.83px;top:597.22px;font-size:10.4px;color:#333;">40</span>
<span class="t" style="left:452.83px;top:465.00px;font-size:10.4px;color:#aaa;">50</span>
<span class="t" style="left:452.83px;top:461.50px;font-size:10.4px;color:#333;">52</span>
<span class="t" style="left:452.83px;top:583.00px;font-size:10.4px;color:#bbb;">50</span>
<span class="t" style="left:444.16px;top:577.00px;font-size:10.4px;color:#333;">54.2</span>
<span class="t" style="left:512.30px;top:667.50px;font-size:10.6px;color:#333;letter-spacing:-0.010px;">03 AM</span>
<span class="t" style="left:579.50px;top:667.50px;font-size:10.6px;color:#333;letter-spacing:-0.105px;">03:30</span>
<span class="t" style="left:642.70px;top:667.50px;font-size:10.6px;color:#333;letter-spacing:-0.010px;">04 AM</span>
<span class="t" style="left:709.90px;top:667.50px;font-size:10.6px;color:#333;letter-spacing:-0.105px;">04:30</span>
<span class="t" style="left:773.10px;top:667.50px;font-size:10.6px;color:#333;letter-spacing:-0.010px;">05 AM</span>
<span class="t" style="left:840.30px;top:667.50px;font-size:10.6px;color:#333;letter-spacing:-0.105px;">05:30</span>
<span class="t" style="left:903.50px;top:667.50px;font-size:10.6px;color:#333;letter-spacing:-0.010px;">06 AM</span>
<span class="t" style="left:970.70px;top:667.50px;font-size:10.6px;color:#333;letter-spacing:-0.105px;">06:30</span>
<span class="t" style="left:1033.90px;top:667.50px;font-size:10.6px;color:#333;letter-spacing:-0.010px;">07 AM</span>
<span class="t" style="left:1101.10px;top:667.50px;font-size:10.6px;color:#333;letter-spacing:-0.105px;">07:30</span>
<span class="t" style="left:1164.30px;top:667.50px;font-size:10.6px;color:#333;letter-spacing:-0.010px;">08 AM</span>
<span class="t" style="left:1231.50px;top:667.50px;font-size:10.6px;color:#333;letter-spacing:-0.105px;">08:30</span>
<span class="t" style="left:1294.70px;top:667.50px;font-size:10.6px;color:#333;letter-spacing:-0.010px;">09 AM</span>
<div class="b" style="left:473px;top:690.5px;width:32.5px;height:31px;background:#fff;border:1px solid #e0e0e0;border-radius:3px;box-sizing:border-box"></div>
<svg class="b" style="left:485px;top:701.5px;" width="8" height="9" viewBox="0 0 8 9"><path d="M6 1v7L1.5 4.5z" fill="#333"/></svg>
<div class="b" style="left:509.5px;top:690.5px;width:32.5px;height:31px;background:#fff;border:1px solid #e0e0e0;border-radius:3px;box-sizing:border-box"></div>
<svg class="b" style="left:517.8px;top:697.5px;" width="16" height="16" viewBox="0 0 16 16"><g fill="none" stroke="#777" stroke-width="1"><rect x="1.5" y="2.5" width="13" height="12" rx="1"/><path d="M1.5 6h13M4.5 0.8v3M11.5 0.8v3"/><rect x="9" y="9.5" width="3" height="3" fill="#777" stroke="none"/></g></svg>
<div class="b" style="left:546.5px;top:690.5px;width:33px;height:31px;background:#fff;border:1px solid #e0e0e0;border-radius:3px;box-sizing:border-box"></div>
<div class="b" style="left:546.5px;top:690.5px;width:33px;height:31px;border:1px solid #c8d0da;border-radius:3px;box-sizing:border-box"></div>
<svg class="b" style="left:555px;top:698px;" width="16" height="16" viewBox="0 0 16 16"><g fill="none" stroke="#888" stroke-width="1"><circle cx="8" cy="8" r="6.6"/><path d="M8 4.2V8.3H11.6"/></g></svg>
<div class="b" style="left:804px;top:690.5px;width:32px;height:31px;background:#fff;border:1px solid #e0e0e0;border-radius:3px;box-sizing:border-box"></div>
<svg class="b" style="left:811px;top:698px;" width="18" height="18" viewBox="0 0 18 18"><g fill="none" stroke="#555" stroke-width="1"><path d="M2 2v14.5h14"/><path d="M3 12c3-1 4-5 6.5-5.6s4-.4 6-2.2"/><path d="M3 14.8h3v-1.6h3.5v-1.7h3.2v-1.6h3"/></g></svg>
<div class="b" style="left:840px;top:690.5px;width:116px;height:31px;background:#f0f0f0;border:1px solid #e0e0e0;border-radius:3px;box-sizing:border-box"></div>
<div class="b" style="left:922px;top:691.5px;width:1px;height:29px;background:#e0e0e0"></div>
<span class="t" style="left:853.00px;top:696.50px;font-size:14px;color:#222;letter-spacing:-0.030px;">± 6 hours</span>
<svg style="position:absolute;left:931.50px;top:699.50px" width="15" height="15" viewBox="0 0 24 24" ><path fill="#111" d="M18 8h-1V6c0-2.76-2.24-5-5-5S7 3.24 7 6v2H6c-1.1 0-2 .9-2 2v10c0 1.1.9 2 2 2h12c1.1 0 2-.9 2-2V10c0-1.1-.9-2-2-2zm-6 9c-1.1 0-2-.9-2-2s.9-2 2-2 2 .9 2 2-.9 2-2 2zm3.1-9H8.9V6c0-1.71 1.39-3.1 3.1-3.1 1.71 0 3.1 1.39 3.1 3.1v2z"/></svg>
<div class="b" style="left:960px;top:690.5px;width:32px;height:31px;background:#fff;border:1px solid #e0e0e0;border-radius:3px;box-sizing:border-box"></div>
<svg style="position:absolute;left:967.75px;top:698.75px" width="16.5" height="16.5" viewBox="0 0 24 24" ><path fill="#333" d="M13 3c-4.97 0-9 4.03-9 9H1l3.89 3.89.07.14L9 12H6c0-3.87 3.13-7 7-7s7 3.13 7 7-3.13 7-7 7c-1.93 0-3.68-.79-4.94-2.06l-1.42 1.42C8.27 19.99 10.51 21 13 21c4.97 0 9-4.03 9-9s-4.03-9-9-9zm-1 5v5l4.28 2.54.72-1.21-3.5-2.08V8H12z"/></svg>
<div class="b" style="left:1221.5px;top:690.5px;width:32px;height:31px;background:#fff;border:1px solid #e0e0e0;border-radius:3px;box-sizing:border-box"></div>
<svg class="b" style="left:1229.5px;top:698px;" width="16" height="16" viewBox="0 0 16 16"><g fill="none" stroke="#777" stroke-width="1"><rect x="1.5" y="2.5" width="13" height="12" rx="1"/><path d="M1.5 6h13M4.5 0.8v3M11.5 0.8v3"/><rect x="9" y="9.5" width="3" height="3" fill="#777" stroke="none"/></g></svg>
<div class="b" style="left:1258.5px;top:690.5px;width:32px;height:31px;background:#fff;border:1px solid #e0e0e0;border-radius:3px;box-sizing:border-box"></div>
<div class="b" style="left:1258.5px;top:690.5px;width:32px;height:31px;border:1px solid #c8d0da;border-radius:3px;box-sizing:border-box"></div>
<svg class="b" style="left:1266.5px;top:698.5px;" width="16" height="16" viewBox="0 0 16 16"><g fill="none" stroke="#888" stroke-width="1"><circle cx="8" cy="8" r="6.6"/><path d="M8 4.2V8.3H11.6"/></g></svg>
<div class="b" style="left:1290px;top:690.5px;width:32px;height:31px;background:#fff;border:1px solid #e0e0e0;border-radius:3px;box-sizing:border-box"></div>
<svg class="b" style="left:1302px;top:702px;" width="8" height="9" viewBox="0 0 8 9"><path d="M2 1v7L6.5 4.5z" fill="#333"/></svg>
<div class="b" style="left:473.5px;top:729px;width:850px;height:32px;background:#f1f1f1"></div>
<svg class="b" style="left:0;top:0" width="1380" height="900" viewBox="0 0 1380 900"><g opacity="0.62"><path d="M474 738.7L474.5 737.7L475 737.6L475.5 736.4L476.5 735.8L477 735.1L477.5 735.3L479 734.3L479.5 734.5L480 734.4L481.5 735.2L484.5 740.6L486.5 754.4L488 759L492 759L493 756.6L495 748.8L496 747L497 747.5L498 747L499 746L502 740.7L502.5 740.5L504 738.3L504.5 736.7L505 737L505.5 736L506 735.8L506.5 735.1L507 735.7L507.5 734.6L509 734.7L509.5 734.4L510 734.9L510.5 734.8L511.5 735.7L512 737.6L512.5 737.5L514 741.4L515.5 752.9L516.5 757L517.5 759L521.5 759L525 747.1L526.5 747.4L528 746.6L529 744.4L530 743.4L530.5 741.8L531.5 740.8L532.5 738.9L535 735.6L536 735.8L536.5 734.9L538 734.2L539.5 734.7L540.5 735.4L543 740.3L545.5 756.2L546.5 758.5L547 759L551 758.8L553 751.1L554.5 747.3L555 747.1L555.5 747.7L556 747.1L556.5 747.3L557 746.8L558.5 745L562 738.5L564 735.9L565 735.8L567 734.2L568 734.7L569 734.6L570.5 736.5L571 737.9L571.5 738.3L572.5 740.3L574.5 754.2L576 758.9L576.5 759L580 759L580.5 758.4L583 749.1L584 746.6L584.5 747.3L585 746.9L585.5 747.8L586 747.7L588.5 744L590.5 740L593 736.5L594 735.4L594.5 735.7L595 734.8L595.5 735.1L596 734.3L596.5 734.7L597 734.1L597.5 734.5L598.5 734.6L600 737.4L600.5 737.4L602 741.2L603.5 752.5L605 758.5L605.5 759L609.5 759L613 747.1L614 747.7L614.5 747.2L615.5 747.2L616.5 746L620.5 738.6L621 738.4L621.5 737.4L623 735.7L623.5 735.9L624 735.2L624.5 735.3L625.5 734.4L626.5 734.3L628.5 735.4L629.5 737.4L630 737.8L631 740.2L631.5 742L633.5 756L634.5 758.7L635 759L639 759L642 747.9L642.5 747L643 747.7L643.5 747.2L644.5 747.3L645.5 746.6L647.5 742.7L648.5 741.8L649 740.4L652 736L653.5 735.4L655 734.4L655.5 734.6L656 734.1L656.5 734.5L657.5 734.6L658.5 737L659 737.1L660.5 740.4L662.5 754.2L663.5 758.1L664.5 759L668 759L668.5 758.2L671 749.2L672 746.8L673 747.7L674 747L674.5 747.1L676.5 743.4L681.5 735.9L682 735.8L683.5 734.7L684.5 734.9L685 734.4L687 734.9L689 739.1L690 740.5L691.5 752.3L692.5 756.7L693.5 759L697.5 759L698 758.1L701 746.7L701.5 746.6L702 747.7L702.5 747.4L703 747.7L704.5 746.1L706 743.2L707.5 741.4L709.5 737.4L710 737.3L711 735.8L711.5 735.8L713.5 734.2L714 734.2L714.5 734.9L715.5 734.2L716.5 735.2L718.5 738.6L719.5 741.6L721.5 755.4L722 757.4L723 759L727 759L730.5 747.2L731 746.9L733 747.2L735 744.3L736 741.9L737 740.9L738 738.5L740 736.2L742 735.4L743 734.6L744 734.8L745 734.3L748 738.9L748.5 740.5L750.5 753.9L752 758.5L752.5 759L756 759L756.5 758.6L759.5 747.8L760 747.2L760.5 747.5L762.5 747.1L764.5 744L765 742.5L767.5 738.6L768 738.4L769 736.5L769.5 736.3L770 735.6L770.5 735.4L771 735.7L772 734.7L773 734.4L773.5 734.8L774.5 734.7L775 734.9L778 740.6L780 755L781.5 759L785.5 759L789 747.5L790.5 747.5L792 746.5L794 744L797 738.3L798.5 736.4L799 736.5L800 735.7L800.5 734.8L801 734.9L802 734.3L802.5 734.8L803 734.2L803.5 734.8L804 734.8L805 736L805.5 737.5L806 737.7L807 739.8L808 744.6L809 752.8L810 756.8L811 759L815 759L818.5 747.1L819 747.5L820 746.9L821 747.3L826 739L828 736.2L830 734.9L831 734.5L831.5 734.8L832 734.4L833.5 735L834.5 735.8L836.5 740.2L838.5 753.6L840 758.7L840.5 759L844.5 758.8L847.5 747.8L848 747L848.5 747.6L849.5 747.3L850.5 747.6L854 740.9L857 736.6L857.5 736.6L858 735.7L859 735.4L859.5 734.7L861 734.6L861.5 734.1L863.5 735.5L865.5 739.8L866 740.3L868 754.4L869.5 758.9L870 759L873.5 759L874 758.5L877 747.7L877.5 747.3L879.5 747.6L881 745.3L882 743.1L882.5 743L883 742.2L884.5 739L885 738.8L886.5 736.3L888.5 735.3L889.5 734.3L892 734.5L893.5 736.8L894 737.1L895 739.4L896 744.1L897 752.8L898 756.9L899 759L903 759L906.5 746.6L908 747.3L908.5 746.8L909 747.4L910 745.7L910.5 745.4L911.5 743L913 740.6L916 736.3L918 734.9L919 734.5L920.5 734.8L921.5 734.6L924.5 739.9L925 741.8L926.5 753.9L927.5 757.6L928 758.7L928.5 759L932.5 759L934.5 751.3L936 747.4L936.5 746.7L937 747.5L937.5 747.5L938 746.7L938.5 747L940.5 744.2L941.5 741.8L943.5 739.1L944 737.8L945 737L945.5 736L946.5 735.7L948 734.4L949 735.1L949.5 734L950 734.7L951 734.8L953.5 739.6L954 739.9L956 754.4L957.5 758.8L958 759L961.5 759L962 758.4L965 747.5L965.5 747.1L966.5 747.7L967 746.9L967.5 747.2L968 746.9L973.5 737.5L974 737.4L975 735.7L976 735.8L976.5 735.5L977 734.6L977.5 734.8L978.5 734.4L979.5 735.1L980.5 735.2L982.5 738.5L983.5 741.3L985.5 755.2L987 759L991 759L991.5 758.1L994.5 747.4L997 747.4L999 743.9L999.5 743.7L1000.5 741.4L1001 741.3L1002 739.2L1004 736.4L1004.5 736.1L1005 736.2L1005.5 735.2L1006.5 735L1007.5 734L1008 734.9L1009.5 734.7L1012.5 739.4L1014.5 753.2L1015.5 757.1L1016.5 759L1020.5 759L1024 746.9L1024.5 747.6L1026 747.4L1028 745L1030.5 740L1032.5 736.9L1033 737L1034 735.8L1035.5 735.2L1036.5 734.1L1037.5 734.6L1038 734.3L1039 735L1040 737.1L1040.5 736.9L1042 740.1L1044 753.7L1045.5 759L1046 759L1049.5 759L1050 758.4L1053 747.9L1053.5 747.1L1054 747.5L1054.5 747.1L1055.5 747.5L1056 747.3L1058 743.6L1059 742.5L1061 738.2L1061.5 738.1L1063 736L1065.5 734.7L1066 734L1066.5 734.5L1067 734.3L1067.5 735.3L1068 734.9L1069 735.9L1071.5 740.3L1073 751.9L1074 756.8L1075 759L1079 759L1082.5 747.3L1083 747.1L1083.5 747.8L1084.5 747.5L1085 746.9L1085.5 746.9L1086 745.3L1086.5 745.4L1087 744.2L1087.5 743.9L1088.5 741.5L1089.5 740.4L1091.5 736.9L1092 736.8L1092.5 735.5L1093.5 736L1094 734.7L1094.5 735L1095 734.4L1095.5 735L1096 734.7L1096.5 735L1097 734.5L1097.5 734.8L1099 736.7L1100 738.6L1101.5 744.8L1102.5 752.9L1103.5 757.1L1104.5 759L1108.5 759L1112 747.5L1113 747.2L1113.5 747.8L1114 747L1114.5 747.2L1116 744.7L1117 743.7L1119 739.7L1121.5 736.2L1123 735.5L1123.5 734.9L1124 735L1124.5 734.5L1125.5 734.8L1127 734.5L1129 738.1L1129.5 739.8L1130 740.1L1132.5 756.1L1134 759L1138 758.8L1141.5 746.6L1142.5 747.8L1144.5 746.7L1146.5 742.6L1148.5 739.7L1149 738.3L1151.5 735.7L1152 736.1L1152.5 735.1L1153 735.3L1154 734.4L1154.5 734.7L1156 734.3L1157 735.4L1159.5 740.4L1161.5 754.6L1163 758.9L1163.5 759L1167 759L1167.5 758.3L1170.5 747.1L1172 747.4L1172.5 747.1L1173 747.3L1173.5 746.9L1175.5 743.8L1176.5 741.5L1177 741.2L1177.5 740L1180 736.4L1180.5 736.4L1182 735.3L1182.5 734.4L1183.5 734.7L1184 734.2L1184.5 735.2L1185 735.1L1185.5 734.1L1189 741L1191 755.4L1192 758.3L1192.5 759L1196.5 759L1200 747.4L1200.5 747.4L1201 746.9L1202 747.5L1202.5 746.7L1203 746.6L1204.5 743.7L1206.5 741.1L1208 738L1208.5 737.9L1209.5 736.1L1210 735.7L1210.5 735.8L1211 735.1L1213 734.3L1213.5 734.6L1214.5 734.4L1215 734.7L1216 736.1L1218 740.1L1218.5 741.9L1220 753.4L1221 757L1222 759L1226 759L1229 748L1229.5 747.2L1230.5 747.6L1232.5 746.4L1233.5 745.2L1234 743.5L1236 741.1L1236.5 739.5L1238.5 736.5L1239.5 735.5L1240 735.9L1240.5 735L1241.5 735L1242 734.6L1242.5 734.8L1243 734.5L1244.5 735L1247.5 739.9L1249.5 754.4L1251 758.8L1251.5 759L1255.5 758.8L1258.5 747.7L1259.5 747.3L1260.5 747.7L1261.5 747.1L1265.5 740.2L1266.5 739.3L1267 737.7L1268.5 736L1271 734.5L1273.5 734.7L1274.5 735.9L1277 740.6L1278.5 752.1L1279.5 756.6L1280.5 759L1284.5 759L1285 758.1L1288 747.2L1288.5 747.1L1289 747.6L1290 747.3L1290.5 747.5L1294.5 741.1L1295 739.6L1295.5 738.9L1296 738.7L1298 735.8L1298.5 735.7L1299 736.1L1299.5 734.5L1300 734.6L1300.5 734.3L1301 734.7L1302 734.3L1302.5 734.8L1303 734.5L1305 737.6L1305.5 739.3L1306 739.6L1308 753.3L1309 756.9L1310 759L1314 759L1315.5 752.9L1317.5 747.1L1318 747.6L1318.5 747.4L1319 747.7L1320 747.2L1323 742.1" fill="none" stroke="#fb5012" stroke-width="1.3"/><path d="M474 741.4L480 759L481 759L487.5 747.6L495.5 747.6L500.5 733.4L509 758L509.5 759L510.5 759L517 747.6L525 747.6L530 733.4L538.5 758.5L539 759L539.5 759L540 758.7L546 747.9L546.5 747.6L554 747.6L554.5 747.2L559 734L559.5 733.9L568 758.9L569 759L575.5 747.7L583.5 747.6L588.5 733.6L589 734.3L597 757.9L597.5 759L598.5 759L605 747.6L613 747.6L618 733.3L626.5 758.3L627 759L627.5 759L628 758.8L634 748L634.5 747.6L642 747.6L642.5 747.3L647 734.2L647.5 733.7L656 758.7L657 759L657.5 758.6L663.5 747.8L671.5 747.6L672 746.9L676.5 733.7L677 734.2L685.5 759L686.5 759L693 747.6L701 747.6L706 733.3L714.5 758.2L715 759L715.5 759L716 758.9L722.5 747.6L730.5 747.5L735 734.3L735.5 733.6L744 758.6L745 759L745.5 758.6L751.5 747.8L752 747.6L759.5 747.6L760 747L764.5 733.9L765 734L773.5 759L774.5 759L781 747.6L789 747.6L794 733.4L802.5 758L803 759L804 759L810.5 747.6L818.5 747.6L823.5 733.4L832 758.5L832.5 759L833 759L833.5 758.7L839.5 747.9L840 747.6L847.5 747.6L848 747.2L852.5 734L853 733.9L861.5 758.9L862.5 759L869 747.7L877 747.6L882 733.6L882.5 734.3L890.5 757.9L891 759L892 759L898.5 747.6L906.5 747.6L911.5 733.3L920 758.3L920.5 759L921 759L921.5 758.8L927.5 748L928 747.6L935.5 747.6L936 747.3L940.5 734.2L941 733.7L949.5 758.7L950.5 759L951 758.6L957 747.8L965 747.6L965.5 746.9L970 733.7L970.5 734.2L979 759L980 759L986.5 747.6L994.5 747.6L999.5 733.3L1008 758.2L1008.5 759L1009 759L1009.5 758.9L1016 747.6L1024 747.5L1028.5 734.3L1029 733.6L1037.5 758.6L1038.5 759L1039 758.6L1045 747.8L1045.5 747.6L1053 747.6L1053.5 747L1058 733.9L1058.5 734L1067 759L1068 759L1074.5 747.6L1082.5 747.6L1087.5 733.4L1096 758L1096.5 759L1097.5 759L1104 747.6L1112 747.6L1117 733.4L1125.5 758.5L1126 759L1126.5 759L1127 758.7L1133 747.9L1133.5 747.6L1141 747.6L1141.5 747.2L1146 734L1146.5 733.9L1155 758.9L1156 759L1162.5 747.7L1170.5 747.6L1175.5 733.6L1176 734.3L1184 757.9L1184.5 759L1185.5 759L1192 747.6L1200 747.6L1205 733.3L1213.5 758.3L1214 759L1214.5 759L1215 758.8L1221 748L1221.5 747.6L1229 747.6L1229.5 747.3L1234 734.2L1234.5 733.7L1243 758.7L1244 759L1244.5 758.6L1250.5 747.8L1258.5 747.6L1259 746.9L1263.5 733.7L1264 734.2L1272.5 759L1273.5 759L1280 747.6L1288 747.6L1293 733.3L1301.5 758.2L1302 759L1302.5 759L1303 758.9L1309.5 747.6L1317.5 747.5L1322 734.3L1322.5 733.6L1323 735" fill="none" stroke="#5a5670" stroke-width="1.3"/><path d="M474 737.8L474.5 737.6L475 736.5L475.5 737.8L476 736.6L476.5 737.5L477 735.5L477.5 735.8L478 735.1L478.5 735.8L479 735.2L479.5 735.4L480 759L483.5 759L484 758.7L484.5 757.5L485 757.5L486 755.1L487 754.2L487.5 752.2L488 752.5L488.5 752.2L490.5 749.2L491 747.3L491.5 748L492.5 747.3L493 746.5L493.5 747.5L494 747.6L494.5 745.8L495 747.7L496.5 744.4L497 745.4L497.5 745.4L498 743.1L498.5 743L499.5 741L501 739.3L502 736.9L502.5 737.5L503 737.6L503.5 736.8L504 736.7L504.5 737.3L505.5 735.9L506 736.3L506.5 736.2L507 735.8L508 735.5L508.5 736.3L509 734.3L509.5 759L513 758.8L513.5 758L514 757.8L514.5 756.1L515.5 755.2L516.5 752.6L517 752.8L518 750.5L518.5 751.5L519.5 749.1L520 749.7L521 747.3L522 747.3L522.5 748.5L523 746.1L523.5 746.9L524.5 746.7L525 747.7L526 746L526.5 743.6L527 744.4L529.5 740.2L530.5 740.5L531 738.1L532 736.8L533 737.4L533.5 736.7L534 737.5L535 736.9L536 734.9L536.5 735.4L537 735.1L538.5 735.3L539 759L542 759L542.5 758.7L543 759L544 757.1L544.5 755.3L546 752.8L546.5 753L547.5 750.4L548 750.7L548.5 749.4L549.5 749.4L550 748L550.5 748.3L551 747.7L551.5 747.8L552 747.3L552.5 748.4L553 746.1L554 747.1L554.5 747.1L555.5 744.8L556.5 743.5L557 744L558 740.9L559 740.9L560 739.4L561 737L561.5 737.5L562 736.6L563 737.6L563.5 737L564 735.3L564.5 736.7L565 736.7L565.5 735.3L566 735.7L566.5 735.6L567 734.6L567.5 736.2L568 759L571.5 759L572 758.1L572.5 758.2L573.5 756.6L574 754.9L575 755L576 751.8L576.5 751.4L577 751.8L577.5 749.2L578 750L578.5 749.7L580 747L581 747.8L582 748L582.5 747.2L583 747.3L583.5 746.7L584 747L584.5 745.9L587 742.7L587.5 741L588 740.6L588.5 740.6L590 737L590.5 737.6L591.5 737.5L592.5 736.5L593.5 736.6L594 736L595 735.8L595.5 736.2L596 735.4L596.5 735.9L597 735.6L597.5 759L601 758.8L602 756.3L603 756L604.5 753.1L605 752.5L605.5 752.5L608 749L608.5 749.3L609.5 747.6L610 748.2L610.5 747.2L611 748.1L612 746.9L612.5 747.5L613 747.2L613.5 744.8L614 745.8L616.5 741.3L618.5 739.7L620 737.1L620.5 737.2L621.5 736.4L622 736.8L622.5 735.4L623 736.7L624 736.3L624.5 735.2L625.5 735.9L626.5 734.5L627 759L630 759L630.5 758.7L631.5 756.6L632.5 755.3L633 755.5L634 753.5L634.5 753.9L635 751.6L636 751L636.5 748.9L637 749.3L637.5 749L638 748.1L639 747.3L640 747.9L641.5 747.6L642 746.9L642.5 746.9L645 743.2L645.5 741.7L646 742.1L646.5 740.8L647 740.2L647.5 740.2L648 738.4L648.5 737.9L649 738.7L649.5 737.1L650 736.7L650.5 737.5L651 736L652 737.1L652.5 736L654 736.9L654.5 735.5L655 735.8L655.5 734.9L656 754.9L656.5 759L659.5 759L660 758.7L660.5 758L661 756.1L661.5 755.4L663 754.7L664 751.8L665.5 751.2L666 749.8L666.5 749.6L667.5 747.6L668 747.3L669 747.8L670 746.3L671 747.7L671.5 746L672 746.3L672.5 743.9L673 745.3L674.5 742.6L676 741.7L676.5 740L677.5 738.8L678 736.7L678.5 737.1L679 736.8L679.5 737.4L680 736.8L681 736.7L681.5 736.1L683 735.8L683.5 736.5L684.5 735.2L685 735.4L685.5 759L688.5 759L689.5 758.6L690 757.3L690.5 757.3L691 756.4L691.5 754.9L692 754.8L692.5 753.2L693 752.9L694 751.2L694.5 752.2L695 750.4L695.5 750.3L697 747.3L697.5 747.8L698 746.8L698.5 747.8L700 746.6L701 747.1L701.5 746.4L702 746.2L702.5 744.1L704.5 742.2L705.5 740.1L706 740.2L706.5 739.5L707 737.5L707.5 736.8L708 737.3L709 737L709.5 736.2L710 737L711.5 735.5L712 736.2L712.5 735.7L713 735.9L714 735.7L714.5 735.1L715 759L718 759L718.5 758.2L719 758.4L721 754.8L721.5 755.1L722 753.5L722.5 753.5L723 751.9L723.5 752.1L724 751.4L725 749.5L725.5 749.3L726 748L727 747.7L728 747L728.5 747.7L729.5 747.1L730 748L730.5 746.5L731 746.4L733.5 742.2L734 742.1L734.5 740.6L735.5 739.7L736.5 737.7L737.5 737.1L738 737.2L739 735.7L740 737.4L740.5 735.5L741 736.5L742 737L742.5 735.4L743.5 734.8L744 735.3L744.5 759L747.5 759L748 757.7L748.5 757.8L749 757.4L751 754L751.5 754.6L752 752L752.5 752.4L753 751L753.5 751.1L754 749.9L754.5 749.3L755 749.3L755.5 747.8L756 747.6L757 748.7L757.5 747.8L759 747L759.5 746L760.5 745.9L761 745L761.5 745.9L762 744.1L764.5 739.6L765 739.7L765.5 738.5L767 737.2L767.5 737.3L768.5 736.9L769 736.1L769.5 736.5L770 736.1L770.5 734.8L771 735.6L772 735L772.5 735.9L773 734.9L773.5 759L777 759L779.5 754.8L780 755L780.5 753.8L781 753.6L781.5 751.9L782.5 751.8L783 750.4L783.5 750.3L784 748.5L784.5 748.5L785 749.1L786 747.2L787 747.7L787.5 746.9L788 746.8L788.5 746.2L789 746.4L790 746L792 742.5L792.5 742.6L793 741L796 737.1L796.5 737.5L797 737L797.5 737.4L798 736.6L798.5 736.6L799 737.1L799.5 735.6L800 736.5L800.5 735.8L801 736.4L801.5 736.4L802 735L802.5 735.9L803 759L806.5 758.8L807 759L807.5 757.5L808 757.4L809 754.3L809.5 754.7L810.5 752.8L811.5 751.7L812 750.2L812.5 750.3L813.5 748.7L814 748.8L814.5 747.8L815 747.8L816.5 746.6L817 748.2L817.5 747.4L818.5 747.2L819 745.9L820 744.6L820.5 744.8L821.5 742.5L824 739.4L824.5 737.3L825 738L825.5 737.1L826.5 736.6L827 737.2L827.5 737.2L828 736.3L828.5 736.2L829 737.4L829.5 737.4L830 736.1L831.5 735.1L832 735.6L832.5 759L835.5 759L836 757.2L836.5 757.4L837 756.5L837.5 756.3L838 756.8L838.5 754.9L839 754.6L840.5 751.8L841 751.9L844 746.9L844.5 747.9L845 747.2L845.5 748L847 746.7L847.5 747.4L849 744.5L850.5 743.2L851 742.1L852.5 741.1L854.5 737.5L855 738.1L856.5 736.4L857 736.7L857.5 736.4L858 736.5L858.5 735.7L859 736.8L859.5 735.7L860 736.8L860.5 734.5L861 734.8L861.5 759L865.5 759L866 757.9L867 757.1L868.5 753.5L869 753.6L869.5 753.2L871 750.1L871.5 749.5L872 749.9L873 748.1L873.5 748.3L874 747.3L874.5 747.7L876 747.1L876.5 747.8L877 745.8L877.5 746.7L878.5 745.8L879 744.3L879.5 744.2L880.5 741.5L881.5 740.9L882 739.3L882.5 739.3L883.5 737.7L884 737.8L884.5 737.1L885 737.8L885.5 737.9L886 736.2L886.5 737L887.5 736.1L888.5 736.5L889 735.8L889.5 736L890 735.1L890.5 735.4L891 759L894 759L895 758.3L895.5 757L896 757.5L897.5 753.9L898.5 753.5L899 751.8L900 750.5L900.5 751.2L901 749.7L901.5 749.4L902.5 747.7L903 747.4L903.5 747.9L904 747.7L904.5 746.7L905.5 747.2L906 746.7L907 746.8L908.5 743.7L909 743.9L910 742.2L910.5 741.9L911 739.9L911.5 739.5L912 738.3L912.5 739.4L913.5 736.5L914 738L914.5 738L915.5 735.9L916.5 736.9L917 735.9L918.5 735.5L920 734.4L920.5 759L923.5 759L924 758.1L925 758.2L925.5 756.2L926 756.6L926.5 753.9L927 755L927.5 754.6L928 753.9L928.5 752L929.5 750.5L930.5 749.8L931 748.3L932 748.7L932.5 747.3L933 747.4L933.5 748L934.5 746.7L935 746.6L935.5 747.5L936 746.1L936.5 747.3L937.5 744.3L938.5 743L939 743.2L940 740.7L940.5 740.7L941.5 738.8L942 739.2L943 737.1L943.5 738L944.5 736.7L945 737.4L946 735.9L946.5 735.8L947 736.5L947.5 735.3L948.5 735.4L949 734.5L949.5 754.7L950 759L953 759L955 755.6L956 755.8L956.5 753.3L958 752L959 750.5L959.5 750.4L960 748.8L960.5 748.4L961 748.5L961.5 747.7L962 747.9L962.5 747.6L963 747.2L963.5 745.9L964 747.7L964.5 746.8L965.5 746.2L966 745L966.5 745.2L967.5 743.6L968 743.6L968.5 741.6L969 742.1L970 739.4L970.5 739.7L972 736.7L973 738.1L973.5 736.4L974 736.3L974.5 737.7L975 737.9L975.5 734.9L976.5 737L977 735.2L977.5 734.8L978 736.6L978.5 734.5L979 759L982.5 758.9L983 757.8L984 757.1L984.5 755.9L985 755.8L985.5 754.6L986.5 753.4L989 748.8L989.5 749.6L990 748.2L991 747.2L991.5 748.8L992 747.8L993 747.1L993.5 745.9L994 746.8L994.5 746.9L995.5 745L996 744.9L996.5 743.2L997 744L997.5 742L999 739.7L999.5 739.9L1000.5 738.2L1002 737.7L1002.5 736.7L1003 738.1L1004.5 735.7L1005 736.3L1005.5 735.4L1007 736.3L1008 734.3L1008.5 759L1011.5 759L1012.5 758.5L1013 757L1013.5 757.3L1014 756.4L1014.5 754.6L1017.5 751L1018 749.6L1018.5 750.1L1019 749.7L1020 747.5L1021 748.8L1021.5 746L1022 747.8L1023 746.8L1024.5 746.8L1025 745L1025.5 745.1L1026.5 742.7L1027.5 742.6L1028.5 740L1029 739.2L1029.5 739.5L1030 738.1L1031 736.9L1032.5 737L1033.5 736.1L1034 736.4L1034.5 736.3L1035 735.1L1036 736L1036.5 735.1L1037 735.9L1037.5 735.7L1038 759L1041 759L1043 756L1043.5 756L1044 754.7L1044.5 754.4L1045.5 752.7L1046.5 752L1047 750.5L1048 749L1048.5 749.1L1049 747.9L1050 748L1051 747.6L1051.5 748L1053 746.6L1053.5 746.6L1054 745.1L1055.5 743.5L1056 743.6L1057 740.8L1057.5 741.3L1058 739.4L1060 737.5L1060.5 737.8L1061 737.2L1062 736.8L1062.5 737.3L1063 736L1063.5 736.6L1064.5 735.6L1065 735.9L1065.5 734.3L1066 735.3L1066.5 735L1067 759L1070.5 759L1071.5 757.4L1072 757.5L1072.5 755.8L1073.5 755L1074.5 752.8L1076 752.2L1077 749.5L1077.5 748.7L1078 749L1079 747.3L1079.5 748.1L1080.5 747.9L1081 747L1081.5 748.1L1082 747L1083 746.3L1083.5 745.1L1085.5 743.2L1086 741.7L1087 740.5L1087.5 740.3L1088 738.5L1089 737.3L1089.5 738.1L1090 736L1091 737.5L1091.5 736.3L1092.5 736.8L1093 736.6L1093.5 735.8L1094.5 735.6L1095.5 735.9L1096 735L1096.5 759L1100 758.8L1101 757.5L1102 755.1L1102.5 755.5L1103 754L1103.5 754.2L1104 752.6L1105.5 750.8L1106 750.6L1108 746.8L1108.5 748.3L1109.5 747.5L1110.5 747.5L1111.5 747L1112 746.1L1113 745.7L1113.5 744.5L1114 745.3L1115.5 741.6L1116 742.2L1116.5 740.4L1117 740.2L1117.5 738.4L1118 737.8L1118.5 737.9L1119 737.2L1119.5 737.9L1120 737L1121 736.2L1122 737.5L1122.5 735.8L1123 736.6L1124 735.8L1124.5 734.6L1125 735.3L1125.5 734.5L1126 759L1129 759L1129.5 758.5L1130 758.6L1131 756.2L1132 755.8L1132.5 752.8L1133 752.5L1133.5 752.7L1135 750.4L1135.5 750.8L1137 747.4L1138.5 747.6L1139.5 746.5L1140 746.9L1141 746.3L1141.5 746.9L1142 745.3L1142.5 745.5L1143 744.9L1143.5 742.9L1144 743.8L1145 741.1L1146.5 739.9L1147.5 737.7L1149 737.9L1149.5 737L1150.5 736.3L1151 736.7L1151.5 735.9L1152 736.7L1152.5 736.8L1153 735.3L1153.5 735.8L1154 735.8L1154.5 735.3L1155 759L1159 759L1162.5 753.1L1163 753.5L1163.5 751.9L1164.5 751.1L1166.5 747L1167 748L1168 746.6L1168.5 747.7L1169 747.7L1170 747.3L1171.5 746L1172.5 744.2L1173 744.1L1174 741.9L1175.5 740.6L1176.5 739.2L1177 737.5L1178.5 737L1179 737.2L1179.5 736.7L1180.5 736.4L1181.5 736.6L1182 735.8L1182.5 735.5L1183 736.1L1184 735.2L1184.5 759L1187.5 759L1188 758.8L1188.5 757.9L1189 758.3L1191 755.1L1191.5 753.4L1192 753.7L1192.5 751.4L1193 751.6L1195.5 747.8L1197 747.5L1197.5 747L1198.5 747.5L1199 746.3L1199.5 747.2L1200.5 745.1L1201 745.8L1202.5 743.7L1203 742.2L1204 741.1L1204.5 741.3L1205 739.4L1206 739.2L1206.5 738L1207 738.3L1207.5 736.5L1208 737.9L1208.5 736.8L1209 737.3L1210 737L1210.5 735.6L1211 736.6L1212 735.5L1212.5 735.7L1213 735L1213.5 735.5L1214 759L1217.5 759L1218.5 756.6L1219.5 756.2L1220 754.5L1221 753.8L1223.5 749.6L1224.5 748.6L1225 749.3L1226 747.5L1226.5 748L1227 747.3L1227.5 747.4L1228.5 747L1229 746.2L1229.5 746.4L1230.5 745.8L1231 744.3L1231.5 744.3L1232 742.4L1232.5 742.7L1233.5 741L1234 740.7L1234.5 739.2L1236 737.9L1236.5 736.5L1238 736.7L1238.5 735.9L1239 736.7L1240 736.2L1240.5 736.5L1241 736.2L1241.5 734.7L1242.5 735.7L1243 755.2L1243.5 759L1246.5 759L1247 758.7L1248 757L1248.5 757L1249 756.5L1249.5 755L1250.5 754L1253.5 748.5L1255 747.4L1256.5 747L1257 747.5L1257.5 746.7L1259 746.5L1260 744.7L1261 744.1L1261.5 742L1262 741.5L1262.5 741.8L1263 740L1263.5 741L1264 738.9L1265 737.7L1266.5 736.9L1267 737.5L1268 736.1L1268.5 736.1L1269 736.8L1269.5 736.8L1270 735.7L1270.5 736.1L1272 735.1L1272.5 759L1276.5 759L1277 757.1L1277.5 756.9L1278 755.6L1278.5 755.9L1280 752.7L1281 751.9L1281.5 750.4L1283 749.1L1283.5 747.6L1284.5 748L1285 746.9L1286 747.3L1287 746.7L1288 747.4L1288.5 745.6L1289 746.3L1290 744.8L1291 742.1L1291.5 742.2L1292.5 739.7L1293 739.1L1293.5 739.7L1294.5 736.5L1295 737.9L1295.5 738.1L1296 736.5L1297 736.8L1297.5 736.6L1298 737.2L1299 735.9L1300 735.2L1300.5 735L1301 735.5L1301.5 735.2L1302 759L1305 759L1305.5 758L1306 758.6L1306.5 757L1307 757L1308 754.2L1309 753.9L1310 753L1310.5 751.6L1311 752L1311.5 750.2L1312 749.4L1312.5 749.2L1313.5 747.3L1314.5 746.6L1316 747.3L1316.5 746.4L1317.5 746.6L1318 745.1L1318.5 745.4L1319.5 743.3L1320.5 742.4L1321.5 739.6L1322 740.4L1323 738.6" fill="none" stroke="#139a90" stroke-width="1.3"/></g><defs><clipPath id="cw"><rect x="595" y="729" width="140" height="32"/><rect x="770" y="729" width="141" height="32"/><rect x="942" y="729" width="141" height="32"/><rect x="1116" y="729" width="142" height="32"/></clipPath></defs><g clip-path="url(#cw)"><path d="M474 738.7L474.5 737.7L475 737.6L475.5 736.4L476.5 735.8L477 735.1L477.5 735.3L479 734.3L479.5 734.5L480 734.4L481.5 735.2L484.5 740.6L486.5 754.4L488 759L492 759L493 756.6L495 748.8L496 747L497 747.5L498 747L499 746L502 740.7L502.5 740.5L504 738.3L504.5 736.7L505 737L505.5 736L506 735.8L506.5 735.1L507 735.7L507.5 734.6L509 734.7L509.5 734.4L510 734.9L510.5 734.8L511.5 735.7L512 737.6L512.5 737.5L514 741.4L515.5 752.9L516.5 757L517.5 759L521.5 759L525 747.1L526.5 747.4L528 746.6L529 744.4L530 743.4L530.5 741.8L531.5 740.8L532.5 738.9L535 735.6L536 735.8L536.5 734.9L538 734.2L539.5 734.7L540.5 735.4L543 740.3L545.5 756.2L546.5 758.5L547 759L551 758.8L553 751.1L554.5 747.3L555 747.1L555.5 747.7L556 747.1L556.5 747.3L557 746.8L558.5 745L562 738.5L564 735.9L565 735.8L567 734.2L568 734.7L569 734.6L570.5 736.5L571 737.9L571.5 738.3L572.5 740.3L574.5 754.2L576 758.9L576.5 759L580 759L580.5 758.4L583 749.1L584 746.6L584.5 747.3L585 746.9L585.5 747.8L586 747.7L588.5 744L590.5 740L593 736.5L594 735.4L594.5 735.7L595 734.8L595.5 735.1L596 734.3L596.5 734.7L597 734.1L597.5 734.5L598.5 734.6L600 737.4L600.5 737.4L602 741.2L603.5 752.5L605 758.5L605.5 759L609.5 759L613 747.1L614 747.7L614.5 747.2L615.5 747.2L616.5 746L620.5 738.6L621 738.4L621.5 737.4L623 735.7L623.5 735.9L624 735.2L624.5 735.3L625.5 734.4L626.5 734.3L628.5 735.4L629.5 737.4L630 737.8L631 740.2L631.5 742L633.5 756L634.5 758.7L635 759L639 759L642 747.9L642.5 747L643 747.7L643.5 747.2L644.5 747.3L645.5 746.6L647.5 742.7L648.5 741.8L649 740.4L652 736L653.5 735.4L655 734.4L655.5 734.6L656 734.1L656.5 734.5L657.5 734.6L658.5 737L659 737.1L660.5 740.4L662.5 754.2L663.5 758.1L664.5 759L668 759L668.5 758.2L671 749.2L672 746.8L673 747.7L674 747L674.5 747.1L676.5 743.4L681.5 735.9L682 735.8L683.5 734.7L684.5 734.9L685 734.4L687 734.9L689 739.1L690 740.5L691.5 752.3L692.5 756.7L693.5 759L697.5 759L698 758.1L701 746.7L701.5 746.6L702 747.7L702.5 747.4L703 747.7L704.5 746.1L706 743.2L707.5 741.4L709.5 737.4L710 737.3L711 735.8L711.5 735.8L713.5 734.2L714 734.2L714.5 734.9L715.5 734.2L716.5 735.2L718.5 738.6L719.5 741.6L721.5 755.4L722 757.4L723 759L727 759L730.5 747.2L731 746.9L733 747.2L735 744.3L736 741.9L737 740.9L738 738.5L740 736.2L742 735.4L743 734.6L744 734.8L745 734.3L748 738.9L748.5 740.5L750.5 753.9L752 758.5L752.5 759L756 759L756.5 758.6L759.5 747.8L760 747.2L760.5 747.5L762.5 747.1L764.5 744L765 742.5L767.5 738.6L768 738.4L769 736.5L769.5 736.3L770 735.6L770.5 735.4L771 735.7L772 734.7L773 734.4L773.5 734.8L774.5 734.7L775 734.9L778 740.6L780 755L781.5 759L785.5 759L789 747.5L790.5 747.5L792 746.5L794 744L797 738.3L798.5 736.4L799 736.5L800 735.7L800.5 734.8L801 734.9L802 734.3L802.5 734.8L803 734.2L803.5 734.8L804 734.8L805 736L805.5 737.5L806 737.7L807 739.8L808 744.6L809 752.8L810 756.8L811 759L815 759L818.5 747.1L819 747.5L820 746.9L821 747.3L826 739L828 736.2L830 734.9L831 734.5L831.5 734.8L832 734.4L833.5 735L834.5 735.8L836.5 740.2L838.5 753.6L840 758.7L840.5 759L844.5 758.8L847.5 747.8L848 747L848.5 747.6L849.5 747.3L850.5 747.6L854 740.9L857 736.6L857.5 736.6L858 735.7L859 735.4L859.5 734.7L861 734.6L861.5 734.1L863.5 735.5L865.5 739.8L866 740.3L868 754.4L869.5 758.9L870 759L873.5 759L874 758.5L877 747.7L877.5 747.3L879.5 747.6L881 745.3L882 743.1L882.5 743L883 742.2L884.5 739L885 738.8L886.5 736.3L888.5 735.3L889.5 734.3L892 734.5L893.5 736.8L894 737.1L895 739.4L896 744.1L897 752.8L898 756.9L899 759L903 759L906.5 746.6L908 747.3L908.5 746.8L909 747.4L910 745.7L910.5 745.4L911.5 743L913 740.6L916 736.3L918 734.9L919 734.5L920.5 734.8L921.5 734.6L924.5 739.9L925 741.8L926.5 753.9L927.5 757.6L928 758.7L928.5 759L932.5 759L934.5 751.3L936 747.4L936.5 746.7L937 747.5L937.5 747.5L938 746.7L938.5 747L940.5 744.2L941.5 741.8L943.5 739.1L944 737.8L945 737L945.5 736L946.5 735.7L948 734.4L949 735.1L949.5 734L950 734.7L951 734.8L953.5 739.6L954 739.9L956 754.4L957.5 758.8L958 759L961.5 759L962 758.4L965 747.5L965.5 747.1L966.5 747.7L967 746.9L967.5 747.2L968 746.9L973.5 737.5L974 737.4L975 735.7L976 735.8L976.5 735.5L977 734.6L977.5 734.8L978.5 734.4L979.5 735.1L980.5 735.2L982.5 738.5L983.5 741.3L985.5 755.2L987 759L991 759L991.5 758.1L994.5 747.4L997 747.4L999 743.9L999.5 743.7L1000.5 741.4L1001 741.3L1002 739.2L1004 736.4L1004.5 736.1L1005 736.2L1005.5 735.2L1006.5 735L1007.5 734L1008 734.9L1009.5 734.7L1012.5 739.4L1014.5 753.2L1015.5 757.1L1016.5 759L1020.5 759L1024 746.9L1024.5 747.6L1026 747.4L1028 745L1030.5 740L1032.5 736.9L1033 737L1034 735.8L1035.5 735.2L1036.5 734.1L1037.5 734.6L1038 734.3L1039 735L1040 737.1L1040.5 736.9L1042 740.1L1044 753.7L1045.5 759L1046 759L1049.5 759L1050 758.4L1053 747.9L1053.5 747.1L1054 747.5L1054.5 747.1L1055.5 747.5L1056 747.3L1058 743.6L1059 742.5L1061 738.2L1061.5 738.1L1063 736L1065.5 734.7L1066 734L1066.5 734.5L1067 734.3L1067.5 735.3L1068 734.9L1069 735.9L1071.5 740.3L1073 751.9L1074 756.8L1075 759L1079 759L1082.5 747.3L1083 747.1L1083.5 747.8L1084.5 747.5L1085 746.9L1085.5 746.9L1086 745.3L1086.5 745.4L1087 744.2L1087.5 743.9L1088.5 741.5L1089.5 740.4L1091.5 736.9L1092 736.8L1092.5 735.5L1093.5 736L1094 734.7L1094.5 735L1095 734.4L1095.5 735L1096 734.7L1096.5 735L1097 734.5L1097.5 734.8L1099 736.7L1100 738.6L1101.5 744.8L1102.5 752.9L1103.5 757.1L1104.5 759L1108.5 759L1112 747.5L1113 747.2L1113.5 747.8L1114 747L1114.5 747.2L1116 744.7L1117 743.7L1119 739.7L1121.5 736.2L1123 735.5L1123.5 734.9L1124 735L1124.5 734.5L1125.5 734.8L1127 734.5L1129 738.1L1129.5 739.8L1130 740.1L1132.5 756.1L1134 759L1138 758.8L1141.5 746.6L1142.5 747.8L1144.5 746.7L1146.5 742.6L1148.5 739.7L1149 738.3L1151.5 735.7L1152 736.1L1152.5 735.1L1153 735.3L1154 734.4L1154.5 734.7L1156 734.3L1157 735.4L1159.5 740.4L1161.5 754.6L1163 758.9L1163.5 759L1167 759L1167.5 758.3L1170.5 747.1L1172 747.4L1172.5 747.1L1173 747.3L1173.5 746.9L1175.5 743.8L1176.5 741.5L1177 741.2L1177.5 740L1180 736.4L1180.5 736.4L1182 735.3L1182.5 734.4L1183.5 734.7L1184 734.2L1184.5 735.2L1185 735.1L1185.5 734.1L1189 741L1191 755.4L1192 758.3L1192.5 759L1196.5 759L1200 747.4L1200.5 747.4L1201 746.9L1202 747.5L1202.5 746.7L1203 746.6L1204.5 743.7L1206.5 741.1L1208 738L1208.5 737.9L1209.5 736.1L1210 735.7L1210.5 735.8L1211 735.1L1213 734.3L1213.5 734.6L1214.5 734.4L1215 734.7L1216 736.1L1218 740.1L1218.5 741.9L1220 753.4L1221 757L1222 759L1226 759L1229 748L1229.5 747.2L1230.5 747.6L1232.5 746.4L1233.5 745.2L1234 743.5L1236 741.1L1236.5 739.5L1238.5 736.5L1239.5 735.5L1240 735.9L1240.5 735L1241.5 735L1242 734.6L1242.5 734.8L1243 734.5L1244.5 735L1247.5 739.9L1249.5 754.4L1251 758.8L1251.5 759L1255.5 758.8L1258.5 747.7L1259.5 747.3L1260.5 747.7L1261.5 747.1L1265.5 740.2L1266.5 739.3L1267 737.7L1268.5 736L1271 734.5L1273.5 734.7L1274.5 735.9L1277 740.6L1278.5 752.1L1279.5 756.6L1280.5 759L1284.5 759L1285 758.1L1288 747.2L1288.5 747.1L1289 747.6L1290 747.3L1290.5 747.5L1294.5 741.1L1295 739.6L1295.5 738.9L1296 738.7L1298 735.8L1298.5 735.7L1299 736.1L1299.5 734.5L1300 734.6L1300.5 734.3L1301 734.7L1302 734.3L1302.5 734.8L1303 734.5L1305 737.6L1305.5 739.3L1306 739.6L1308 753.3L1309 756.9L1310 759L1314 759L1315.5 752.9L1317.5 747.1L1318 747.6L1318.5 747.4L1319 747.7L1320 747.2L1323 742.1" fill="none" stroke="#fb5012" stroke-width="1.3"/><path d="M474 741.4L480 759L481 759L487.5 747.6L495.5 747.6L500.5 733.4L509 758L509.5 759L510.5 759L517 747.6L525 747.6L530 733.4L538.5 758.5L539 759L539.5 759L540 758.7L546 747.9L546.5 747.6L554 747.6L554.5 747.2L559 734L559.5 733.9L568 758.9L569 759L575.5 747.7L583.5 747.6L588.5 733.6L589 734.3L597 757.9L597.5 759L598.5 759L605 747.6L613 747.6L618 733.3L626.5 758.3L627 759L627.5 759L628 758.8L634 748L634.5 747.6L642 747.6L642.5 747.3L647 734.2L647.5 733.7L656 758.7L657 759L657.5 758.6L663.5 747.8L671.5 747.6L672 746.9L676.5 733.7L677 734.2L685.5 759L686.5 759L693 747.6L701 747.6L706 733.3L714.5 758.2L715 759L715.5 759L716 758.9L722.5 747.6L730.5 747.5L735 734.3L735.5 733.6L744 758.6L745 759L745.5 758.6L751.5 747.8L752 747.6L759.5 747.6L760 747L764.5 733.9L765 734L773.5 759L774.5 759L781 747.6L789 747.6L794 733.4L802.5 758L803 759L804 759L810.5 747.6L818.5 747.6L823.5 733.4L832 758.5L832.5 759L833 759L833.5 758.7L839.5 747.9L840 747.6L847.5 747.6L848 747.2L852.5 734L853 733.9L861.5 758.9L862.5 759L869 747.7L877 747.6L882 733.6L882.5 734.3L890.5 757.9L891 759L892 759L898.5 747.6L906.5 747.6L911.5 733.3L920 758.3L920.5 759L921 759L921.5 758.8L927.5 748L928 747.6L935.5 747.6L936 747.3L940.5 734.2L941 733.7L949.5 758.7L950.5 759L951 758.6L957 747.8L965 747.6L965.5 746.9L970 733.7L970.5 734.2L979 759L980 759L986.5 747.6L994.5 747.6L999.5 733.3L1008 758.2L1008.5 759L1009 759L1009.5 758.9L1016 747.6L1024 747.5L1028.5 734.3L1029 733.6L1037.5 758.6L1038.5 759L1039 758.6L1045 747.8L1045.5 747.6L1053 747.6L1053.5 747L1058 733.9L1058.5 734L1067 759L1068 759L1074.5 747.6L1082.5 747.6L1087.5 733.4L1096 758L1096.5 759L1097.5 759L1104 747.6L1112 747.6L1117 733.4L1125.5 758.5L1126 759L1126.5 759L1127 758.7L1133 747.9L1133.5 747.6L1141 747.6L1141.5 747.2L1146 734L1146.5 733.9L1155 758.9L1156 759L1162.5 747.7L1170.5 747.6L1175.5 733.6L1176 734.3L1184 757.9L1184.5 759L1185.5 759L1192 747.6L1200 747.6L1205 733.3L1213.5 758.3L1214 759L1214.5 759L1215 758.8L1221 748L1221.5 747.6L1229 747.6L1229.5 747.3L1234 734.2L1234.5 733.7L1243 758.7L1244 759L1244.5 758.6L1250.5 747.8L1258.5 747.6L1259 746.9L1263.5 733.7L1264 734.2L1272.5 759L1273.5 759L1280 747.6L1288 747.6L1293 733.3L1301.5 758.2L1302 759L1302.5 759L1303 758.9L1309.5 747.6L1317.5 747.5L1322 734.3L1322.5 733.6L1323 735" fill="none" stroke="#5a5670" stroke-width="1.3"/><path d="M474 737.8L474.5 737.6L475 736.5L475.5 737.8L476 736.6L476.5 737.5L477 735.5L477.5 735.8L478 735.1L478.5 735.8L479 735.2L479.5 735.4L480 759L483.5 759L484 758.7L484.5 757.5L485 757.5L486 755.1L487 754.2L487.5 752.2L488 752.5L488.5 752.2L490.5 749.2L491 747.3L491.5 748L492.5 747.3L493 746.5L493.5 747.5L494 747.6L494.5 745.8L495 747.7L496.5 744.4L497 745.4L497.5 745.4L498 743.1L498.5 743L499.5 741L501 739.3L502 736.9L502.5 737.5L503 737.6L503.5 736.8L504 736.7L504.5 737.3L505.5 735.9L506 736.3L506.5 736.2L507 735.8L508 735.5L508.5 736.3L509 734.3L509.5 759L513 758.8L513.5 758L514 757.8L514.5 756.1L515.5 755.2L516.5 752.6L517 752.8L518 750.5L518.5 751.5L519.5 749.1L520 749.7L521 747.3L522 747.3L522.5 748.5L523 746.1L523.5 746.9L524.5 746.7L525 747.7L526 746L526.5 743.6L527 744.4L529.5 740.2L530.5 740.5L531 738.1L532 736.8L533 737.4L533.5 736.7L534 737.5L535 736.9L536 734.9L536.5 735.4L537 735.1L538.5 735.3L539 759L542 759L542.5 758.7L543 759L544 757.1L544.5 755.3L546 752.8L546.5 753L547.5 750.4L548 750.7L548.5 749.4L549.5 749.4L550 748L550.5 748.3L551 747.7L551.5 747.8L552 747.3L552.5 748.4L553 746.1L554 747.1L554.5 747.1L555.5 744.8L556.5 743.5L557 744L558 740.9L559 740.9L560 739.4L561 737L561.5 737.5L562 736.6L563 737.6L563.5 737L564 735.3L564.5 736.7L565 736.7L565.5 735.3L566 735.7L566.5 735.6L567 734.6L567.5 736.2L568 759L571.5 759L572 758.1L572.5 758.2L573.5 756.6L574 754.9L575 755L576 751.8L576.5 751.4L577 751.8L577.5 749.2L578 750L578.5 749.7L580 747L581 747.8L582 748L582.5 747.2L583 747.3L583.5 746.7L584 747L584.5 745.9L587 742.7L587.5 741L588 740.6L588.5 740.6L590 737L590.5 737.6L591.5 737.5L592.5 736.5L593.5 736.6L594 736L595 735.8L595.5 736.2L596 735.4L596.5 735.9L597 735.6L597.5 759L601 758.8L602 756.3L603 756L604.5 753.1L605 752.5L605.5 752.5L608 749L608.5 749.3L609.5 747.6L610 748.2L610.5 747.2L611 748.1L612 746.9L612.5 747.5L613 747.2L613.5 744.8L614 745.8L616.5 741.3L618.5 739.7L620 737.1L620.5 737.2L621.5 736.4L622 736.8L622.5 735.4L623 736.7L624 736.3L624.5 735.2L625.5 735.9L626.5 734.5L627 759L630 759L630.5 758.7L631.5 756.6L632.5 755.3L633 755.5L634 753.5L634.5 753.9L635 751.6L636 751L636.5 748.9L637 749.3L637.5 749L638 748.1L639 747.3L640 747.9L641.5 747.6L642 746.9L642.5 746.9L645 743.2L645.5 741.7L646 742.1L646.5 740.8L647 740.2L647.5 740.2L648 738.4L648.5 737.9L649 738.7L649.5 737.1L650 736.7L650.5 737.5L651 736L652 737.1L652.5 736L654 736.9L654.5 735.5L655 735.8L655.5 734.9L656 754.9L656.5 759L659.5 759L660 758.7L660.5 758L661 756.1L661.5 755.4L663 754.7L664 751.8L665.5 751.2L666 749.8L666.5 749.6L667.5 747.6L668 747.3L669 747.8L670 746.3L671 747.7L671.5 746L672 746.3L672.5 743.9L673 745.3L674.5 742.6L676 741.7L676.5 740L677.5 738.8L678 736.7L678.5 737.1L679 736.8L679.5 737.4L680 736.8L681 736.7L681.5 736.1L683 735.8L683.5 736.5L684.5 735.2L685 735.4L685.5 759L688.5 759L689.5 758.6L690 757.3L690.5 757.3L691 756.4L691.5 754.9L692 754.8L692.5 753.2L693 752.9L694 751.2L694.5 752.2L695 750.4L695.5 750.3L697 747.3L697.5 747.8L698 746.8L698.5 747.8L700 746.6L701 747.1L701.5 746.4L702 746.2L702.5 744.1L704.5 742.2L705.5 740.1L706 740.2L706.5 739.5L707 737.5L707.5 736.8L708 737.3L709 737L709.5 736.2L710 737L711.5 735.5L712 736.2L712.5 735.7L713 735.9L714 735.7L714.5 735.1L715 759L718 759L718.5 758.2L719 758.4L721 754.8L721.5 755.1L722 753.5L722.5 753.5L723 751.9L723.5 752.1L724 751.4L725 749.5L725.5 749.3L726 748L727 747.7L728 747L728.5 747.7L729.5 747.1L730 748L730.5 746.5L731 746.4L733.5 742.2L734 742.1L734.5 740.6L735.5 739.7L736.5 737.7L737.5 737.1L738 737.2L739 735.7L740 737.4L740.5 735.5L741 736.5L742 737L742.5 735.4L743.5 734.8L744 735.3L744.5 759L747.5 759L748 757.7L748.5 757.8L749 757.4L751 754L751.5 754.6L752 752L752.5 752.4L753 751L753.5 751.1L754 749.9L754.5 749.3L755 749.3L755.5 747.8L756 747.6L757 748.7L757.5 747.8L759 747L759.5 746L760.5 745.9L761 745L761.5 745.9L762 744.1L764.5 739.6L765 739.7L765.5 738.5L767 737.2L767.5 737.3L768.5 736.9L769 736.1L769.5 736.5L770 736.1L770.5 734.8L771 735.6L772 735L772.5 735.9L773 734.9L773.5 759L777 759L779.5 754.8L780 755L780.5 753.8L781 753.6L781.5 751.9L782.5 751.8L783 750.4L783.5 750.3L784 748.5L784.5 748.5L785 749.1L786 747.2L787 747.7L787.5 746.9L788 746.8L788.5 746.2L789 746.4L790 746L792 742.5L792.5 742.6L793 741L796 737.1L796.5 737.5L797 737L797.5 737.4L798 736.6L798.5 736.6L799 737.1L799.5 735.6L800 736.5L800.5 735.8L801 736.4L801.5 736.4L802 735L802.5 735.9L803 759L806.5 758.8L807 759L807.5 757.5L808 757.4L809 754.3L809.5 754.7L810.5 752.8L811.5 751.7L812 750.2L812.5 750.3L813.5 748.7L814 748.8L814.5 747.8L815 747.8L816.5 746.6L817 748.2L817.5 747.4L818.5 747.2L819 745.9L820 744.6L820.5 744.8L821.5 742.5L824 739.4L824.5 737.3L825 738L825.5 737.1L826.5 736.6L827 737.2L827.5 737.2L828 736.3L828.5 736.2L829 737.4L829.5 737.4L830 736.1L831.5 735.1L832 735.6L832.5 759L835.5 759L836 757.2L836.5 757.4L837 756.5L837.5 756.3L838 756.8L838.5 754.9L839 754.6L840.5 751.8L841 751.9L844 746.9L844.5 747.9L845 747.2L845.5 748L847 746.7L847.5 747.4L849 744.5L850.5 743.2L851 742.1L852.5 741.1L854.5 737.5L855 738.1L856.5 736.4L857 736.7L857.5 736.4L858 736.5L858.5 735.7L859 736.8L859.5 735.7L860 736.8L860.5 734.5L861 734.8L861.5 759L865.5 759L866 757.9L867 757.1L868.5 753.5L869 753.6L869.5 753.2L871 750.1L871.5 749.5L872 749.9L873 748.1L873.5 748.3L874 747.3L874.5 747.7L876 747.1L876.5 747.8L877 745.8L877.5 746.7L878.5 745.8L879 744.3L879.5 744.2L880.5 741.5L881.5 740.9L882 739.3L882.5 739.3L883.5 737.7L884 737.8L884.5 737.1L885 737.8L885.5 737.9L886 736.2L886.5 737L887.5 736.1L888.5 736.5L889 735.8L889.5 736L890 735.1L890.5 735.4L891 759L894 759L895 758.3L895.5 757L896 757.5L897.5 753.9L898.5 753.5L899 751.8L900 750.5L900.5 751.2L901 749.7L901.5 749.4L902.5 747.7L903 747.4L903.5 747.9L904 747.7L904.5 746.7L905.5 747.2L906 746.7L907 746.8L908.5 743.7L909 743.9L910 742.2L910.5 741.9L911 739.9L911.5 739.5L912 738.3L912.5 739.4L913.5 736.5L914 738L914.5 738L915.5 735.9L916.5 736.9L917 735.9L918.5 735.5L920 734.4L920.5 759L923.5 759L924 758.1L925 758.2L925.5 756.2L926 756.6L926.5 753.9L927 755L927.5 754.6L928 753.9L928.5 752L929.5 750.5L930.5 749.8L931 748.3L932 748.7L932.5 747.3L933 747.4L933.5 748L934.5 746.7L935 746.6L935.5 747.5L936 746.1L936.5 747.3L937.5 744.3L938.5 743L939 743.2L940 740.7L940.5 740.7L941.5 738.8L942 739.2L943 737.1L943.5 738L944.5 736.7L945 737.4L946 735.9L946.5 735.8L947 736.5L947.5 735.3L948.5 735.4L949 734.5L949.5 754.7L950 759L953 759L955 755.6L956 755.8L956.5 753.3L958 752L959 750.5L959.5 750.4L960 748.8L960.5 748.4L961 748.5L961.5 747.7L962 747.9L962.5 747.6L963 747.2L963.5 745.9L964 747.7L964.5 746.8L965.5 746.2L966 745L966.5 745.2L967.5 743.6L968 743.6L968.5 741.6L969 742.1L970 739.4L970.5 739.7L972 736.7L973 738.1L973.5 736.4L974 736.3L974.5 737.7L975 737.9L975.5 734.9L976.5 737L977 735.2L977.5 734.8L978 736.6L978.5 734.5L979 759L982.5 758.9L983 757.8L984 757.1L984.5 755.9L985 755.8L985.5 754.6L986.5 753.4L989 748.8L989.5 749.6L990 748.2L991 747.2L991.5 748.8L992 747.8L993 747.1L993.5 745.9L994 746.8L994.5 746.9L995.5 745L996 744.9L996.5 743.2L997 744L997.5 742L999 739.7L999.5 739.9L1000.5 738.2L1002 737.7L1002.5 736.7L1003 738.1L1004.5 735.7L1005 736.3L1005.5 735.4L1007 736.3L1008 734.3L1008.5 759L1011.5 759L1012.5 758.5L1013 757L1013.5 757.3L1014 756.4L1014.5 754.6L1017.5 751L1018 749.6L1018.5 750.1L1019 749.7L1020 747.5L1021 748.8L1021.5 746L1022 747.8L1023 746.8L1024.5 746.8L1025 745L1025.5 745.1L1026.5 742.7L1027.5 742.6L1028.5 740L1029 739.2L1029.5 739.5L1030 738.1L1031 736.9L1032.5 737L1033.5 736.1L1034 736.4L1034.5 736.3L1035 735.1L1036 736L1036.5 735.1L1037 735.9L1037.5 735.7L1038 759L1041 759L1043 756L1043.5 756L1044 754.7L1044.5 754.4L1045.5 752.7L1046.5 752L1047 750.5L1048 749L1048.5 749.1L1049 747.9L1050 748L1051 747.6L1051.5 748L1053 746.6L1053.5 746.6L1054 745.1L1055.5 743.5L1056 743.6L1057 740.8L1057.5 741.3L1058 739.4L1060 737.5L1060.5 737.8L1061 737.2L1062 736.8L1062.5 737.3L1063 736L1063.5 736.6L1064.5 735.6L1065 735.9L1065.5 734.3L1066 735.3L1066.5 735L1067 759L1070.5 759L1071.5 757.4L1072 757.5L1072.5 755.8L1073.5 755L1074.5 752.8L1076 752.2L1077 749.5L1077.5 748.7L1078 749L1079 747.3L1079.5 748.1L1080.5 747.9L1081 747L1081.5 748.1L1082 747L1083 746.3L1083.5 745.1L1085.5 743.2L1086 741.7L1087 740.5L1087.5 740.3L1088 738.5L1089 737.3L1089.5 738.1L1090 736L1091 737.5L1091.5 736.3L1092.5 736.8L1093 736.6L1093.5 735.8L1094.5 735.6L1095.5 735.9L1096 735L1096.5 759L1100 758.8L1101 757.5L1102 755.1L1102.5 755.5L1103 754L1103.5 754.2L1104 752.6L1105.5 750.8L1106 750.6L1108 746.8L1108.5 748.3L1109.5 747.5L1110.5 747.5L1111.5 747L1112 746.1L1113 745.7L1113.5 744.5L1114 745.3L1115.5 741.6L1116 742.2L1116.5 740.4L1117 740.2L1117.5 738.4L1118 737.8L1118.5 737.9L1119 737.2L1119.5 737.9L1120 737L1121 736.2L1122 737.5L1122.5 735.8L1123 736.6L1124 735.8L1124.5 734.6L1125 735.3L1125.5 734.5L1126 759L1129 759L1129.5 758.5L1130 758.6L1131 756.2L1132 755.8L1132.5 752.8L1133 752.5L1133.5 752.7L1135 750.4L1135.5 750.8L1137 747.4L1138.5 747.6L1139.5 746.5L1140 746.9L1141 746.3L1141.5 746.9L1142 745.3L1142.5 745.5L1143 744.9L1143.5 742.9L1144 743.8L1145 741.1L1146.5 739.9L1147.5 737.7L1149 737.9L1149.5 737L1150.5 736.3L1151 736.7L1151.5 735.9L1152 736.7L1152.5 736.8L1153 735.3L1153.5 735.8L1154 735.8L1154.5 735.3L1155 759L1159 759L1162.5 753.1L1163 753.5L1163.5 751.9L1164.5 751.1L1166.5 747L1167 748L1168 746.6L1168.5 747.7L1169 747.7L1170 747.3L1171.5 746L1172.5 744.2L1173 744.1L1174 741.9L1175.5 740.6L1176.5 739.2L1177 737.5L1178.5 737L1179 737.2L1179.5 736.7L1180.5 736.4L1181.5 736.6L1182 735.8L1182.5 735.5L1183 736.1L1184 735.2L1184.5 759L1187.5 759L1188 758.8L1188.5 757.9L1189 758.3L1191 755.1L1191.5 753.4L1192 753.7L1192.5 751.4L1193 751.6L1195.5 747.8L1197 747.5L1197.5 747L1198.5 747.5L1199 746.3L1199.5 747.2L1200.5 745.1L1201 745.8L1202.5 743.7L1203 742.2L1204 741.1L1204.5 741.3L1205 739.4L1206 739.2L1206.5 738L1207 738.3L1207.5 736.5L1208 737.9L1208.5 736.8L1209 737.3L1210 737L1210.5 735.6L1211 736.6L1212 735.5L1212.5 735.7L1213 735L1213.5 735.5L1214 759L1217.5 759L1218.5 756.6L1219.5 756.2L1220 754.5L1221 753.8L1223.5 749.6L1224.5 748.6L1225 749.3L1226 747.5L1226.5 748L1227 747.3L1227.5 747.4L1228.5 747L1229 746.2L1229.5 746.4L1230.5 745.8L1231 744.3L1231.5 744.3L1232 742.4L1232.5 742.7L1233.5 741L1234 740.7L1234.5 739.2L1236 737.9L1236.5 736.5L1238 736.7L1238.5 735.9L1239 736.7L1240 736.2L1240.5 736.5L1241 736.2L1241.5 734.7L1242.5 735.7L1243 755.2L1243.5 759L1246.5 759L1247 758.7L1248 757L1248.5 757L1249 756.5L1249.5 755L1250.5 754L1253.5 748.5L1255 747.4L1256.5 747L1257 747.5L1257.5 746.7L1259 746.5L1260 744.7L1261 744.1L1261.5 742L1262 741.5L1262.5 741.8L1263 740L1263.5 741L1264 738.9L1265 737.7L1266.5 736.9L1267 737.5L1268 736.1L1268.5 736.1L1269 736.8L1269.5 736.8L1270 735.7L1270.5 736.1L1272 735.1L1272.5 759L1276.5 759L1277 757.1L1277.5 756.9L1278 755.6L1278.5 755.9L1280 752.7L1281 751.9L1281.5 750.4L1283 749.1L1283.5 747.6L1284.5 748L1285 746.9L1286 747.3L1287 746.7L1288 747.4L1288.5 745.6L1289 746.3L1290 744.8L1291 742.1L1291.5 742.2L1292.5 739.7L1293 739.1L1293.5 739.7L1294.5 736.5L1295 737.9L1295.5 738.1L1296 736.5L1297 736.8L1297.5 736.6L1298 737.2L1299 735.9L1300 735.2L1300.5 735L1301 735.5L1301.5 735.2L1302 759L1305 759L1305.5 758L1306 758.6L1306.5 757L1307 757L1308 754.2L1309 753.9L1310 753L1310.5 751.6L1311 752L1311.5 750.2L1312 749.4L1312.5 749.2L1313.5 747.3L1314.5 746.6L1316 747.3L1316.5 746.4L1317.5 746.6L1318 745.1L1318.5 745.4L1319.5 743.3L1320.5 742.4L1321.5 739.6L1322 740.4L1323 738.6" fill="none" stroke="#139a90" stroke-width="1.3"/></g><rect x="595" y="731.5" width="140" height="27.5" rx="2" fill="none" stroke="#222" stroke-width="1" stroke-dasharray="4 3"/><rect x="770" y="731.5" width="141" height="27.5" rx="2" fill="none" stroke="#222" stroke-width="1" stroke-dasharray="4 3"/><rect x="942" y="731.5" width="141" height="27.5" rx="2" fill="none" stroke="#222" stroke-width="1" stroke-dasharray="4 3"/><rect x="1116" y="761" width="142" height="11" fill="#fff"/><rect x="1116" y="729.5" width="142" height="43" rx="3" fill="none" stroke="#333" stroke-width="1.2"/><path d="M1116 760.5H1258" stroke="#333" stroke-width="1.2"/><rect x="1116" y="737" width="4" height="18" fill="#111"/><rect x="1254" y="737" width="4" height="18" fill="#111"/><path d="M1185.7 763.5v6M1188.3 763.5v6" stroke="#666" stroke-width="1.2"/><path d="M474 774H1323" stroke="#8a8a8a" stroke-width="1.5"/><path d="M474.5 774v4.5M477.0 774v4.5M541.8 774v4.5M606.6 774v4.5M671.4 774v4.5M736.2 774v4.5M801.0 774v4.5M865.8 774v4.5M930.6 774v4.5M995.4 774v4.5M1060.2 774v4.5M1125.0 774v4.5M1189.8 774v4.5M1254.6 774v4.5M1319.4 774v4.5" stroke="#8a8a8a" stroke-width="1.2"/></svg>
<span class="t" style="left:462.25px;top:773.80px;font-size:10.6px;color:#333;letter-spacing:-0.227px;">09 PM</span>
<span class="t" style="left:526.55px;top:773.80px;font-size:10.6px;color:#333;letter-spacing:-0.416px;">Feb 20</span>
<span class="t" style="left:591.85px;top:773.80px;font-size:10.6px;color:#333;letter-spacing:-0.110px;">03 AM</span>
<span class="t" style="left:656.65px;top:773.80px;font-size:10.6px;color:#333;letter-spacing:-0.110px;">06 AM</span>
<span class="t" style="left:721.45px;top:773.80px;font-size:10.6px;color:#333;letter-spacing:-0.110px;">09 AM</span>
<span class="t" style="left:786.25px;top:773.80px;font-size:10.6px;color:#333;letter-spacing:-0.227px;">12 PM</span>
<span class="t" style="left:851.05px;top:773.80px;font-size:10.6px;color:#333;letter-spacing:-0.227px;">03 PM</span>
<span class="t" style="left:915.85px;top:773.80px;font-size:10.6px;color:#333;letter-spacing:-0.227px;">06 PM</span>
<span class="t" style="left:980.65px;top:773.80px;font-size:10.6px;color:#333;letter-spacing:-0.227px;">09 PM</span>
<span class="t" style="left:1041.95px;top:773.80px;font-size:10.6px;color:#333;letter-spacing:-0.257px;">Mon, 21</span>
<span class="t" style="left:1110.25px;top:773.80px;font-size:10.6px;color:#333;letter-spacing:-0.110px;">03 AM</span>
<span class="t" style="left:1175.05px;top:773.80px;font-size:10.6px;color:#333;letter-spacing:-0.110px;">06 AM</span>
<span class="t" style="left:1239.85px;top:773.80px;font-size:10.6px;color:#333;letter-spacing:-0.110px;">09 AM</span>
<span class="t" style="left:1304.65px;top:773.80px;font-size:10.6px;color:#333;letter-spacing:-0.227px;">12 PM</span>
<div class="b" style="left:473.5px;top:798px;width:244px;height:24px;background:#fff;border:1px solid #e0e0e0;border-radius:3px;box-sizing:border-box"></div>
<span class="t" style="left:481.95px;top:799.80px;font-size:12.6px;color:#222;">1D</span>
<span class="t" style="left:515.55px;top:799.80px;font-size:12.6px;color:#222;">1W</span>
<span class="t" style="left:551.75px;top:799.80px;font-size:12.6px;color:#222;">1M</span>
<span class="t" style="left:587.25px;top:799.80px;font-size:12.6px;color:#222;">3M</span>
<span class="t" style="left:622.25px;top:799.80px;font-size:12.6px;color:#222;">6M</span>
<span class="t" style="left:656.79px;top:799.80px;font-size:12.6px;color:#222;">1Y</span>
<span class="t" style="left:687.79px;top:799.80px;font-size:12.6px;color:#222;">ALL</span>
<div class="b" style="left:507px;top:799px;width:1px;height:22px;background:#e0e0e0"></div>
<div class="b" style="left:543px;top:799px;width:1px;height:22px;background:#e0e0e0"></div>
<div class="b" style="left:578px;top:799px;width:1px;height:22px;background:#e0e0e0"></div>
<div class="b" style="left:613px;top:799px;width:1px;height:22px;background:#e0e0e0"></div>
<div class="b" style="left:648px;top:799px;width:1px;height:22px;background:#e0e0e0"></div>
<div class="b" style="left:679px;top:799px;width:1px;height:22px;background:#e0e0e0"></div>
<div class="b" style="left:734px;top:798px;width:104px;height:24px;background:#fff;border:1px solid #e0e0e0;border-radius:3px;box-sizing:border-box"></div>
<div class="b" style="left:735px;top:799px;width:79px;height:22px;background:#f0f5fb"></div>
<div class="b" style="left:814px;top:799px;width:1px;height:22px;background:#e0e0e0"></div>
<span class="t" style="left:743.00px;top:799.80px;font-size:12.6px;color:#1565c0;letter-spacing:-0.561px;">CUSTOM</span>
<svg class="b" style="left:799px;top:806.3px;" width="10" height="6" viewBox="0 0 10 6"><path d="M1 5.3h8L5 1z" fill="#999"/></svg>
<svg class="b" style="left:820px;top:804.3px;" width="12" height="11" viewBox="0 0 12 11"><g fill="none" stroke="#666" stroke-width="1.1"><rect x="1" y="1" width="10" height="9" rx="1.5"/></g><g fill="#666"><path d="M3 3h2.2L3 5.2zM9 3H6.8L9 5.2zM3 8h2.2L3 5.8zM9 8H6.8L9 5.8z"/></g></svg>
<div class="b" style="left:1330px;top:775px;width:50px;height:20px;background:#000"></div>
<svg class="b" style="left:0;top:0" width="1380" height="900" viewBox="0 0 1380 900"><rect x="431" y="78.3" width="898" height="345.7" fill="none" stroke="#6d05fb" stroke-width="2" stroke-dasharray="8 4.4"/><rect x="543" y="79.5" width="153.5" height="45.5" fill="none" stroke="#6d05fb" stroke-width="2" stroke-dasharray="8 4.4"/><rect x="1291.2" y="131" width="34.3" height="34" fill="none" stroke="#6d05fb" stroke-width="2" stroke-dasharray="5.5 3"/><rect x="558" y="50" width="202" height="32" rx="5" fill="#6d05fb"/><rect x="971" y="247.3" width="211" height="32" rx="5" fill="#6d05fb"/><path d="M1181 262L1290 166" stroke="#6d05fb" stroke-width="1.6" fill="none"/><path d="M1281 164.5L1290.5 165.5L1290 175" stroke="#6d05fb" stroke-width="1.6" fill="none"/></svg>
<span class="t" style="left:584.00px;top:56.50px;font-size:15.3px;font-weight:700;color:#fff;letter-spacing:-0.238px;">Compare layers table</span>
<span class="t" style="left:992.00px;top:253.50px;font-size:15.3px;font-weight:700;color:#fff;letter-spacing:-0.379px;">Compare layers settings</span>
<svg class="b" style="left:0;top:0" width="1380" height="900" viewBox="0 0 1380 900">
<defs>
<filter id="b1" x="-5%" y="-5%" width="110%" height="110%"><feGaussianBlur stdDeviation="2.6"/></filter>
<filter id="b2" x="-5%" y="-5%" width="110%" height="110%"><feGaussianBlur stdDeviation="9"/></filter>
<filter id="nz" x="0" y="0" width="100%" height="100%" color-interpolation-filters="sRGB">
<feTurbulence type="fractalNoise" baseFrequency="0.78" numOctaves="1" seed="7" result="n"/>
<feColorMatrix in="n" type="matrix" values="1 0 0 0 0 1 0 0 0 0 1 0 0 0 0 0 0 0 0 1" result="ng"/>
<feComponentTransfer in="ng" result="bn"><feFuncR type="linear" slope="40" intercept="-21.65"/><feFuncG type="linear" slope="40" intercept="-21.65"/><feFuncB type="linear" slope="40" intercept="-21.65"/></feComponentTransfer>
<feComposite in="bn" in2="SourceGraphic" operator="arithmetic" k1="1" k2="0" k3="0" k4="0"/>
</filter>
<clipPath id="oc"><rect x="5" y="5.5" width="1370" height="888.5" rx="47"/></clipPath>
<mask id="hole"><rect width="1380" height="900" fill="#fff"/><rect x="50" y="30" width="1280" height="800" fill="#000"/></mask>
</defs>
<g mask="url(#hole)"><g filter="url(#nz)"><rect width="1380" height="900" fill="#000"/><g clip-path="url(#oc)"><rect width="1380" height="900" fill="#fff"/><rect x="12" y="12.5" width="1356" height="874.5" rx="44" fill="#000" opacity="0.72" filter="url(#b1)"/><rect x="24" y="20" width="1332" height="848" rx="32" fill="#000" opacity="0.8" filter="url(#b2)"/></g></g></g>
</svg>
</div></body></html>
